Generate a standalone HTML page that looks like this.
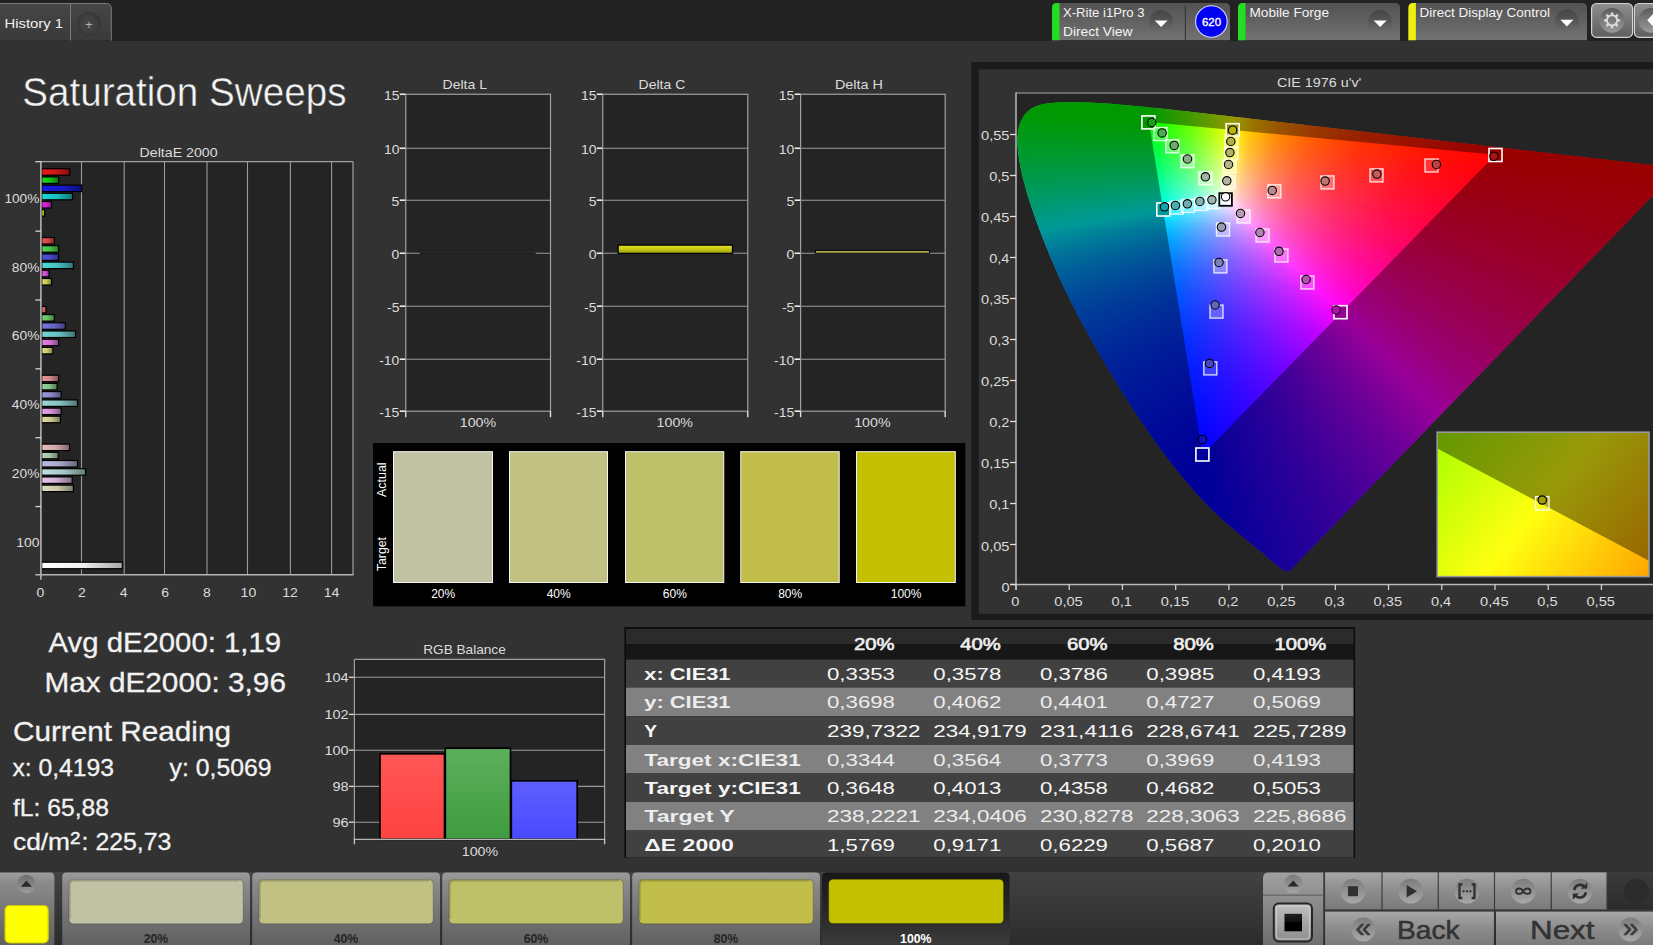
<!DOCTYPE html>
<html lang="en"><head><meta charset="utf-8"><title>Saturation Sweeps</title>
<style>html,body{margin:0;padding:0;background:#323232;overflow:hidden}svg{display:block;font-family:'Liberation Sans', sans-serif}</style>
</head><body>
<svg width="1653" height="945" viewBox="0 0 1653 945">
<defs>
<linearGradient id="g1" x1="0" y1="0" x2="0" y2="1"><stop offset="0" stop-color="#464646"/><stop offset="1" stop-color="#3a3a3a"/></linearGradient>
<radialGradient id="g2" cx="0.5" cy="0.5" r="0.5"><stop offset="0" stop-color="#484848"/><stop offset="0.8" stop-color="#3c3c3c"/><stop offset="1" stop-color="#353535"/></radialGradient>
<linearGradient id="g3" x1="0" y1="0" x2="0" y2="1"><stop offset="0" stop-color="#525252"/><stop offset="1" stop-color="#727272"/></linearGradient>
<linearGradient id="g4" x1="0" y1="0" x2="0" y2="1"><stop offset="0" stop-color="#454545"/><stop offset="0.5" stop-color="#575757"/><stop offset="1" stop-color="#707070"/></linearGradient>
<linearGradient id="g5" x1="0" y1="0" x2="0" y2="1"><stop offset="0" stop-color="#454545"/><stop offset="0.5" stop-color="#575757"/><stop offset="1" stop-color="#707070"/></linearGradient>
<linearGradient id="g6" x1="0" y1="0" x2="0" y2="1"><stop offset="0" stop-color="#454545"/><stop offset="0.5" stop-color="#575757"/><stop offset="1" stop-color="#707070"/></linearGradient>
<linearGradient id="g7" x1="0" y1="0" x2="0" y2="1"><stop offset="0" stop-color="#8e8e8e"/><stop offset="1" stop-color="#5e5e5e"/></linearGradient>
<linearGradient id="g8" x1="0" y1="0" x2="0" y2="1"><stop offset="0" stop-color="#5c5c5c"/><stop offset="1" stop-color="#9a9a9a"/></linearGradient>
<linearGradient id="g9" x1="0" y1="0" x2="1" y2="0"><stop offset="0" stop-color="#e81a1a"/><stop offset="0.5" stop-color="#d01818"/><stop offset="1" stop-color="#800e0e"/></linearGradient>
<linearGradient id="g10" x1="0" y1="0" x2="1" y2="0"><stop offset="0" stop-color="#1ad71a"/><stop offset="0.5" stop-color="#18c018"/><stop offset="1" stop-color="#0e770e"/></linearGradient>
<linearGradient id="g11" x1="0" y1="0" x2="1" y2="0"><stop offset="0" stop-color="#1a1ae0"/><stop offset="0.5" stop-color="#1818c8"/><stop offset="1" stop-color="#0e0e7c"/></linearGradient>
<linearGradient id="g12" x1="0" y1="0" x2="1" y2="0"><stop offset="0" stop-color="#1ad7d7"/><stop offset="0.5" stop-color="#18c0c0"/><stop offset="1" stop-color="#0e7777"/></linearGradient>
<linearGradient id="g13" x1="0" y1="0" x2="1" y2="0"><stop offset="0" stop-color="#e823e8"/><stop offset="0.5" stop-color="#d020d0"/><stop offset="1" stop-color="#801380"/></linearGradient>
<linearGradient id="g14" x1="0" y1="0" x2="1" y2="0"><stop offset="0" stop-color="#e0e01a"/><stop offset="0.5" stop-color="#c8c818"/><stop offset="1" stop-color="#7c7c0e"/></linearGradient>
<linearGradient id="g15" x1="0" y1="0" x2="1" y2="0"><stop offset="0" stop-color="#e85050"/><stop offset="0.5" stop-color="#d04848"/><stop offset="1" stop-color="#802c2c"/></linearGradient>
<linearGradient id="g16" x1="0" y1="0" x2="1" y2="0"><stop offset="0" stop-color="#50d750"/><stop offset="0.5" stop-color="#48c048"/><stop offset="1" stop-color="#2c772c"/></linearGradient>
<linearGradient id="g17" x1="0" y1="0" x2="1" y2="0"><stop offset="0" stop-color="#5050e0"/><stop offset="0.5" stop-color="#4848c8"/><stop offset="1" stop-color="#2c2c7c"/></linearGradient>
<linearGradient id="g18" x1="0" y1="0" x2="1" y2="0"><stop offset="0" stop-color="#50d7d7"/><stop offset="0.5" stop-color="#48c0c0"/><stop offset="1" stop-color="#2c7777"/></linearGradient>
<linearGradient id="g19" x1="0" y1="0" x2="1" y2="0"><stop offset="0" stop-color="#e859e8"/><stop offset="0.5" stop-color="#d050d0"/><stop offset="1" stop-color="#803180"/></linearGradient>
<linearGradient id="g20" x1="0" y1="0" x2="1" y2="0"><stop offset="0" stop-color="#e0e059"/><stop offset="0.5" stop-color="#c8c850"/><stop offset="1" stop-color="#7c7c31"/></linearGradient>
<linearGradient id="g21" x1="0" y1="0" x2="1" y2="0"><stop offset="0" stop-color="#e87474"/><stop offset="0.5" stop-color="#d06868"/><stop offset="1" stop-color="#804040"/></linearGradient>
<linearGradient id="g22" x1="0" y1="0" x2="1" y2="0"><stop offset="0" stop-color="#74d774"/><stop offset="0.5" stop-color="#68c068"/><stop offset="1" stop-color="#407740"/></linearGradient>
<linearGradient id="g23" x1="0" y1="0" x2="1" y2="0"><stop offset="0" stop-color="#7474e0"/><stop offset="0.5" stop-color="#6868c8"/><stop offset="1" stop-color="#40407c"/></linearGradient>
<linearGradient id="g24" x1="0" y1="0" x2="1" y2="0"><stop offset="0" stop-color="#74d7d7"/><stop offset="0.5" stop-color="#68c0c0"/><stop offset="1" stop-color="#407777"/></linearGradient>
<linearGradient id="g25" x1="0" y1="0" x2="1" y2="0"><stop offset="0" stop-color="#e87de8"/><stop offset="0.5" stop-color="#d070d0"/><stop offset="1" stop-color="#804580"/></linearGradient>
<linearGradient id="g26" x1="0" y1="0" x2="1" y2="0"><stop offset="0" stop-color="#e0e07d"/><stop offset="0.5" stop-color="#c8c870"/><stop offset="1" stop-color="#7c7c45"/></linearGradient>
<linearGradient id="g27" x1="0" y1="0" x2="1" y2="0"><stop offset="0" stop-color="#e89898"/><stop offset="0.5" stop-color="#d08888"/><stop offset="1" stop-color="#805454"/></linearGradient>
<linearGradient id="g28" x1="0" y1="0" x2="1" y2="0"><stop offset="0" stop-color="#98d798"/><stop offset="0.5" stop-color="#88c088"/><stop offset="1" stop-color="#547754"/></linearGradient>
<linearGradient id="g29" x1="0" y1="0" x2="1" y2="0"><stop offset="0" stop-color="#9898e0"/><stop offset="0.5" stop-color="#8888c8"/><stop offset="1" stop-color="#54547c"/></linearGradient>
<linearGradient id="g30" x1="0" y1="0" x2="1" y2="0"><stop offset="0" stop-color="#98d7d7"/><stop offset="0.5" stop-color="#88c0c0"/><stop offset="1" stop-color="#547777"/></linearGradient>
<linearGradient id="g31" x1="0" y1="0" x2="1" y2="0"><stop offset="0" stop-color="#e8a1e8"/><stop offset="0.5" stop-color="#d090d0"/><stop offset="1" stop-color="#805980"/></linearGradient>
<linearGradient id="g32" x1="0" y1="0" x2="1" y2="0"><stop offset="0" stop-color="#e0e0a1"/><stop offset="0.5" stop-color="#c8c890"/><stop offset="1" stop-color="#7c7c59"/></linearGradient>
<linearGradient id="g33" x1="0" y1="0" x2="1" y2="0"><stop offset="0" stop-color="#e8bcbc"/><stop offset="0.5" stop-color="#d0a8a8"/><stop offset="1" stop-color="#806868"/></linearGradient>
<linearGradient id="g34" x1="0" y1="0" x2="1" y2="0"><stop offset="0" stop-color="#bcd7bc"/><stop offset="0.5" stop-color="#a8c0a8"/><stop offset="1" stop-color="#687768"/></linearGradient>
<linearGradient id="g35" x1="0" y1="0" x2="1" y2="0"><stop offset="0" stop-color="#bcbce0"/><stop offset="0.5" stop-color="#a8a8c8"/><stop offset="1" stop-color="#68687c"/></linearGradient>
<linearGradient id="g36" x1="0" y1="0" x2="1" y2="0"><stop offset="0" stop-color="#bce0e0"/><stop offset="0.5" stop-color="#a8c8c8"/><stop offset="1" stop-color="#687c7c"/></linearGradient>
<linearGradient id="g37" x1="0" y1="0" x2="1" y2="0"><stop offset="0" stop-color="#e8c5e8"/><stop offset="0.5" stop-color="#d0b0d0"/><stop offset="1" stop-color="#806d80"/></linearGradient>
<linearGradient id="g38" x1="0" y1="0" x2="1" y2="0"><stop offset="0" stop-color="#e0e0bc"/><stop offset="0.5" stop-color="#c8c8a8"/><stop offset="1" stop-color="#7c7c68"/></linearGradient>
<linearGradient id="g39" x1="0" y1="0" x2="1" y2="0"><stop offset="0" stop-color="#ffffff"/><stop offset="0.5" stop-color="#f0f0f0"/><stop offset="1" stop-color="#a8a8a8"/></linearGradient>
<linearGradient id="g40" x1="0" y1="0" x2="0" y2="1"><stop offset="0" stop-color="#e4e428"/><stop offset="0.5" stop-color="#c8c818"/><stop offset="1" stop-color="#98980c"/></linearGradient>
<linearGradient id="c0" gradientUnits="userSpaceOnUse" x1="1050" x2="1099"><stop offset="0" stop-color="#0f0"/><stop offset="1" stop-color="#0f0"/></linearGradient>
<linearGradient id="c1" gradientUnits="userSpaceOnUse" x1="1039" x2="1125"><stop offset="0" stop-color="#0f0"/><stop offset="1" stop-color="#0f0"/></linearGradient>
<linearGradient id="c2" gradientUnits="userSpaceOnUse" x1="1034" x2="1146"><stop offset="0" stop-color="#0f0"/><stop offset="1" stop-color="#0f0"/></linearGradient>
<linearGradient id="c3" gradientUnits="userSpaceOnUse" x1="1030" x2="1165"><stop offset="0" stop-color="#0f0"/><stop offset="0.874" stop-color="#03ff00"/><stop offset="1" stop-color="#2bff00"/></linearGradient>
<linearGradient id="c4" gradientUnits="userSpaceOnUse" x1="1028" x2="1183"><stop offset="0" stop-color="#0f0"/><stop offset="0.774" stop-color="#02ff00"/><stop offset="1" stop-color="#59ff00"/></linearGradient>
<linearGradient id="c5" gradientUnits="userSpaceOnUse" x1="1026" x2="1201"><stop offset="0" stop-color="#00ff02"/><stop offset="0.697" stop-color="#01ff00"/><stop offset="0.931" stop-color="#6aff00"/><stop offset="1" stop-color="#8dff00"/></linearGradient>
<linearGradient id="c6" gradientUnits="userSpaceOnUse" x1="1024" x2="1219"><stop offset="0" stop-color="#00ff06"/><stop offset="0.41" stop-color="#0f0"/><stop offset="0.641" stop-color="#03ff00"/><stop offset="0.851" stop-color="#6cff00"/><stop offset="1" stop-color="#c7ff00"/></linearGradient>
<linearGradient id="c7" gradientUnits="userSpaceOnUse" x1="1023" x2="1237"><stop offset="0" stop-color="#00ff09"/><stop offset="0.421" stop-color="#0f0"/><stop offset="0.589" stop-color="#02ff00"/><stop offset="0.78" stop-color="#6cff00"/><stop offset="0.939" stop-color="#d9ff00"/><stop offset="0.991" stop-color="#fffc00"/><stop offset="1" stop-color="#fff500"/></linearGradient>
<linearGradient id="c8" gradientUnits="userSpaceOnUse" x1="1022" x2="1254"><stop offset="0" stop-color="#00ff0d"/><stop offset="0.47" stop-color="#0f0"/><stop offset="0.547" stop-color="#02ff00"/><stop offset="0.72" stop-color="#69ff00"/><stop offset="0.866" stop-color="#d6ff00"/><stop offset="0.914" stop-color="#ff0"/><stop offset="0.996" stop-color="#ffc400"/><stop offset="1" stop-color="#ffc100"/></linearGradient>
<linearGradient id="c9" gradientUnits="userSpaceOnUse" x1="1020" x2="1271"><stop offset="0" stop-color="#00ff10"/><stop offset="0.514" stop-color="#01ff00"/><stop offset="0.673" stop-color="#69ff00"/><stop offset="0.809" stop-color="#d6ff00"/><stop offset="0.853" stop-color="#ff0"/><stop offset="0.924" stop-color="#ffc600"/><stop offset="1" stop-color="#ff9b00"/></linearGradient>
<linearGradient id="c10" gradientUnits="userSpaceOnUse" x1="1020" x2="1289"><stop offset="0" stop-color="#00ff13"/><stop offset="0.483" stop-color="#02ff00"/><stop offset="0.632" stop-color="#6bff00"/><stop offset="0.758" stop-color="#daff00"/><stop offset="0.796" stop-color="#fffe00"/><stop offset="0.862" stop-color="#ffc500"/><stop offset="0.955" stop-color="#ff9000"/><stop offset="1" stop-color="#ff7d00"/></linearGradient>
<linearGradient id="c11" gradientUnits="userSpaceOnUse" x1="1019" x2="1306"><stop offset="0" stop-color="#00ff17"/><stop offset="0.456" stop-color="#02ff04"/><stop offset="0.596" stop-color="#6bff00"/><stop offset="0.714" stop-color="#dbff00"/><stop offset="0.749" stop-color="#fffd00"/><stop offset="0.812" stop-color="#ffc400"/><stop offset="0.899" stop-color="#ff8f00"/><stop offset="1" stop-color="#ff6700"/></linearGradient>
<linearGradient id="c12" gradientUnits="userSpaceOnUse" x1="1018" x2="1323"><stop offset="0" stop-color="#00ff1a"/><stop offset="0.433" stop-color="#01ff08"/><stop offset="0.561" stop-color="#68ff00"/><stop offset="0.672" stop-color="#d8ff00"/><stop offset="0.708" stop-color="#fffd00"/><stop offset="0.767" stop-color="#ffc300"/><stop offset="0.849" stop-color="#ff8e00"/><stop offset="0.967" stop-color="#ff5f00"/><stop offset="1" stop-color="#f50"/></linearGradient>
<linearGradient id="c13" gradientUnits="userSpaceOnUse" x1="1018" x2="1341"><stop offset="0" stop-color="#00ff1e"/><stop offset="0.412" stop-color="#03ff0d"/><stop offset="0.533" stop-color="#6bff05"/><stop offset="0.635" stop-color="#d8ff00"/><stop offset="0.669" stop-color="#fffc00"/><stop offset="0.724" stop-color="#ffc200"/><stop offset="0.802" stop-color="#ff8e00"/><stop offset="0.913" stop-color="#ff5e00"/><stop offset="1" stop-color="#ff4600"/></linearGradient>
<linearGradient id="c14" gradientUnits="userSpaceOnUse" x1="1018" x2="1358"><stop offset="0" stop-color="#00ff21"/><stop offset="0.391" stop-color="#02ff11"/><stop offset="0.506" stop-color="#6aff0a"/><stop offset="0.603" stop-color="#d9ff03"/><stop offset="0.632" stop-color="#ff0"/><stop offset="0.685" stop-color="#ffc400"/><stop offset="0.759" stop-color="#ff8f00"/><stop offset="0.862" stop-color="#ff6000"/><stop offset="1" stop-color="#ff3900"/></linearGradient>
<linearGradient id="c15" gradientUnits="userSpaceOnUse" x1="1017" x2="1375"><stop offset="0" stop-color="#00ff24"/><stop offset="0.374" stop-color="#01ff16"/><stop offset="0.483" stop-color="#6aff0f"/><stop offset="0.575" stop-color="#d9ff08"/><stop offset="0.603" stop-color="#fffe06"/><stop offset="0.654" stop-color="#ffc301"/><stop offset="0.723" stop-color="#ff8e00"/><stop offset="0.821" stop-color="#ff5f00"/><stop offset="0.969" stop-color="#ff3500"/><stop offset="1" stop-color="#ff2f00"/></linearGradient>
<linearGradient id="c16" gradientUnits="userSpaceOnUse" x1="1017" x2="1392"><stop offset="0" stop-color="#00ff28"/><stop offset="0.36" stop-color="#03ff1a"/><stop offset="0.461" stop-color="#6aff14"/><stop offset="0.549" stop-color="#daff0e"/><stop offset="0.576" stop-color="#fffd0b"/><stop offset="0.624" stop-color="#ffc305"/><stop offset="0.691" stop-color="#ff8d00"/><stop offset="0.784" stop-color="#ff5e00"/><stop offset="0.925" stop-color="#ff3400"/><stop offset="1" stop-color="#ff2600"/></linearGradient>
<linearGradient id="c17" gradientUnits="userSpaceOnUse" x1="1017" x2="1410"><stop offset="0" stop-color="#00ff2b"/><stop offset="0.344" stop-color="#02ff1f"/><stop offset="0.44" stop-color="#6aff19"/><stop offset="0.522" stop-color="#d6ff14"/><stop offset="0.55" stop-color="#fffd11"/><stop offset="0.595" stop-color="#ffc20a"/><stop offset="0.659" stop-color="#ff8c04"/><stop offset="0.748" stop-color="#ff5d00"/><stop offset="0.883" stop-color="#ff3400"/><stop offset="1" stop-color="#ff1e00"/></linearGradient>
<linearGradient id="c18" gradientUnits="userSpaceOnUse" x1="1017" x2="1427"><stop offset="0" stop-color="#00ff2f"/><stop offset="0.329" stop-color="#01ff24"/><stop offset="0.422" stop-color="#6aff1f"/><stop offset="0.5" stop-color="#d7ff19"/><stop offset="0.527" stop-color="#fffc17"/><stop offset="0.571" stop-color="#ffc10f"/><stop offset="0.632" stop-color="#ff8b07"/><stop offset="0.717" stop-color="#ff5d01"/><stop offset="0.846" stop-color="#f30"/><stop offset="1" stop-color="#ff1700"/></linearGradient>
<linearGradient id="c19" gradientUnits="userSpaceOnUse" x1="1017" x2="1444"><stop offset="0" stop-color="#00ff32"/><stop offset="0.319" stop-color="#03ff28"/><stop offset="0.407" stop-color="#6cff24"/><stop offset="0.482" stop-color="#dbff1f"/><stop offset="0.504" stop-color="#ffff1e"/><stop offset="0.546" stop-color="#ffc314"/><stop offset="0.602" stop-color="#ff8e0c"/><stop offset="0.681" stop-color="#ff5f04"/><stop offset="0.801" stop-color="#ff3600"/><stop offset="0.991" stop-color="#ff1200"/><stop offset="1" stop-color="#f10"/></linearGradient>
<linearGradient id="c20" gradientUnits="userSpaceOnUse" x1="1017" x2="1462"><stop offset="0" stop-color="#00ff36"/><stop offset="0.306" stop-color="#02ff2d"/><stop offset="0.389" stop-color="#69ff29"/><stop offset="0.461" stop-color="#d8ff25"/><stop offset="0.483" stop-color="#fffe24"/><stop offset="0.521" stop-color="#ffc51a"/><stop offset="0.575" stop-color="#ff8f10"/><stop offset="0.652" stop-color="#ff6008"/><stop offset="0.766" stop-color="#ff3600"/><stop offset="0.948" stop-color="#ff1200"/><stop offset="1" stop-color="#ff0b00"/></linearGradient>
<linearGradient id="c21" gradientUnits="userSpaceOnUse" x1="1017" x2="1479"><stop offset="0" stop-color="#00ff39"/><stop offset="0.294" stop-color="#01ff32"/><stop offset="0.374" stop-color="#69ff2f"/><stop offset="0.444" stop-color="#d8ff2b"/><stop offset="0.465" stop-color="#fffe2a"/><stop offset="0.502" stop-color="#ffc41f"/><stop offset="0.554" stop-color="#ff8e14"/><stop offset="0.628" stop-color="#ff5f0b"/><stop offset="0.738" stop-color="#ff3503"/><stop offset="0.913" stop-color="#f10"/><stop offset="1" stop-color="#ff0600"/></linearGradient>
<linearGradient id="c22" gradientUnits="userSpaceOnUse" x1="1017" x2="1496"><stop offset="0" stop-color="#00ff3d"/><stop offset="0.286" stop-color="#03ff37"/><stop offset="0.363" stop-color="#6cff34"/><stop offset="0.428" stop-color="#d9ff31"/><stop offset="0.449" stop-color="#fffd30"/><stop offset="0.484" stop-color="#ffc324"/><stop offset="0.534" stop-color="#ff8e18"/><stop offset="0.605" stop-color="#ff5e0e"/><stop offset="0.712" stop-color="#ff3405"/><stop offset="0.881" stop-color="#f10"/><stop offset="1" stop-color="#ff0200"/></linearGradient>
<linearGradient id="c23" gradientUnits="userSpaceOnUse" x1="1017" x2="1514"><stop offset="0" stop-color="#00ff41"/><stop offset="0.276" stop-color="#02ff3c"/><stop offset="0.35" stop-color="#6bff3a"/><stop offset="0.412" stop-color="#d9ff38"/><stop offset="0.433" stop-color="#fffc36"/><stop offset="0.467" stop-color="#ffc229"/><stop offset="0.515" stop-color="#ff8d1c"/><stop offset="0.584" stop-color="#ff5d11"/><stop offset="0.686" stop-color="#ff3407"/><stop offset="0.849" stop-color="#ff1000"/><stop offset="1" stop-color="#f00"/></linearGradient>
<linearGradient id="c24" gradientUnits="userSpaceOnUse" x1="1017" x2="1531"><stop offset="0" stop-color="#0f4"/><stop offset="0.267" stop-color="#01ff41"/><stop offset="0.339" stop-color="#6bff3f"/><stop offset="0.399" stop-color="#daff3e"/><stop offset="0.416" stop-color="#feff3d"/><stop offset="0.451" stop-color="#ffc22e"/><stop offset="0.496" stop-color="#ff8e21"/><stop offset="0.56" stop-color="#ff5f15"/><stop offset="0.658" stop-color="#ff350a"/><stop offset="0.813" stop-color="#ff1101"/><stop offset="0.967" stop-color="#f00"/><stop offset="1" stop-color="#f00"/></linearGradient>
<linearGradient id="c25" gradientUnits="userSpaceOnUse" x1="1018" x2="1549"><stop offset="0" stop-color="#00ff48"/><stop offset="0.258" stop-color="#03ff46"/><stop offset="0.326" stop-color="#6bff45"/><stop offset="0.384" stop-color="#daff44"/><stop offset="0.401" stop-color="#ff4"/><stop offset="0.433" stop-color="#ffc334"/><stop offset="0.476" stop-color="#ff8f25"/><stop offset="0.539" stop-color="#ff5f18"/><stop offset="0.631" stop-color="#ff360d"/><stop offset="0.778" stop-color="#ff1203"/><stop offset="0.928" stop-color="#f00"/><stop offset="1" stop-color="#f00"/></linearGradient>
<linearGradient id="c26" gradientUnits="userSpaceOnUse" x1="1018" x2="1566"><stop offset="0" stop-color="#00ff4c"/><stop offset="0.25" stop-color="#02ff4b"/><stop offset="0.316" stop-color="#6bff4b"/><stop offset="0.372" stop-color="#dbff4b"/><stop offset="0.389" stop-color="#fffe4a"/><stop offset="0.42" stop-color="#ffc339"/><stop offset="0.462" stop-color="#ff8e29"/><stop offset="0.522" stop-color="#ff5e1b"/><stop offset="0.611" stop-color="#ff350f"/><stop offset="0.754" stop-color="#ff1105"/><stop offset="0.896" stop-color="#f00"/><stop offset="1" stop-color="#f00"/></linearGradient>
<linearGradient id="c27" gradientUnits="userSpaceOnUse" x1="1018" x2="1583"><stop offset="0" stop-color="#00ff4f"/><stop offset="0.242" stop-color="#01ff50"/><stop offset="0.306" stop-color="#6aff51"/><stop offset="0.359" stop-color="#d7ff51"/><stop offset="0.377" stop-color="#fffd51"/><stop offset="0.407" stop-color="#ffc23e"/><stop offset="0.448" stop-color="#ff8d2d"/><stop offset="0.506" stop-color="#ff5e1f"/><stop offset="0.593" stop-color="#ff3412"/><stop offset="0.733" stop-color="#ff1106"/><stop offset="0.867" stop-color="#f00"/><stop offset="1" stop-color="#f00"/></linearGradient>
<linearGradient id="c28" gradientUnits="userSpaceOnUse" x1="1018" x2="1601"><stop offset="0" stop-color="#00ff53"/><stop offset="0.235" stop-color="#01ff56"/><stop offset="0.297" stop-color="#6aff57"/><stop offset="0.348" stop-color="#d8ff58"/><stop offset="0.365" stop-color="#fffc57"/><stop offset="0.395" stop-color="#ffc143"/><stop offset="0.434" stop-color="#ff8c32"/><stop offset="0.491" stop-color="#ff5d22"/><stop offset="0.575" stop-color="#ff3414"/><stop offset="0.71" stop-color="#ff1008"/><stop offset="0.837" stop-color="#ff0002"/><stop offset="1" stop-color="#f00"/></linearGradient>
<linearGradient id="c29" gradientUnits="userSpaceOnUse" x1="1019" x2="1618"><stop offset="0" stop-color="#00ff57"/><stop offset="0.229" stop-color="#02ff5b"/><stop offset="0.287" stop-color="#6aff5d"/><stop offset="0.337" stop-color="#d8ff5f"/><stop offset="0.352" stop-color="#feff5f"/><stop offset="0.382" stop-color="#ffc049"/><stop offset="0.421" stop-color="#ff8b36"/><stop offset="0.476" stop-color="#ff5c25"/><stop offset="0.558" stop-color="#ff3316"/><stop offset="0.689" stop-color="#ff100a"/><stop offset="0.81" stop-color="#ff0003"/><stop offset="1" stop-color="#f00"/></linearGradient>
<linearGradient id="c30" gradientUnits="userSpaceOnUse" x1="1019" x2="1635"><stop offset="0" stop-color="#00ff5b"/><stop offset="0.222" stop-color="#02ff61"/><stop offset="0.279" stop-color="#6aff63"/><stop offset="0.328" stop-color="#d9ff65"/><stop offset="0.343" stop-color="#ff6"/><stop offset="0.369" stop-color="#ffc550"/><stop offset="0.404" stop-color="#ff903c"/><stop offset="0.455" stop-color="#ff612a"/><stop offset="0.531" stop-color="#ff371b"/><stop offset="0.651" stop-color="#ff130d"/><stop offset="0.781" stop-color="#ff0005"/><stop offset="1" stop-color="#f00"/></linearGradient>
<linearGradient id="c31" gradientUnits="userSpaceOnUse" x1="1019" x2="1652"><stop offset="0" stop-color="#00ff5f"/><stop offset="0.216" stop-color="#01ff66"/><stop offset="0.272" stop-color="#69ff69"/><stop offset="0.319" stop-color="#d9ff6c"/><stop offset="0.333" stop-color="#fffe6d"/><stop offset="0.359" stop-color="#ffc456"/><stop offset="0.393" stop-color="#ff8f41"/><stop offset="0.442" stop-color="#ff602e"/><stop offset="0.517" stop-color="#ff361d"/><stop offset="0.635" stop-color="#ff120f"/><stop offset="0.758" stop-color="#ff0006"/><stop offset="1" stop-color="#f00"/></linearGradient>
<linearGradient id="c32" gradientUnits="userSpaceOnUse" x1="1020" x2="1653"><stop offset="0" stop-color="#00ff63"/><stop offset="0.216" stop-color="#02ff6c"/><stop offset="0.272" stop-color="#6dff70"/><stop offset="0.318" stop-color="#daff73"/><stop offset="0.332" stop-color="#fffd74"/><stop offset="0.357" stop-color="#ffc35b"/><stop offset="0.392" stop-color="#ff8e45"/><stop offset="0.441" stop-color="#ff6031"/><stop offset="0.515" stop-color="#ff3620"/><stop offset="0.633" stop-color="#ff1210"/><stop offset="0.754" stop-color="#ff0008"/><stop offset="1" stop-color="#f00"/></linearGradient>
<linearGradient id="c33" gradientUnits="userSpaceOnUse" x1="1020" x2="1653"><stop offset="0" stop-color="#00ff67"/><stop offset="0.216" stop-color="#02ff72"/><stop offset="0.27" stop-color="#69ff76"/><stop offset="0.316" stop-color="#d6ff7a"/><stop offset="0.332" stop-color="#fffd7b"/><stop offset="0.357" stop-color="#ffc261"/><stop offset="0.392" stop-color="#ff8d49"/><stop offset="0.441" stop-color="#ff5f35"/><stop offset="0.515" stop-color="#ff3522"/><stop offset="0.633" stop-color="#ff1112"/><stop offset="0.75" stop-color="#ff0009"/><stop offset="1" stop-color="#f00"/></linearGradient>
<linearGradient id="c34" gradientUnits="userSpaceOnUse" x1="1020" x2="1653"><stop offset="0" stop-color="#00ff6b"/><stop offset="0.216" stop-color="#01ff77"/><stop offset="0.27" stop-color="#69ff7c"/><stop offset="0.316" stop-color="#d7ff82"/><stop offset="0.332" stop-color="#fffc82"/><stop offset="0.357" stop-color="#ffc167"/><stop offset="0.392" stop-color="#ff8d4e"/><stop offset="0.441" stop-color="#ff5e38"/><stop offset="0.515" stop-color="#ff3425"/><stop offset="0.633" stop-color="#ff1114"/><stop offset="0.747" stop-color="#ff000b"/><stop offset="1" stop-color="#f00"/></linearGradient>
<linearGradient id="c35" gradientUnits="userSpaceOnUse" x1="1021" x2="1653"><stop offset="0" stop-color="#00ff6f"/><stop offset="0.217" stop-color="#03ff7d"/><stop offset="0.271" stop-color="#6cff83"/><stop offset="0.316" stop-color="#dbff89"/><stop offset="0.329" stop-color="#ffff8b"/><stop offset="0.354" stop-color="#ffc36e"/><stop offset="0.389" stop-color="#ff8e53"/><stop offset="0.438" stop-color="#ff5e3c"/><stop offset="0.511" stop-color="#ff3528"/><stop offset="0.628" stop-color="#ff1116"/><stop offset="0.744" stop-color="#ff000d"/><stop offset="1" stop-color="#ff0001"/></linearGradient>
<linearGradient id="c36" gradientUnits="userSpaceOnUse" x1="1021" x2="1653"><stop offset="0" stop-color="#00ff73"/><stop offset="0.217" stop-color="#02ff83"/><stop offset="0.271" stop-color="#6bff8a"/><stop offset="0.315" stop-color="#d8ff90"/><stop offset="0.329" stop-color="#fffe92"/><stop offset="0.353" stop-color="#ffc675"/><stop offset="0.386" stop-color="#ff915a"/><stop offset="0.434" stop-color="#ff6142"/><stop offset="0.505" stop-color="#ff372c"/><stop offset="0.617" stop-color="#ff1319"/><stop offset="0.739" stop-color="#ff000e"/><stop offset="1" stop-color="#ff0002"/></linearGradient>
<linearGradient id="c37" gradientUnits="userSpaceOnUse" x1="1022" x2="1653"><stop offset="0" stop-color="#0f7"/><stop offset="0.216" stop-color="#01ff89"/><stop offset="0.268" stop-color="#68ff90"/><stop offset="0.312" stop-color="#d4ff98"/><stop offset="0.328" stop-color="#fffe9a"/><stop offset="0.352" stop-color="#ffc57b"/><stop offset="0.385" stop-color="#ff905f"/><stop offset="0.433" stop-color="#ff6045"/><stop offset="0.504" stop-color="#ff362f"/><stop offset="0.616" stop-color="#ff131b"/><stop offset="0.735" stop-color="#ff0010"/><stop offset="1" stop-color="#ff0003"/></linearGradient>
<linearGradient id="c38" gradientUnits="userSpaceOnUse" x1="1022" x2="1653"><stop offset="0" stop-color="#00ff7b"/><stop offset="0.217" stop-color="#03ff8f"/><stop offset="0.269" stop-color="#6bff97"/><stop offset="0.314" stop-color="#d9ff9f"/><stop offset="0.328" stop-color="#fffda1"/><stop offset="0.352" stop-color="#ffc481"/><stop offset="0.385" stop-color="#ff8f63"/><stop offset="0.433" stop-color="#ff6049"/><stop offset="0.504" stop-color="#ff3631"/><stop offset="0.616" stop-color="#ff121d"/><stop offset="0.734" stop-color="#ff0012"/><stop offset="1" stop-color="#ff0004"/></linearGradient>
<linearGradient id="c39" gradientUnits="userSpaceOnUse" x1="1023" x2="1653"><stop offset="0" stop-color="#00ff80"/><stop offset="0.216" stop-color="#02ff96"/><stop offset="0.268" stop-color="#6bff9e"/><stop offset="0.313" stop-color="#d9ffa7"/><stop offset="0.327" stop-color="#fffca8"/><stop offset="0.351" stop-color="#ffc387"/><stop offset="0.384" stop-color="#ff8e68"/><stop offset="0.432" stop-color="#ff5f4c"/><stop offset="0.503" stop-color="#ff3534"/><stop offset="0.617" stop-color="#ff111f"/><stop offset="0.73" stop-color="#ff0013"/><stop offset="1" stop-color="#ff0005"/></linearGradient>
<linearGradient id="c40" gradientUnits="userSpaceOnUse" x1="1023" x2="1653"><stop offset="0" stop-color="#00ff84"/><stop offset="0.216" stop-color="#01ff9c"/><stop offset="0.268" stop-color="#6affa5"/><stop offset="0.313" stop-color="#daffaf"/><stop offset="0.325" stop-color="#feffb2"/><stop offset="0.351" stop-color="#ffc28d"/><stop offset="0.384" stop-color="#ff8d6d"/><stop offset="0.432" stop-color="#ff5e50"/><stop offset="0.503" stop-color="#ff3437"/><stop offset="0.617" stop-color="#ff1121"/><stop offset="0.727" stop-color="#ff0015"/><stop offset="1" stop-color="#ff0006"/></linearGradient>
<linearGradient id="c41" gradientUnits="userSpaceOnUse" x1="1024" x2="1653"><stop offset="0" stop-color="#0f8"/><stop offset="0.216" stop-color="#03ffa2"/><stop offset="0.267" stop-color="#6affac"/><stop offset="0.31" stop-color="#d6ffb7"/><stop offset="0.324" stop-color="#ffb"/><stop offset="0.348" stop-color="#ffc495"/><stop offset="0.38" stop-color="#ff9074"/><stop offset="0.426" stop-color="#ff6156"/><stop offset="0.494" stop-color="#ff373c"/><stop offset="0.604" stop-color="#ff1325"/><stop offset="0.722" stop-color="#ff0017"/><stop offset="1" stop-color="#ff0007"/></linearGradient>
<linearGradient id="c42" gradientUnits="userSpaceOnUse" x1="1024" x2="1653"><stop offset="0" stop-color="#00ff8c"/><stop offset="0.216" stop-color="#02ffa9"/><stop offset="0.267" stop-color="#6affb4"/><stop offset="0.31" stop-color="#d6ffbf"/><stop offset="0.324" stop-color="#fffec2"/><stop offset="0.348" stop-color="#ffc39b"/><stop offset="0.38" stop-color="#ff8f79"/><stop offset="0.426" stop-color="#ff605a"/><stop offset="0.494" stop-color="#ff363e"/><stop offset="0.604" stop-color="#ff1227"/><stop offset="0.719" stop-color="#ff0019"/><stop offset="1" stop-color="#ff0008"/></linearGradient>
<linearGradient id="c43" gradientUnits="userSpaceOnUse" x1="1025" x2="1653"><stop offset="0" stop-color="#00ff91"/><stop offset="0.215" stop-color="#01ffaf"/><stop offset="0.266" stop-color="#6affbb"/><stop offset="0.309" stop-color="#d7ffc7"/><stop offset="0.323" stop-color="#fffdca"/><stop offset="0.347" stop-color="#ffc2a2"/><stop offset="0.379" stop-color="#ff8e7e"/><stop offset="0.425" stop-color="#ff5f5e"/><stop offset="0.494" stop-color="#ff3641"/><stop offset="0.604" stop-color="#ff1229"/><stop offset="0.715" stop-color="#ff001b"/><stop offset="1" stop-color="#ff0009"/></linearGradient>
<linearGradient id="c44" gradientUnits="userSpaceOnUse" x1="1025" x2="1653"><stop offset="0" stop-color="#00ff95"/><stop offset="0.215" stop-color="#00ffb6"/><stop offset="0.266" stop-color="#69ffc2"/><stop offset="0.309" stop-color="#d8ffcf"/><stop offset="0.323" stop-color="#fffcd2"/><stop offset="0.347" stop-color="#ffc1a8"/><stop offset="0.379" stop-color="#ff8d83"/><stop offset="0.425" stop-color="#ff5e61"/><stop offset="0.494" stop-color="#ff3544"/><stop offset="0.604" stop-color="#ff112b"/><stop offset="0.713" stop-color="#ff001c"/><stop offset="1" stop-color="#ff000a"/></linearGradient>
<linearGradient id="c45" gradientUnits="userSpaceOnUse" x1="1026" x2="1653"><stop offset="0" stop-color="#00ff9a"/><stop offset="0.207" stop-color="#0fb"/><stop offset="0.215" stop-color="#02ffbd"/><stop offset="0.265" stop-color="#69ffca"/><stop offset="0.308" stop-color="#d8ffd8"/><stop offset="0.321" stop-color="#feffdd"/><stop offset="0.346" stop-color="#ffc0ae"/><stop offset="0.378" stop-color="#ff8c88"/><stop offset="0.424" stop-color="#ff5d65"/><stop offset="0.493" stop-color="#ff3447"/><stop offset="0.603" stop-color="#ff112d"/><stop offset="0.71" stop-color="#ff001e"/><stop offset="1" stop-color="#ff000b"/></linearGradient>
<linearGradient id="c46" gradientUnits="userSpaceOnUse" x1="1027" x2="1653"><stop offset="0" stop-color="#00ff9f"/><stop offset="0.203" stop-color="#00ffc1"/><stop offset="0.214" stop-color="#01ffc4"/><stop offset="0.264" stop-color="#69ffd2"/><stop offset="0.305" stop-color="#d4ffe0"/><stop offset="0.319" stop-color="#ffffe6"/><stop offset="0.342" stop-color="#ffc6ba"/><stop offset="0.374" stop-color="#ff9090"/><stop offset="0.419" stop-color="#ff606c"/><stop offset="0.486" stop-color="#ff364c"/><stop offset="0.593" stop-color="#ff1230"/><stop offset="0.704" stop-color="#ff0020"/><stop offset="1" stop-color="#ff000c"/></linearGradient>
<linearGradient id="c47" gradientUnits="userSpaceOnUse" x1="1027" x2="1653"><stop offset="0" stop-color="#00ffa3"/><stop offset="0.198" stop-color="#00ffc6"/><stop offset="0.216" stop-color="#03ffcb"/><stop offset="0.265" stop-color="#6cffda"/><stop offset="0.307" stop-color="#d9ffe9"/><stop offset="0.319" stop-color="#fffeee"/><stop offset="0.342" stop-color="#ffc5c1"/><stop offset="0.372" stop-color="#ff9197"/><stop offset="0.417" stop-color="#ff6171"/><stop offset="0.482" stop-color="#ff3750"/><stop offset="0.586" stop-color="#ff1334"/><stop offset="0.701" stop-color="#f02"/><stop offset="1" stop-color="#ff000d"/></linearGradient>
<linearGradient id="c48" gradientUnits="userSpaceOnUse" x1="1028" x2="1652"><stop offset="0" stop-color="#00ffa8"/><stop offset="0.192" stop-color="#0fc"/><stop offset="0.215" stop-color="#02ffd2"/><stop offset="0.264" stop-color="#6cffe2"/><stop offset="0.306" stop-color="#dafff2"/><stop offset="0.319" stop-color="#fffdf6"/><stop offset="0.341" stop-color="#ffc4c7"/><stop offset="0.372" stop-color="#ff909d"/><stop offset="0.417" stop-color="#ff6075"/><stop offset="0.482" stop-color="#ff3753"/><stop offset="0.588" stop-color="#ff1235"/><stop offset="0.699" stop-color="#ff0024"/><stop offset="1" stop-color="#ff000e"/></linearGradient>
<linearGradient id="c49" gradientUnits="userSpaceOnUse" x1="1028" x2="1650"><stop offset="0" stop-color="#00ffad"/><stop offset="0.188" stop-color="#00ffd1"/><stop offset="0.215" stop-color="#01ffd9"/><stop offset="0.264" stop-color="#68ffe9"/><stop offset="0.305" stop-color="#d6fffb"/><stop offset="0.32" stop-color="#fffcff"/><stop offset="0.342" stop-color="#ffc3ce"/><stop offset="0.373" stop-color="#ff8fa2"/><stop offset="0.418" stop-color="#ff5f79"/><stop offset="0.484" stop-color="#ff3656"/><stop offset="0.59" stop-color="#ff1237"/><stop offset="0.698" stop-color="#ff0026"/><stop offset="1" stop-color="#ff000f"/></linearGradient>
<linearGradient id="c50" gradientUnits="userSpaceOnUse" x1="1029" x2="1648"><stop offset="0" stop-color="#00ffb2"/><stop offset="0.184" stop-color="#00ffd7"/><stop offset="0.215" stop-color="#00ffe0"/><stop offset="0.263" stop-color="#67fff1"/><stop offset="0.302" stop-color="#cafcff"/><stop offset="0.323" stop-color="#fff2ff"/><stop offset="0.347" stop-color="#ffb8cc"/><stop offset="0.381" stop-color="#ff849e"/><stop offset="0.43" stop-color="#ff5576"/><stop offset="0.502" stop-color="#ff2d52"/><stop offset="0.62" stop-color="#ff0b34"/><stop offset="0.701" stop-color="#ff0028"/><stop offset="1" stop-color="#ff0010"/></linearGradient>
<linearGradient id="c51" gradientUnits="userSpaceOnUse" x1="1030" x2="1646"><stop offset="0" stop-color="#00ffb7"/><stop offset="0.18" stop-color="#0fd"/><stop offset="0.216" stop-color="#02ffe8"/><stop offset="0.265" stop-color="#6bfffa"/><stop offset="0.294" stop-color="#b0f7ff"/><stop offset="0.326" stop-color="#ffe8ff"/><stop offset="0.352" stop-color="#ffaecb"/><stop offset="0.388" stop-color="#ff7b9c"/><stop offset="0.44" stop-color="#ff4e73"/><stop offset="0.519" stop-color="#ff264f"/><stop offset="0.649" stop-color="#ff0531"/><stop offset="0.727" stop-color="#ff0026"/><stop offset="1" stop-color="#f01"/></linearGradient>
<linearGradient id="c52" gradientUnits="userSpaceOnUse" x1="1030" x2="1644"><stop offset="0" stop-color="#0fb"/><stop offset="0.178" stop-color="#00ffe3"/><stop offset="0.217" stop-color="#01ffef"/><stop offset="0.265" stop-color="#69fbff"/><stop offset="0.331" stop-color="#ffdeff"/><stop offset="0.357" stop-color="#ffa7cc"/><stop offset="0.394" stop-color="#ff759c"/><stop offset="0.448" stop-color="#ff4973"/><stop offset="0.531" stop-color="#ff224f"/><stop offset="0.669" stop-color="#ff0130"/><stop offset="0.936" stop-color="#ff0016"/><stop offset="1" stop-color="#ff0012"/></linearGradient>
<linearGradient id="c53" gradientUnits="userSpaceOnUse" x1="1031" x2="1642"><stop offset="0" stop-color="#00ffc1"/><stop offset="0.173" stop-color="#00ffe9"/><stop offset="0.216" stop-color="#00fff7"/><stop offset="0.249" stop-color="#43faff"/><stop offset="0.334" stop-color="#ffd5ff"/><stop offset="0.362" stop-color="#ff9eca"/><stop offset="0.401" stop-color="#ff6d9b"/><stop offset="0.458" stop-color="#ff4271"/><stop offset="0.548" stop-color="#ff1c4c"/><stop offset="0.681" stop-color="#ff0030"/><stop offset="0.954" stop-color="#ff0016"/><stop offset="1" stop-color="#ff0014"/></linearGradient>
<linearGradient id="c54" gradientUnits="userSpaceOnUse" x1="1032" x2="1640"><stop offset="0" stop-color="#00ffc6"/><stop offset="0.169" stop-color="#0fe"/><stop offset="0.217" stop-color="#03ffff"/><stop offset="0.309" stop-color="#c0d9ff"/><stop offset="0.337" stop-color="#fcf"/><stop offset="0.367" stop-color="#ff96c9"/><stop offset="0.408" stop-color="#f69"/><stop offset="0.469" stop-color="#ff3c6f"/><stop offset="0.566" stop-color="#ff174a"/><stop offset="0.686" stop-color="#ff0031"/><stop offset="0.959" stop-color="#ff0017"/><stop offset="1" stop-color="#ff0015"/></linearGradient>
<linearGradient id="c55" gradientUnits="userSpaceOnUse" x1="1032" x2="1638"><stop offset="0" stop-color="#00ffcb"/><stop offset="0.167" stop-color="#00fff4"/><stop offset="0.208" stop-color="#00fbff"/><stop offset="0.218" stop-color="#02f7ff"/><stop offset="0.312" stop-color="#bed1ff"/><stop offset="0.342" stop-color="#ffc4ff"/><stop offset="0.371" stop-color="#ff90ca"/><stop offset="0.414" stop-color="#ff6099"/><stop offset="0.477" stop-color="#ff376f"/><stop offset="0.576" stop-color="#ff144a"/><stop offset="0.688" stop-color="#f03"/><stop offset="0.957" stop-color="#ff0018"/><stop offset="1" stop-color="#ff0016"/></linearGradient>
<linearGradient id="c56" gradientUnits="userSpaceOnUse" x1="1033" x2="1636"><stop offset="0" stop-color="#00ffd0"/><stop offset="0.164" stop-color="#00fffb"/><stop offset="0.201" stop-color="#00f6ff"/><stop offset="0.219" stop-color="#04efff"/><stop offset="0.315" stop-color="#c0c9ff"/><stop offset="0.345" stop-color="#ffbcff"/><stop offset="0.375" stop-color="#ff8acb"/><stop offset="0.418" stop-color="#ff5d9a"/><stop offset="0.483" stop-color="#ff346f"/><stop offset="0.584" stop-color="#ff124b"/><stop offset="0.688" stop-color="#ff0035"/><stop offset="0.952" stop-color="#ff001a"/><stop offset="1" stop-color="#ff0017"/></linearGradient>
<linearGradient id="c57" gradientUnits="userSpaceOnUse" x1="1034" x2="1634"><stop offset="0" stop-color="#00ffd5"/><stop offset="0.165" stop-color="#00fcff"/><stop offset="0.218" stop-color="#03e9ff"/><stop offset="0.318" stop-color="#c1c1ff"/><stop offset="0.348" stop-color="#ffb4ff"/><stop offset="0.38" stop-color="#ff83c9"/><stop offset="0.425" stop-color="#ff5699"/><stop offset="0.492" stop-color="#ff306e"/><stop offset="0.597" stop-color="#ff0e4a"/><stop offset="0.688" stop-color="#ff0037"/><stop offset="0.947" stop-color="#ff001c"/><stop offset="1" stop-color="#ff0018"/></linearGradient>
<linearGradient id="c58" gradientUnits="userSpaceOnUse" x1="1034" x2="1632"><stop offset="0" stop-color="#00ffdb"/><stop offset="0.145" stop-color="#00fcff"/><stop offset="0.219" stop-color="#02e2ff"/><stop offset="0.321" stop-color="#bfbaff"/><stop offset="0.353" stop-color="#ffacff"/><stop offset="0.385" stop-color="#ff7eca"/><stop offset="0.43" stop-color="#ff539a"/><stop offset="0.497" stop-color="#ff2d70"/><stop offset="0.602" stop-color="#ff0d4b"/><stop offset="0.689" stop-color="#ff0039"/><stop offset="0.943" stop-color="#ff001d"/><stop offset="1" stop-color="#ff001a"/></linearGradient>
<linearGradient id="c59" gradientUnits="userSpaceOnUse" x1="1035" x2="1631"><stop offset="0" stop-color="#00ffe0"/><stop offset="0.124" stop-color="#00fcff"/><stop offset="0.218" stop-color="#01dcff"/><stop offset="0.322" stop-color="#bdb4ff"/><stop offset="0.356" stop-color="#ffa5ff"/><stop offset="0.389" stop-color="#ff77c9"/><stop offset="0.436" stop-color="#ff4d99"/><stop offset="0.507" stop-color="#ff296e"/><stop offset="0.617" stop-color="#ff0949"/><stop offset="0.69" stop-color="#ff003b"/><stop offset="0.94" stop-color="#ff001f"/><stop offset="1" stop-color="#ff001b"/></linearGradient>
<linearGradient id="c60" gradientUnits="userSpaceOnUse" x1="1036" x2="1629"><stop offset="0" stop-color="#00ffe6"/><stop offset="0.105" stop-color="#00fcff"/><stop offset="0.219" stop-color="#02d5ff"/><stop offset="0.325" stop-color="#beadff"/><stop offset="0.359" stop-color="#ff9fff"/><stop offset="0.393" stop-color="#ff72ca"/><stop offset="0.44" stop-color="#ff4a9a"/><stop offset="0.511" stop-color="#ff2670"/><stop offset="0.622" stop-color="#ff084b"/><stop offset="0.691" stop-color="#ff003d"/><stop offset="0.939" stop-color="#ff0020"/><stop offset="1" stop-color="#ff001c"/></linearGradient>
<linearGradient id="c61" gradientUnits="userSpaceOnUse" x1="1037" x2="1627"><stop offset="0" stop-color="#00ffec"/><stop offset="0.083" stop-color="#00fcff"/><stop offset="0.219" stop-color="#02cfff"/><stop offset="0.329" stop-color="#bfa6ff"/><stop offset="0.363" stop-color="#ff98ff"/><stop offset="0.398" stop-color="#ff6cc8"/><stop offset="0.447" stop-color="#ff4599"/><stop offset="0.52" stop-color="#ff236f"/><stop offset="0.636" stop-color="#ff054a"/><stop offset="0.708" stop-color="#ff003c"/><stop offset="0.968" stop-color="#ff001f"/><stop offset="1" stop-color="#ff001d"/></linearGradient>
<linearGradient id="c62" gradientUnits="userSpaceOnUse" x1="1037" x2="1625"><stop offset="0" stop-color="#00fff1"/><stop offset="0.065" stop-color="#00fbff"/><stop offset="0.219" stop-color="#01caff"/><stop offset="0.332" stop-color="#bea0ff"/><stop offset="0.369" stop-color="#ff8ffc"/><stop offset="0.405" stop-color="#ff66c7"/><stop offset="0.456" stop-color="#ff4097"/><stop offset="0.532" stop-color="#ff1e6d"/><stop offset="0.653" stop-color="#ff0149"/><stop offset="0.861" stop-color="#ff002a"/><stop offset="1" stop-color="#ff001e"/></linearGradient>
<linearGradient id="c63" gradientUnits="userSpaceOnUse" x1="1038" x2="1623"><stop offset="0" stop-color="#00fff7"/><stop offset="0.046" stop-color="#00faff"/><stop offset="0.221" stop-color="#02c4ff"/><stop offset="0.335" stop-color="#bf9aff"/><stop offset="0.373" stop-color="#ff89fc"/><stop offset="0.41" stop-color="#ff60c6"/><stop offset="0.463" stop-color="#ff3b96"/><stop offset="0.542" stop-color="#ff1b6c"/><stop offset="0.667" stop-color="#ff0048"/><stop offset="0.882" stop-color="#ff0029"/><stop offset="1" stop-color="#ff0020"/></linearGradient>
<linearGradient id="c64" gradientUnits="userSpaceOnUse" x1="1039" x2="1621"><stop offset="0" stop-color="#00fffd"/><stop offset="0.218" stop-color="#00bfff"/><stop offset="0.325" stop-color="#a999ff"/><stop offset="0.376" stop-color="#ff84fc"/><stop offset="0.414" stop-color="#ff5cc7"/><stop offset="0.467" stop-color="#ff3997"/><stop offset="0.548" stop-color="#ff196d"/><stop offset="0.668" stop-color="#ff004a"/><stop offset="0.881" stop-color="#ff002b"/><stop offset="1" stop-color="#ff0021"/></linearGradient>
<linearGradient id="c65" gradientUnits="userSpaceOnUse" x1="1040" x2="1619"><stop offset="0" stop-color="#00fbff"/><stop offset="0.219" stop-color="#01baff"/><stop offset="0.34" stop-color="#be8fff"/><stop offset="0.38" stop-color="#ff7efc"/><stop offset="0.42" stop-color="#ff57c6"/><stop offset="0.475" stop-color="#ff3496"/><stop offset="0.558" stop-color="#ff156c"/><stop offset="0.67" stop-color="#ff004c"/><stop offset="0.881" stop-color="#ff002d"/><stop offset="1" stop-color="#f02"/></linearGradient>
<linearGradient id="c66" gradientUnits="userSpaceOnUse" x1="1040" x2="1617"><stop offset="0" stop-color="#00f6ff"/><stop offset="0.222" stop-color="#02b4ff"/><stop offset="0.345" stop-color="#bf89ff"/><stop offset="0.385" stop-color="#ff79fc"/><stop offset="0.425" stop-color="#ff53c7"/><stop offset="0.482" stop-color="#ff3196"/><stop offset="0.567" stop-color="#ff136c"/><stop offset="0.671" stop-color="#ff004e"/><stop offset="0.879" stop-color="#ff002e"/><stop offset="1" stop-color="#ff0024"/></linearGradient>
<linearGradient id="c67" gradientUnits="userSpaceOnUse" x1="1041" x2="1615"><stop offset="0" stop-color="#00f0ff"/><stop offset="0.221" stop-color="#02b0ff"/><stop offset="0.347" stop-color="#be85ff"/><stop offset="0.389" stop-color="#ff74fc"/><stop offset="0.429" stop-color="#ff4fc7"/><stop offset="0.486" stop-color="#ff2e98"/><stop offset="0.571" stop-color="#ff116d"/><stop offset="0.671" stop-color="#ff0050"/><stop offset="0.875" stop-color="#ff0030"/><stop offset="1" stop-color="#ff0025"/></linearGradient>
<linearGradient id="c68" gradientUnits="userSpaceOnUse" x1="1042" x2="1613"><stop offset="0" stop-color="#00ebff"/><stop offset="0.221" stop-color="#01abff"/><stop offset="0.35" stop-color="#bf80ff"/><stop offset="0.392" stop-color="#ff6ffc"/><stop offset="0.434" stop-color="#ff4bc6"/><stop offset="0.494" stop-color="#ff2a96"/><stop offset="0.583" stop-color="#ff0e6c"/><stop offset="0.671" stop-color="#ff0053"/><stop offset="0.872" stop-color="#ff0032"/><stop offset="1" stop-color="#ff0026"/></linearGradient>
<linearGradient id="c69" gradientUnits="userSpaceOnUse" x1="1043" x2="1611"><stop offset="0" stop-color="#00e5ff"/><stop offset="0.222" stop-color="#02a6ff"/><stop offset="0.354" stop-color="#c07bff"/><stop offset="0.396" stop-color="#ff6afc"/><stop offset="0.438" stop-color="#ff47c7"/><stop offset="0.498" stop-color="#ff2898"/><stop offset="0.588" stop-color="#ff0c6d"/><stop offset="0.669" stop-color="#f05"/><stop offset="0.866" stop-color="#ff0035"/><stop offset="1" stop-color="#ff0028"/></linearGradient>
<linearGradient id="c70" gradientUnits="userSpaceOnUse" x1="1043" x2="1609"><stop offset="0" stop-color="#00e1ff"/><stop offset="0.223" stop-color="#02a2ff"/><stop offset="0.357" stop-color="#be76ff"/><stop offset="0.401" stop-color="#ff66fc"/><stop offset="0.445" stop-color="#ff43c6"/><stop offset="0.507" stop-color="#ff2596"/><stop offset="0.599" stop-color="#ff0a6c"/><stop offset="0.671" stop-color="#ff0057"/><stop offset="0.866" stop-color="#ff0036"/><stop offset="1" stop-color="#ff0029"/></linearGradient>
<linearGradient id="c71" gradientUnits="userSpaceOnUse" x1="1044" x2="1607"><stop offset="0" stop-color="#00dcff"/><stop offset="0.222" stop-color="#019eff"/><stop offset="0.359" stop-color="#bd72ff"/><stop offset="0.405" stop-color="#ff61fc"/><stop offset="0.449" stop-color="#ff40c7"/><stop offset="0.513" stop-color="#ff2296"/><stop offset="0.607" stop-color="#ff086c"/><stop offset="0.673" stop-color="#ff0059"/><stop offset="0.867" stop-color="#ff0038"/><stop offset="1" stop-color="#ff002b"/></linearGradient>
<linearGradient id="c72" gradientUnits="userSpaceOnUse" x1="1045" x2="1605"><stop offset="0" stop-color="#00d7ff"/><stop offset="0.223" stop-color="#029aff"/><stop offset="0.364" stop-color="#c06dff"/><stop offset="0.409" stop-color="#ff5dfc"/><stop offset="0.454" stop-color="#ff3dc8"/><stop offset="0.518" stop-color="#ff2098"/><stop offset="0.614" stop-color="#ff066d"/><stop offset="0.679" stop-color="#ff005a"/><stop offset="0.873" stop-color="#ff0039"/><stop offset="1" stop-color="#ff002c"/></linearGradient>
<linearGradient id="c73" gradientUnits="userSpaceOnUse" x1="1046" x2="1603"><stop offset="0" stop-color="#00d2ff"/><stop offset="0.223" stop-color="#0296ff"/><stop offset="0.366" stop-color="#bf69ff"/><stop offset="0.413" stop-color="#ff59fc"/><stop offset="0.46" stop-color="#ff39c7"/><stop offset="0.526" stop-color="#ff1c97"/><stop offset="0.625" stop-color="#ff036c"/><stop offset="0.781" stop-color="#ff0048"/><stop offset="1" stop-color="#ff002d"/></linearGradient>
<linearGradient id="c74" gradientUnits="userSpaceOnUse" x1="1047" x2="1601"><stop offset="0" stop-color="#00cdff"/><stop offset="0.224" stop-color="#0392ff"/><stop offset="0.37" stop-color="#c065ff"/><stop offset="0.417" stop-color="#ff55fd"/><stop offset="0.464" stop-color="#ff36c7"/><stop offset="0.531" stop-color="#ff1a98"/><stop offset="0.63" stop-color="#ff026d"/><stop offset="0.787" stop-color="#ff0049"/><stop offset="1" stop-color="#ff002f"/></linearGradient>
<linearGradient id="c75" gradientUnits="userSpaceOnUse" x1="1047" x2="1600"><stop offset="0" stop-color="#00c9ff"/><stop offset="0.224" stop-color="#028fff"/><stop offset="0.374" stop-color="#c161ff"/><stop offset="0.421" stop-color="#ff51fd"/><stop offset="0.47" stop-color="#ff32c6"/><stop offset="0.539" stop-color="#ff1797"/><stop offset="0.642" stop-color="#ff006c"/><stop offset="0.805" stop-color="#ff0048"/><stop offset="1" stop-color="#ff0030"/></linearGradient>
<linearGradient id="c76" gradientUnits="userSpaceOnUse" x1="1048" x2="1598"><stop offset="0" stop-color="#00c5ff"/><stop offset="0.224" stop-color="#028bff"/><stop offset="0.376" stop-color="#bf5dff"/><stop offset="0.425" stop-color="#ff4dfd"/><stop offset="0.475" stop-color="#ff30c7"/><stop offset="0.544" stop-color="#ff1598"/><stop offset="0.647" stop-color="#ff006d"/><stop offset="0.811" stop-color="#ff0049"/><stop offset="1" stop-color="#ff0032"/></linearGradient>
<linearGradient id="c77" gradientUnits="userSpaceOnUse" x1="1049" x2="1596"><stop offset="0" stop-color="#00c1ff"/><stop offset="0.225" stop-color="#0387ff"/><stop offset="0.38" stop-color="#c05aff"/><stop offset="0.43" stop-color="#ff49fd"/><stop offset="0.481" stop-color="#ff2cc6"/><stop offset="0.552" stop-color="#ff1397"/><stop offset="0.651" stop-color="#ff006f"/><stop offset="0.815" stop-color="#ff004a"/><stop offset="1" stop-color="#f03"/></linearGradient>
<linearGradient id="c78" gradientUnits="userSpaceOnUse" x1="1050" x2="1594"><stop offset="0" stop-color="#00bcff"/><stop offset="0.224" stop-color="#0284ff"/><stop offset="0.382" stop-color="#bf56ff"/><stop offset="0.434" stop-color="#ff46fd"/><stop offset="0.485" stop-color="#ff2ac7"/><stop offset="0.559" stop-color="#ff1097"/><stop offset="0.649" stop-color="#ff0072"/><stop offset="0.809" stop-color="#ff004d"/><stop offset="1" stop-color="#ff0035"/></linearGradient>
<linearGradient id="c79" gradientUnits="userSpaceOnUse" x1="1051" x2="1592"><stop offset="0" stop-color="#00b8ff"/><stop offset="0.224" stop-color="#0281ff"/><stop offset="0.386" stop-color="#c053ff"/><stop offset="0.438" stop-color="#ff42fd"/><stop offset="0.49" stop-color="#ff27c8"/><stop offset="0.564" stop-color="#ff0f98"/><stop offset="0.649" stop-color="#ff0075"/><stop offset="0.808" stop-color="#ff004f"/><stop offset="1" stop-color="#ff0036"/></linearGradient>
<linearGradient id="c80" gradientUnits="userSpaceOnUse" x1="1052" x2="1590"><stop offset="0" stop-color="#00b4ff"/><stop offset="0.225" stop-color="#037eff"/><stop offset="0.39" stop-color="#c04fff"/><stop offset="0.442" stop-color="#ff3ffd"/><stop offset="0.496" stop-color="#ff24c7"/><stop offset="0.572" stop-color="#ff0c97"/><stop offset="0.649" stop-color="#ff0078"/><stop offset="0.805" stop-color="#ff0052"/><stop offset="1" stop-color="#ff0038"/></linearGradient>
<linearGradient id="c81" gradientUnits="userSpaceOnUse" x1="1053" x2="1588"><stop offset="0" stop-color="#00b1ff"/><stop offset="0.224" stop-color="#027bff"/><stop offset="0.393" stop-color="#bf4cff"/><stop offset="0.447" stop-color="#ff3bfd"/><stop offset="0.501" stop-color="#ff21c7"/><stop offset="0.578" stop-color="#ff0a98"/><stop offset="0.647" stop-color="#ff007b"/><stop offset="0.8" stop-color="#f05"/><stop offset="1" stop-color="#ff0039"/></linearGradient>
<linearGradient id="c82" gradientUnits="userSpaceOnUse" x1="1053" x2="1586"><stop offset="0" stop-color="#00adff"/><stop offset="0.225" stop-color="#0278ff"/><stop offset="0.398" stop-color="#c049ff"/><stop offset="0.452" stop-color="#ff38fd"/><stop offset="0.508" stop-color="#ff1ec6"/><stop offset="0.587" stop-color="#ff0897"/><stop offset="0.649" stop-color="#ff007e"/><stop offset="0.801" stop-color="#ff0057"/><stop offset="1" stop-color="#ff003b"/></linearGradient>
<linearGradient id="c83" gradientUnits="userSpaceOnUse" x1="1054" x2="1584"><stop offset="0" stop-color="#0af"/><stop offset="0.226" stop-color="#0375ff"/><stop offset="0.402" stop-color="#c145ff"/><stop offset="0.457" stop-color="#ff35fd"/><stop offset="0.513" stop-color="#ff1cc7"/><stop offset="0.594" stop-color="#ff0697"/><stop offset="0.655" stop-color="#ff007e"/><stop offset="0.808" stop-color="#ff0058"/><stop offset="1" stop-color="#ff003c"/></linearGradient>
<linearGradient id="c84" gradientUnits="userSpaceOnUse" x1="1055" x2="1582"><stop offset="0" stop-color="#00a6ff"/><stop offset="0.226" stop-color="#0272ff"/><stop offset="0.404" stop-color="#bf43ff"/><stop offset="0.461" stop-color="#ff32fd"/><stop offset="0.518" stop-color="#ff1ac8"/><stop offset="0.6" stop-color="#ff0498"/><stop offset="0.668" stop-color="#ff007d"/><stop offset="0.827" stop-color="#ff0056"/><stop offset="1" stop-color="#ff003e"/></linearGradient>
<linearGradient id="c85" gradientUnits="userSpaceOnUse" x1="1056" x2="1580"><stop offset="0" stop-color="#00a3ff"/><stop offset="0.225" stop-color="#026fff"/><stop offset="0.406" stop-color="#be40ff"/><stop offset="0.466" stop-color="#ff2ffd"/><stop offset="0.525" stop-color="#ff17c7"/><stop offset="0.609" stop-color="#ff0297"/><stop offset="0.733" stop-color="#ff006d"/><stop offset="0.929" stop-color="#ff0048"/><stop offset="1" stop-color="#ff0040"/></linearGradient>
<linearGradient id="c86" gradientUnits="userSpaceOnUse" x1="1057" x2="1578"><stop offset="0" stop-color="#009fff"/><stop offset="0.226" stop-color="#036cff"/><stop offset="0.413" stop-color="#c13dff"/><stop offset="0.47" stop-color="#ff2cfd"/><stop offset="0.53" stop-color="#ff15c8"/><stop offset="0.614" stop-color="#ff0198"/><stop offset="0.741" stop-color="#ff006d"/><stop offset="0.94" stop-color="#ff0048"/><stop offset="1" stop-color="#ff0041"/></linearGradient>
<linearGradient id="c87" gradientUnits="userSpaceOnUse" x1="1058" x2="1576"><stop offset="0" stop-color="#009cff"/><stop offset="0.226" stop-color="#026aff"/><stop offset="0.415" stop-color="#c03aff"/><stop offset="0.475" stop-color="#ff29fd"/><stop offset="0.537" stop-color="#ff13c7"/><stop offset="0.624" stop-color="#ff0097"/><stop offset="0.753" stop-color="#ff006c"/><stop offset="0.958" stop-color="#ff0048"/><stop offset="1" stop-color="#ff0043"/></linearGradient>
<linearGradient id="c88" gradientUnits="userSpaceOnUse" x1="1059" x2="1574"><stop offset="0" stop-color="#09f"/><stop offset="0.225" stop-color="#0268ff"/><stop offset="0.417" stop-color="#bf38ff"/><stop offset="0.48" stop-color="#ff27fd"/><stop offset="0.542" stop-color="#ff11c7"/><stop offset="0.629" stop-color="#ff0098"/><stop offset="0.759" stop-color="#ff006d"/><stop offset="0.965" stop-color="#ff0049"/><stop offset="1" stop-color="#ff0045"/></linearGradient>
<linearGradient id="c89" gradientUnits="userSpaceOnUse" x1="1060" x2="1572"><stop offset="0" stop-color="#0096ff"/><stop offset="0.227" stop-color="#0365ff"/><stop offset="0.422" stop-color="#bf35ff"/><stop offset="0.484" stop-color="#ff24fd"/><stop offset="0.547" stop-color="#ff0fc8"/><stop offset="0.627" stop-color="#ff009c"/><stop offset="0.756" stop-color="#ff0071"/><stop offset="0.957" stop-color="#ff004c"/><stop offset="1" stop-color="#ff0046"/></linearGradient>
<linearGradient id="c90" gradientUnits="userSpaceOnUse" x1="1061" x2="1571"><stop offset="0" stop-color="#0092ff"/><stop offset="0.225" stop-color="#0263ff"/><stop offset="0.425" stop-color="#c032ff"/><stop offset="0.488" stop-color="#ff21fd"/><stop offset="0.553" stop-color="#ff0cc7"/><stop offset="0.625" stop-color="#ff009f"/><stop offset="0.753" stop-color="#ff0074"/><stop offset="0.951" stop-color="#ff004e"/><stop offset="1" stop-color="#ff0048"/></linearGradient>
<linearGradient id="c91" gradientUnits="userSpaceOnUse" x1="1061" x2="1569"><stop offset="0" stop-color="#0090ff"/><stop offset="0.226" stop-color="#0260ff"/><stop offset="0.429" stop-color="#bf30ff"/><stop offset="0.494" stop-color="#ff1ffd"/><stop offset="0.559" stop-color="#ff0bc8"/><stop offset="0.626" stop-color="#ff00a3"/><stop offset="0.75" stop-color="#f07"/><stop offset="0.943" stop-color="#ff0051"/><stop offset="1" stop-color="#ff0049"/></linearGradient>
<linearGradient id="c92" gradientUnits="userSpaceOnUse" x1="1062" x2="1567"><stop offset="0" stop-color="#008dff"/><stop offset="0.228" stop-color="#035eff"/><stop offset="0.434" stop-color="#c02dff"/><stop offset="0.499" stop-color="#ff1cfd"/><stop offset="0.566" stop-color="#ff08c7"/><stop offset="0.626" stop-color="#ff00a6"/><stop offset="0.749" stop-color="#ff007a"/><stop offset="0.939" stop-color="#ff0054"/><stop offset="1" stop-color="#ff004b"/></linearGradient>
<linearGradient id="c93" gradientUnits="userSpaceOnUse" x1="1063" x2="1565"><stop offset="0" stop-color="#008aff"/><stop offset="0.227" stop-color="#025cff"/><stop offset="0.438" stop-color="#c02bff"/><stop offset="0.504" stop-color="#ff1afd"/><stop offset="0.572" stop-color="#ff07c7"/><stop offset="0.629" stop-color="#ff00a8"/><stop offset="0.753" stop-color="#ff007b"/><stop offset="0.944" stop-color="#f05"/><stop offset="1" stop-color="#ff004d"/></linearGradient>
<linearGradient id="c94" gradientUnits="userSpaceOnUse" x1="1064" x2="1563"><stop offset="0" stop-color="#0087ff"/><stop offset="0.226" stop-color="#025aff"/><stop offset="0.441" stop-color="#bf29ff"/><stop offset="0.509" stop-color="#ff18fd"/><stop offset="0.579" stop-color="#ff04c7"/><stop offset="0.649" stop-color="#ff00a2"/><stop offset="0.782" stop-color="#ff0076"/><stop offset="0.988" stop-color="#ff0050"/><stop offset="1" stop-color="#ff004f"/></linearGradient>
<linearGradient id="c95" gradientUnits="userSpaceOnUse" x1="1065" x2="1561"><stop offset="0" stop-color="#0084ff"/><stop offset="0.228" stop-color="#0357ff"/><stop offset="0.446" stop-color="#c026ff"/><stop offset="0.514" stop-color="#ff15fd"/><stop offset="0.585" stop-color="#ff03c7"/><stop offset="0.685" stop-color="#ff0097"/><stop offset="0.835" stop-color="#ff006d"/><stop offset="1" stop-color="#ff0051"/></linearGradient>
<linearGradient id="c96" gradientUnits="userSpaceOnUse" x1="1066" x2="1559"><stop offset="0" stop-color="#0082ff"/><stop offset="0.227" stop-color="#0255ff"/><stop offset="0.448" stop-color="#bf24ff"/><stop offset="0.519" stop-color="#ff13fd"/><stop offset="0.59" stop-color="#ff01c8"/><stop offset="0.692" stop-color="#ff0098"/><stop offset="0.842" stop-color="#ff006d"/><stop offset="1" stop-color="#ff0052"/></linearGradient>
<linearGradient id="c97" gradientUnits="userSpaceOnUse" x1="1067" x2="1557"><stop offset="0" stop-color="#007fff"/><stop offset="0.227" stop-color="#0253ff"/><stop offset="0.453" stop-color="#c022ff"/><stop offset="0.524" stop-color="#ff11fd"/><stop offset="0.598" stop-color="#ff00c7"/><stop offset="0.702" stop-color="#ff0097"/><stop offset="0.857" stop-color="#ff006c"/><stop offset="1" stop-color="#ff0054"/></linearGradient>
<linearGradient id="c98" gradientUnits="userSpaceOnUse" x1="1068" x2="1555"><stop offset="0" stop-color="#007cff"/><stop offset="0.228" stop-color="#0351ff"/><stop offset="0.458" stop-color="#c020ff"/><stop offset="0.53" stop-color="#ff0ffd"/><stop offset="0.604" stop-color="#ff00c8"/><stop offset="0.708" stop-color="#ff0098"/><stop offset="0.864" stop-color="#ff006d"/><stop offset="1" stop-color="#ff0056"/></linearGradient>
<linearGradient id="c99" gradientUnits="userSpaceOnUse" x1="1069" x2="1553"><stop offset="0" stop-color="#007aff"/><stop offset="0.227" stop-color="#024fff"/><stop offset="0.461" stop-color="#bf1eff"/><stop offset="0.535" stop-color="#ff0dfd"/><stop offset="0.603" stop-color="#f0c"/><stop offset="0.707" stop-color="#ff009b"/><stop offset="0.86" stop-color="#ff0071"/><stop offset="1" stop-color="#ff0058"/></linearGradient>
<linearGradient id="c100" gradientUnits="userSpaceOnUse" x1="1070" x2="1551"><stop offset="0" stop-color="#07f"/><stop offset="0.227" stop-color="#024dff"/><stop offset="0.466" stop-color="#c01cff"/><stop offset="0.541" stop-color="#ff0bfd"/><stop offset="0.603" stop-color="#ff00d0"/><stop offset="0.705" stop-color="#ff009f"/><stop offset="0.857" stop-color="#ff0074"/><stop offset="1" stop-color="#ff005a"/></linearGradient>
<linearGradient id="c101" gradientUnits="userSpaceOnUse" x1="1071" x2="1549"><stop offset="0" stop-color="#0075ff"/><stop offset="0.228" stop-color="#034bff"/><stop offset="0.471" stop-color="#c119ff"/><stop offset="0.546" stop-color="#ff09fd"/><stop offset="0.603" stop-color="#ff00d4"/><stop offset="0.705" stop-color="#ff00a2"/><stop offset="0.856" stop-color="#ff0076"/><stop offset="1" stop-color="#ff005c"/></linearGradient>
<linearGradient id="c102" gradientUnits="userSpaceOnUse" x1="1072" x2="1547"><stop offset="0" stop-color="#0073ff"/><stop offset="0.227" stop-color="#024aff"/><stop offset="0.474" stop-color="#bf18ff"/><stop offset="0.552" stop-color="#ff07fd"/><stop offset="0.604" stop-color="#ff00d7"/><stop offset="0.705" stop-color="#ff00a5"/><stop offset="0.853" stop-color="#ff0079"/><stop offset="1" stop-color="#ff005e"/></linearGradient>
<linearGradient id="c103" gradientUnits="userSpaceOnUse" x1="1073" x2="1545"><stop offset="0" stop-color="#0070ff"/><stop offset="0.229" stop-color="#0348ff"/><stop offset="0.479" stop-color="#c016ff"/><stop offset="0.557" stop-color="#ff05fd"/><stop offset="0.617" stop-color="#ff00d4"/><stop offset="0.722" stop-color="#ff00a2"/><stop offset="0.877" stop-color="#ff0076"/><stop offset="1" stop-color="#ff0060"/></linearGradient>
<linearGradient id="c104" gradientUnits="userSpaceOnUse" x1="1074" x2="1543"><stop offset="0" stop-color="#006eff"/><stop offset="0.228" stop-color="#0346ff"/><stop offset="0.484" stop-color="#c114ff"/><stop offset="0.563" stop-color="#ff03fd"/><stop offset="0.646" stop-color="#ff00c7"/><stop offset="0.763" stop-color="#ff0097"/><stop offset="0.938" stop-color="#ff006c"/><stop offset="1" stop-color="#ff0062"/></linearGradient>
<linearGradient id="c105" gradientUnits="userSpaceOnUse" x1="1075" x2="1541"><stop offset="0" stop-color="#006cff"/><stop offset="0.227" stop-color="#0244ff"/><stop offset="0.487" stop-color="#c012ff"/><stop offset="0.569" stop-color="#ff01fd"/><stop offset="0.652" stop-color="#ff00c8"/><stop offset="0.77" stop-color="#ff0098"/><stop offset="0.946" stop-color="#ff006d"/><stop offset="1" stop-color="#ff0064"/></linearGradient>
<linearGradient id="c106" gradientUnits="userSpaceOnUse" x1="1076" x2="1540"><stop offset="0" stop-color="#0069ff"/><stop offset="0.228" stop-color="#0342ff"/><stop offset="0.491" stop-color="#c010ff"/><stop offset="0.573" stop-color="#ff00fd"/><stop offset="0.657" stop-color="#ff00c8"/><stop offset="0.778" stop-color="#ff0098"/><stop offset="0.957" stop-color="#ff006d"/><stop offset="1" stop-color="#f06"/></linearGradient>
<linearGradient id="c107" gradientUnits="userSpaceOnUse" x1="1077" x2="1538"><stop offset="0" stop-color="#0067ff"/><stop offset="0.228" stop-color="#0241ff"/><stop offset="0.495" stop-color="#bf0fff"/><stop offset="0.579" stop-color="#ff00fe"/><stop offset="0.666" stop-color="#ff00c7"/><stop offset="0.79" stop-color="#ff0097"/><stop offset="0.974" stop-color="#ff006c"/><stop offset="1" stop-color="#ff0068"/></linearGradient>
<linearGradient id="c108" gradientUnits="userSpaceOnUse" x1="1078" x2="1536"><stop offset="0" stop-color="#0065ff"/><stop offset="0.227" stop-color="#023fff"/><stop offset="0.5" stop-color="#c00dff"/><stop offset="0.583" stop-color="#f0f"/><stop offset="0.672" stop-color="#ff00c8"/><stop offset="0.797" stop-color="#ff0098"/><stop offset="0.983" stop-color="#ff006d"/><stop offset="1" stop-color="#ff006a"/></linearGradient>
<linearGradient id="c109" gradientUnits="userSpaceOnUse" x1="1079" x2="1534"><stop offset="0" stop-color="#0063ff"/><stop offset="0.229" stop-color="#033eff"/><stop offset="0.505" stop-color="#c10bff"/><stop offset="0.58" stop-color="#f800ff"/><stop offset="0.596" stop-color="#ff00fa"/><stop offset="0.686" stop-color="#ff00c5"/><stop offset="0.815" stop-color="#ff0095"/><stop offset="1" stop-color="#ff006c"/></linearGradient>
<linearGradient id="c110" gradientUnits="userSpaceOnUse" x1="1080" x2="1532"><stop offset="0" stop-color="#0061ff"/><stop offset="0.228" stop-color="#023cff"/><stop offset="0.509" stop-color="#c00aff"/><stop offset="0.58" stop-color="#f300ff"/><stop offset="0.6" stop-color="#ff00fc"/><stop offset="0.69" stop-color="#ff00c7"/><stop offset="0.821" stop-color="#ff0096"/><stop offset="1" stop-color="#ff006e"/></linearGradient>
<linearGradient id="c111" gradientUnits="userSpaceOnUse" x1="1082" x2="1530"><stop offset="0" stop-color="#005fff"/><stop offset="0.225" stop-color="#023bff"/><stop offset="0.513" stop-color="#c008ff"/><stop offset="0.58" stop-color="#f000ff"/><stop offset="0.605" stop-color="#ff00fc"/><stop offset="0.699" stop-color="#ff00c6"/><stop offset="0.833" stop-color="#ff0096"/><stop offset="1" stop-color="#ff0071"/></linearGradient>
<linearGradient id="c112" gradientUnits="userSpaceOnUse" x1="1083" x2="1528"><stop offset="0" stop-color="#005dff"/><stop offset="0.227" stop-color="#0339ff"/><stop offset="0.519" stop-color="#c106ff"/><stop offset="0.584" stop-color="#ef00ff"/><stop offset="0.611" stop-color="#ff00fc"/><stop offset="0.706" stop-color="#ff00c6"/><stop offset="0.84" stop-color="#ff0096"/><stop offset="1" stop-color="#ff0073"/></linearGradient>
<linearGradient id="c113" gradientUnits="userSpaceOnUse" x1="1084" x2="1526"><stop offset="0" stop-color="#005bff"/><stop offset="0.226" stop-color="#0238ff"/><stop offset="0.523" stop-color="#c005ff"/><stop offset="0.595" stop-color="#f200ff"/><stop offset="0.618" stop-color="#ff00fc"/><stop offset="0.715" stop-color="#ff00c6"/><stop offset="0.853" stop-color="#ff0096"/><stop offset="1" stop-color="#ff0075"/></linearGradient>
<linearGradient id="c114" gradientUnits="userSpaceOnUse" x1="1085" x2="1524"><stop offset="0" stop-color="#0059ff"/><stop offset="0.226" stop-color="#0236ff"/><stop offset="0.526" stop-color="#bf03ff"/><stop offset="0.624" stop-color="#ff00fc"/><stop offset="0.722" stop-color="#ff00c6"/><stop offset="0.861" stop-color="#ff0096"/><stop offset="1" stop-color="#ff0078"/></linearGradient>
<linearGradient id="c115" gradientUnits="userSpaceOnUse" x1="1086" x2="1522"><stop offset="0" stop-color="#0057ff"/><stop offset="0.227" stop-color="#0335ff"/><stop offset="0.534" stop-color="#c101ff"/><stop offset="0.631" stop-color="#ff00fc"/><stop offset="0.732" stop-color="#ff00c6"/><stop offset="0.874" stop-color="#ff0096"/><stop offset="1" stop-color="#ff007a"/></linearGradient>
<linearGradient id="c116" gradientUnits="userSpaceOnUse" x1="1087" x2="1520"><stop offset="0" stop-color="#05f"/><stop offset="0.226" stop-color="#0234ff"/><stop offset="0.538" stop-color="#c000ff"/><stop offset="0.637" stop-color="#ff00fc"/><stop offset="0.739" stop-color="#ff00c6"/><stop offset="0.885" stop-color="#ff0096"/><stop offset="1" stop-color="#ff007c"/></linearGradient>
<linearGradient id="c117" gradientUnits="userSpaceOnUse" x1="1088" x2="1518"><stop offset="0" stop-color="#0053ff"/><stop offset="0.226" stop-color="#0232ff"/><stop offset="0.542" stop-color="#bf00ff"/><stop offset="0.644" stop-color="#ff00fc"/><stop offset="0.747" stop-color="#ff00c7"/><stop offset="0.893" stop-color="#ff0096"/><stop offset="1" stop-color="#ff007f"/></linearGradient>
<linearGradient id="c118" gradientUnits="userSpaceOnUse" x1="1089" x2="1516"><stop offset="0" stop-color="#0052ff"/><stop offset="0.227" stop-color="#0331ff"/><stop offset="0.55" stop-color="#c100ff"/><stop offset="0.651" stop-color="#ff00fc"/><stop offset="0.756" stop-color="#ff00c6"/><stop offset="0.906" stop-color="#ff0096"/><stop offset="1" stop-color="#ff0081"/></linearGradient>
<linearGradient id="c119" gradientUnits="userSpaceOnUse" x1="1090" x2="1514"><stop offset="0" stop-color="#0050ff"/><stop offset="0.226" stop-color="#0230ff"/><stop offset="0.55" stop-color="#bd00ff"/><stop offset="0.658" stop-color="#ff00fc"/><stop offset="0.764" stop-color="#ff00c6"/><stop offset="0.915" stop-color="#ff0096"/><stop offset="1" stop-color="#ff0084"/></linearGradient>
<linearGradient id="c120" gradientUnits="userSpaceOnUse" x1="1092" x2="1512"><stop offset="0" stop-color="#004eff"/><stop offset="0.224" stop-color="#022eff"/><stop offset="0.545" stop-color="#b800ff"/><stop offset="0.664" stop-color="#ff00fc"/><stop offset="0.774" stop-color="#ff00c6"/><stop offset="0.929" stop-color="#ff0096"/><stop offset="1" stop-color="#ff0086"/></linearGradient>
<linearGradient id="c121" gradientUnits="userSpaceOnUse" x1="1093" x2="1510"><stop offset="0" stop-color="#004cff"/><stop offset="0.225" stop-color="#032dff"/><stop offset="0.542" stop-color="#b300ff"/><stop offset="0.671" stop-color="#ff00fc"/><stop offset="0.782" stop-color="#ff00c6"/><stop offset="0.938" stop-color="#ff0096"/><stop offset="1" stop-color="#ff0089"/></linearGradient>
<linearGradient id="c122" gradientUnits="userSpaceOnUse" x1="1094" x2="1509"><stop offset="0" stop-color="#004aff"/><stop offset="0.224" stop-color="#022cff"/><stop offset="0.537" stop-color="#ae00ff"/><stop offset="0.677" stop-color="#ff00fc"/><stop offset="0.788" stop-color="#ff00c7"/><stop offset="0.947" stop-color="#ff0096"/><stop offset="1" stop-color="#ff008b"/></linearGradient>
<linearGradient id="c123" gradientUnits="userSpaceOnUse" x1="1095" x2="1507"><stop offset="0" stop-color="#0049ff"/><stop offset="0.223" stop-color="#022bff"/><stop offset="0.534" stop-color="#a900ff"/><stop offset="0.684" stop-color="#ff00fc"/><stop offset="0.799" stop-color="#ff00c6"/><stop offset="0.961" stop-color="#ff0096"/><stop offset="1" stop-color="#ff008d"/></linearGradient>
<linearGradient id="c124" gradientUnits="userSpaceOnUse" x1="1096" x2="1505"><stop offset="0" stop-color="#0047ff"/><stop offset="0.225" stop-color="#0329ff"/><stop offset="0.533" stop-color="#a600ff"/><stop offset="0.692" stop-color="#ff00fc"/><stop offset="0.807" stop-color="#ff00c7"/><stop offset="0.971" stop-color="#ff0096"/><stop offset="1" stop-color="#ff0090"/></linearGradient>
<linearGradient id="c125" gradientUnits="userSpaceOnUse" x1="1097" x2="1503"><stop offset="0" stop-color="#0046ff"/><stop offset="0.224" stop-color="#0228ff"/><stop offset="0.53" stop-color="#a100ff"/><stop offset="0.7" stop-color="#ff00fc"/><stop offset="0.818" stop-color="#ff00c6"/><stop offset="0.985" stop-color="#ff0096"/><stop offset="1" stop-color="#ff0093"/></linearGradient>
<linearGradient id="c126" gradientUnits="userSpaceOnUse" x1="1098" x2="1501"><stop offset="0" stop-color="#04f"/><stop offset="0.223" stop-color="#0227ff"/><stop offset="0.526" stop-color="#9d00ff"/><stop offset="0.707" stop-color="#ff00fc"/><stop offset="0.826" stop-color="#ff00c7"/><stop offset="0.995" stop-color="#ff0097"/><stop offset="1" stop-color="#ff0095"/></linearGradient>
<linearGradient id="c127" gradientUnits="userSpaceOnUse" x1="1100" x2="1499"><stop offset="0" stop-color="#0042ff"/><stop offset="0.223" stop-color="#0326ff"/><stop offset="0.521" stop-color="#9800ff"/><stop offset="0.714" stop-color="#ff00fc"/><stop offset="0.835" stop-color="#ff00c7"/><stop offset="1" stop-color="#ff0098"/></linearGradient>
<linearGradient id="c128" gradientUnits="userSpaceOnUse" x1="1101" x2="1497"><stop offset="0" stop-color="#0041ff"/><stop offset="0.222" stop-color="#0225ff"/><stop offset="0.518" stop-color="#9400ff"/><stop offset="0.722" stop-color="#ff00fc"/><stop offset="0.846" stop-color="#ff00c6"/><stop offset="1" stop-color="#ff009b"/></linearGradient>
<linearGradient id="c129" gradientUnits="userSpaceOnUse" x1="1102" x2="1495"><stop offset="0" stop-color="#003fff"/><stop offset="0.224" stop-color="#0324ff"/><stop offset="0.514" stop-color="#9000ff"/><stop offset="0.73" stop-color="#ff00fc"/><stop offset="0.855" stop-color="#ff00c7"/><stop offset="1" stop-color="#ff009e"/></linearGradient>
<linearGradient id="c130" gradientUnits="userSpaceOnUse" x1="1103" x2="1493"><stop offset="0" stop-color="#003eff"/><stop offset="0.223" stop-color="#0323ff"/><stop offset="0.51" stop-color="#8b00ff"/><stop offset="0.738" stop-color="#ff00fd"/><stop offset="0.867" stop-color="#ff00c6"/><stop offset="1" stop-color="#ff00a1"/></linearGradient>
<linearGradient id="c131" gradientUnits="userSpaceOnUse" x1="1104" x2="1491"><stop offset="0" stop-color="#003cff"/><stop offset="0.222" stop-color="#0222ff"/><stop offset="0.509" stop-color="#8900ff"/><stop offset="0.747" stop-color="#ff00fd"/><stop offset="0.876" stop-color="#ff00c7"/><stop offset="1" stop-color="#ff00a4"/></linearGradient>
<linearGradient id="c132" gradientUnits="userSpaceOnUse" x1="1105" x2="1489"><stop offset="0" stop-color="#003bff"/><stop offset="0.224" stop-color="#0321ff"/><stop offset="0.505" stop-color="#8400ff"/><stop offset="0.755" stop-color="#ff00fd"/><stop offset="0.888" stop-color="#ff00c6"/><stop offset="1" stop-color="#ff00a7"/></linearGradient>
<linearGradient id="c133" gradientUnits="userSpaceOnUse" x1="1107" x2="1487"><stop offset="0" stop-color="#0039ff"/><stop offset="0.221" stop-color="#0320ff"/><stop offset="0.5" stop-color="#8000ff"/><stop offset="0.763" stop-color="#ff00fd"/><stop offset="0.897" stop-color="#ff00c7"/><stop offset="1" stop-color="#f0a"/></linearGradient>
<linearGradient id="c134" gradientUnits="userSpaceOnUse" x1="1108" x2="1485"><stop offset="0" stop-color="#0038ff"/><stop offset="0.22" stop-color="#021fff"/><stop offset="0.496" stop-color="#7d00ff"/><stop offset="0.772" stop-color="#ff00fd"/><stop offset="0.907" stop-color="#ff00c7"/><stop offset="1" stop-color="#ff00ad"/></linearGradient>
<linearGradient id="c135" gradientUnits="userSpaceOnUse" x1="1109" x2="1483"><stop offset="0" stop-color="#0037ff"/><stop offset="0.222" stop-color="#031eff"/><stop offset="0.492" stop-color="#7900ff"/><stop offset="0.781" stop-color="#ff00fd"/><stop offset="0.92" stop-color="#ff00c6"/><stop offset="1" stop-color="#ff00b0"/></linearGradient>
<linearGradient id="c136" gradientUnits="userSpaceOnUse" x1="1110" x2="1481"><stop offset="0" stop-color="#0035ff"/><stop offset="0.221" stop-color="#031dff"/><stop offset="0.488" stop-color="#7500ff"/><stop offset="0.79" stop-color="#ff00fd"/><stop offset="0.93" stop-color="#ff00c7"/><stop offset="1" stop-color="#ff00b3"/></linearGradient>
<linearGradient id="c137" gradientUnits="userSpaceOnUse" x1="1111" x2="1480"><stop offset="0" stop-color="#0034ff"/><stop offset="0.22" stop-color="#021cff"/><stop offset="0.485" stop-color="#7200ff"/><stop offset="0.797" stop-color="#ff00fd"/><stop offset="0.94" stop-color="#ff00c6"/><stop offset="1" stop-color="#ff00b6"/></linearGradient>
<linearGradient id="c138" gradientUnits="userSpaceOnUse" x1="1113" x2="1478"><stop offset="0" stop-color="#0032ff"/><stop offset="0.219" stop-color="#031bff"/><stop offset="0.479" stop-color="#6f00ff"/><stop offset="0.805" stop-color="#ff00fd"/><stop offset="0.951" stop-color="#ff00c7"/><stop offset="1" stop-color="#ff00b9"/></linearGradient>
<linearGradient id="c139" gradientUnits="userSpaceOnUse" x1="1114" x2="1476"><stop offset="0" stop-color="#0031ff"/><stop offset="0.218" stop-color="#031aff"/><stop offset="0.475" stop-color="#6b00ff"/><stop offset="0.815" stop-color="#ff00fd"/><stop offset="0.961" stop-color="#ff00c7"/><stop offset="1" stop-color="#ff00bc"/></linearGradient>
<linearGradient id="c140" gradientUnits="userSpaceOnUse" x1="1115" x2="1474"><stop offset="0" stop-color="#0030ff"/><stop offset="0.217" stop-color="#0219ff"/><stop offset="0.471" stop-color="#6800ff"/><stop offset="0.825" stop-color="#ff00fd"/><stop offset="0.975" stop-color="#ff00c7"/><stop offset="1" stop-color="#ff00c0"/></linearGradient>
<linearGradient id="c141" gradientUnits="userSpaceOnUse" x1="1116" x2="1472"><stop offset="0" stop-color="#002fff"/><stop offset="0.219" stop-color="#0318ff"/><stop offset="0.466" stop-color="#6400ff"/><stop offset="0.834" stop-color="#ff00fd"/><stop offset="0.986" stop-color="#ff00c7"/><stop offset="1" stop-color="#ff00c3"/></linearGradient>
<linearGradient id="c142" gradientUnits="userSpaceOnUse" x1="1117" x2="1470"><stop offset="0" stop-color="#002dff"/><stop offset="0.218" stop-color="#0317ff"/><stop offset="0.465" stop-color="#6200ff"/><stop offset="0.844" stop-color="#ff00fd"/><stop offset="1" stop-color="#ff00c6"/></linearGradient>
<linearGradient id="c143" gradientUnits="userSpaceOnUse" x1="1119" x2="1468"><stop offset="0" stop-color="#002cff"/><stop offset="0.215" stop-color="#0216ff"/><stop offset="0.458" stop-color="#5e00ff"/><stop offset="0.854" stop-color="#ff00fd"/><stop offset="1" stop-color="#ff00ca"/></linearGradient>
<linearGradient id="c144" gradientUnits="userSpaceOnUse" x1="1120" x2="1466"><stop offset="0" stop-color="#002bff"/><stop offset="0.217" stop-color="#0315ff"/><stop offset="0.454" stop-color="#5b00ff"/><stop offset="0.864" stop-color="#ff00fd"/><stop offset="1" stop-color="#ff00ce"/></linearGradient>
<linearGradient id="c145" gradientUnits="userSpaceOnUse" x1="1121" x2="1464"><stop offset="0" stop-color="#002aff"/><stop offset="0.216" stop-color="#0315ff"/><stop offset="0.449" stop-color="#5800ff"/><stop offset="0.875" stop-color="#ff00fd"/><stop offset="1" stop-color="#ff00d1"/></linearGradient>
<linearGradient id="c146" gradientUnits="userSpaceOnUse" x1="1122" x2="1462"><stop offset="0" stop-color="#0028ff"/><stop offset="0.215" stop-color="#0214ff"/><stop offset="0.444" stop-color="#50f"/><stop offset="0.885" stop-color="#ff00fd"/><stop offset="1" stop-color="#ff00d5"/></linearGradient>
<linearGradient id="c147" gradientUnits="userSpaceOnUse" x1="1124" x2="1460"><stop offset="0" stop-color="#0027ff"/><stop offset="0.214" stop-color="#0313ff"/><stop offset="0.44" stop-color="#5300ff"/><stop offset="0.896" stop-color="#ff00fd"/><stop offset="1" stop-color="#ff00d9"/></linearGradient>
<linearGradient id="c148" gradientUnits="userSpaceOnUse" x1="1125" x2="1458"><stop offset="0" stop-color="#0026ff"/><stop offset="0.213" stop-color="#0312ff"/><stop offset="0.435" stop-color="#5000ff"/><stop offset="0.907" stop-color="#ff00fd"/><stop offset="1" stop-color="#f0d"/></linearGradient>
<linearGradient id="c149" gradientUnits="userSpaceOnUse" x1="1126" x2="1456"><stop offset="0" stop-color="#0025ff"/><stop offset="0.212" stop-color="#0211ff"/><stop offset="0.43" stop-color="#4c00ff"/><stop offset="0.918" stop-color="#ff00fd"/><stop offset="1" stop-color="#ff00e1"/></linearGradient>
<linearGradient id="c150" gradientUnits="userSpaceOnUse" x1="1127" x2="1454"><stop offset="0" stop-color="#0024ff"/><stop offset="0.214" stop-color="#0310ff"/><stop offset="0.425" stop-color="#4900ff"/><stop offset="0.93" stop-color="#ff00fd"/><stop offset="1" stop-color="#ff00e5"/></linearGradient>
<linearGradient id="c151" gradientUnits="userSpaceOnUse" x1="1129" x2="1452"><stop offset="0" stop-color="#02f"/><stop offset="0.211" stop-color="#0210ff"/><stop offset="0.421" stop-color="#4800ff"/><stop offset="0.941" stop-color="#ff00fd"/><stop offset="1" stop-color="#ff00e9"/></linearGradient>
<linearGradient id="c152" gradientUnits="userSpaceOnUse" x1="1130" x2="1450"><stop offset="0" stop-color="#0021ff"/><stop offset="0.212" stop-color="#030fff"/><stop offset="0.416" stop-color="#4500ff"/><stop offset="0.953" stop-color="#ff00fd"/><stop offset="1" stop-color="#ff00ed"/></linearGradient>
<linearGradient id="c153" gradientUnits="userSpaceOnUse" x1="1131" x2="1449"><stop offset="0" stop-color="#0020ff"/><stop offset="0.211" stop-color="#030eff"/><stop offset="0.409" stop-color="#4200ff"/><stop offset="0.962" stop-color="#ff00fd"/><stop offset="1" stop-color="#ff00f0"/></linearGradient>
<linearGradient id="c154" gradientUnits="userSpaceOnUse" x1="1133" x2="1447"><stop offset="0" stop-color="#001fff"/><stop offset="0.207" stop-color="#020eff"/><stop offset="0.404" stop-color="#4000ff"/><stop offset="0.975" stop-color="#ff00fd"/><stop offset="1" stop-color="#ff00f4"/></linearGradient>
<linearGradient id="c155" gradientUnits="userSpaceOnUse" x1="1134" x2="1445"><stop offset="0" stop-color="#001eff"/><stop offset="0.209" stop-color="#030dff"/><stop offset="0.399" stop-color="#3d00ff"/><stop offset="0.987" stop-color="#ff00fd"/><stop offset="1" stop-color="#ff00f9"/></linearGradient>
<linearGradient id="c156" gradientUnits="userSpaceOnUse" x1="1135" x2="1443"><stop offset="0" stop-color="#001dff"/><stop offset="0.208" stop-color="#030cff"/><stop offset="0.396" stop-color="#3b00ff"/><stop offset="1" stop-color="#ff00fd"/></linearGradient>
<linearGradient id="c157" gradientUnits="userSpaceOnUse" x1="1137" x2="1441"><stop offset="0" stop-color="#001cff"/><stop offset="0.204" stop-color="#020bff"/><stop offset="0.388" stop-color="#3900ff"/><stop offset="0.987" stop-color="#f800ff"/><stop offset="1" stop-color="#fc00ff"/></linearGradient>
<linearGradient id="c158" gradientUnits="userSpaceOnUse" x1="1138" x2="1439"><stop offset="0" stop-color="#001bff"/><stop offset="0.206" stop-color="#030aff"/><stop offset="0.385" stop-color="#3700ff"/><stop offset="0.997" stop-color="#f700ff"/><stop offset="1" stop-color="#f800ff"/></linearGradient>
<linearGradient id="c159" gradientUnits="userSpaceOnUse" x1="1139" x2="1437"><stop offset="0" stop-color="#001aff"/><stop offset="0.205" stop-color="#030aff"/><stop offset="0.379" stop-color="#3400ff"/><stop offset="1" stop-color="#f400ff"/></linearGradient>
<linearGradient id="c160" gradientUnits="userSpaceOnUse" x1="1141" x2="1435"><stop offset="0" stop-color="#0019ff"/><stop offset="0.201" stop-color="#0209ff"/><stop offset="0.374" stop-color="#30f"/><stop offset="1" stop-color="#ef00ff"/></linearGradient>
<linearGradient id="c161" gradientUnits="userSpaceOnUse" x1="1142" x2="1433"><stop offset="0" stop-color="#0018ff"/><stop offset="0.203" stop-color="#0308ff"/><stop offset="0.371" stop-color="#3100ff"/><stop offset="1" stop-color="#eb00ff"/></linearGradient>
<linearGradient id="c162" gradientUnits="userSpaceOnUse" x1="1143" x2="1431"><stop offset="0" stop-color="#0017ff"/><stop offset="0.201" stop-color="#0308ff"/><stop offset="0.368" stop-color="#3000ff"/><stop offset="1" stop-color="#e700ff"/></linearGradient>
<linearGradient id="c163" gradientUnits="userSpaceOnUse" x1="1145" x2="1429"><stop offset="0" stop-color="#0016ff"/><stop offset="0.197" stop-color="#0207ff"/><stop offset="0.363" stop-color="#2e00ff"/><stop offset="1" stop-color="#e300ff"/></linearGradient>
<linearGradient id="c164" gradientUnits="userSpaceOnUse" x1="1146" x2="1427"><stop offset="0" stop-color="#0015ff"/><stop offset="0.199" stop-color="#0306ff"/><stop offset="0.363" stop-color="#2d00ff"/><stop offset="1" stop-color="#df00ff"/></linearGradient>
<linearGradient id="c165" gradientUnits="userSpaceOnUse" x1="1147" x2="1425"><stop offset="0" stop-color="#0014ff"/><stop offset="0.198" stop-color="#0306ff"/><stop offset="0.363" stop-color="#2d00ff"/><stop offset="1" stop-color="#db00ff"/></linearGradient>
<linearGradient id="c166" gradientUnits="userSpaceOnUse" x1="1149" x2="1423"><stop offset="0" stop-color="#0013ff"/><stop offset="0.193" stop-color="#0205ff"/><stop offset="0.365" stop-color="#2d00ff"/><stop offset="1" stop-color="#d700ff"/></linearGradient>
<linearGradient id="c167" gradientUnits="userSpaceOnUse" x1="1150" x2="1421"><stop offset="0" stop-color="#0012ff"/><stop offset="0.196" stop-color="#0305ff"/><stop offset="0.384" stop-color="#3100ff"/><stop offset="1" stop-color="#d300ff"/></linearGradient>
<linearGradient id="c168" gradientUnits="userSpaceOnUse" x1="1152" x2="1419"><stop offset="0" stop-color="#01f"/><stop offset="0.191" stop-color="#0304ff"/><stop offset="0.416" stop-color="#3900ff"/><stop offset="1" stop-color="#cf00ff"/></linearGradient>
<linearGradient id="c169" gradientUnits="userSpaceOnUse" x1="1153" x2="1418"><stop offset="0" stop-color="#0010ff"/><stop offset="0.189" stop-color="#0204ff"/><stop offset="0.528" stop-color="#5400ff"/><stop offset="1" stop-color="#cd00ff"/></linearGradient>
<linearGradient id="c170" gradientUnits="userSpaceOnUse" x1="1154" x2="1416"><stop offset="0" stop-color="#000fff"/><stop offset="0.191" stop-color="#0303ff"/><stop offset="0.969" stop-color="#c100ff"/><stop offset="1" stop-color="#c900ff"/></linearGradient>
<linearGradient id="c171" gradientUnits="userSpaceOnUse" x1="1156" x2="1414"><stop offset="0" stop-color="#000eff"/><stop offset="0.186" stop-color="#0302ff"/><stop offset="0.981" stop-color="#c000ff"/><stop offset="1" stop-color="#c500ff"/></linearGradient>
<linearGradient id="c172" gradientUnits="userSpaceOnUse" x1="1157" x2="1412"><stop offset="0" stop-color="#000dff"/><stop offset="0.188" stop-color="#0302ff"/><stop offset="1" stop-color="#c200ff"/></linearGradient>
<linearGradient id="c173" gradientUnits="userSpaceOnUse" x1="1159" x2="1410"><stop offset="0" stop-color="#000cff"/><stop offset="0.183" stop-color="#0301ff"/><stop offset="1" stop-color="#be00ff"/></linearGradient>
<linearGradient id="c174" gradientUnits="userSpaceOnUse" x1="1160" x2="1408"><stop offset="0" stop-color="#000bff"/><stop offset="0.181" stop-color="#0301ff"/><stop offset="1" stop-color="#b0f"/></linearGradient>
<linearGradient id="c175" gradientUnits="userSpaceOnUse" x1="1162" x2="1406"><stop offset="0" stop-color="#000aff"/><stop offset="0.18" stop-color="#0300ff"/><stop offset="1" stop-color="#b700ff"/></linearGradient>
<linearGradient id="c176" gradientUnits="userSpaceOnUse" x1="1163" x2="1404"><stop offset="0" stop-color="#000aff"/><stop offset="0.178" stop-color="#0300ff"/><stop offset="1" stop-color="#b400ff"/></linearGradient>
<linearGradient id="c177" gradientUnits="userSpaceOnUse" x1="1165" x2="1402"><stop offset="0" stop-color="#0009ff"/><stop offset="0.173" stop-color="#0300ff"/><stop offset="1" stop-color="#b100ff"/></linearGradient>
<linearGradient id="c178" gradientUnits="userSpaceOnUse" x1="1166" x2="1400"><stop offset="0" stop-color="#0008ff"/><stop offset="0.175" stop-color="#0300ff"/><stop offset="1" stop-color="#ad00ff"/></linearGradient>
<linearGradient id="c179" gradientUnits="userSpaceOnUse" x1="1168" x2="1398"><stop offset="0" stop-color="#0007ff"/><stop offset="0.17" stop-color="#0300ff"/><stop offset="1" stop-color="#a0f"/></linearGradient>
<linearGradient id="c180" gradientUnits="userSpaceOnUse" x1="1169" x2="1396"><stop offset="0" stop-color="#0006ff"/><stop offset="0.172" stop-color="#0300ff"/><stop offset="1" stop-color="#a700ff"/></linearGradient>
<linearGradient id="c181" gradientUnits="userSpaceOnUse" x1="1171" x2="1394"><stop offset="0" stop-color="#0005ff"/><stop offset="0.166" stop-color="#0300ff"/><stop offset="1" stop-color="#a400ff"/></linearGradient>
<linearGradient id="c182" gradientUnits="userSpaceOnUse" x1="1172" x2="1392"><stop offset="0" stop-color="#0005ff"/><stop offset="0.164" stop-color="#0300ff"/><stop offset="1" stop-color="#a100ff"/></linearGradient>
<linearGradient id="c183" gradientUnits="userSpaceOnUse" x1="1174" x2="1390"><stop offset="0" stop-color="#0004ff"/><stop offset="0.162" stop-color="#0300ff"/><stop offset="1" stop-color="#9e00ff"/></linearGradient>
<linearGradient id="c184" gradientUnits="userSpaceOnUse" x1="1176" x2="1389"><stop offset="0" stop-color="#0003ff"/><stop offset="0.155" stop-color="#0300ff"/><stop offset="1" stop-color="#9b00ff"/></linearGradient>
<linearGradient id="c185" gradientUnits="userSpaceOnUse" x1="1177" x2="1387"><stop offset="0" stop-color="#0002ff"/><stop offset="0.152" stop-color="#0300ff"/><stop offset="1" stop-color="#9800ff"/></linearGradient>
<linearGradient id="c186" gradientUnits="userSpaceOnUse" x1="1179" x2="1385"><stop offset="0" stop-color="#0001ff"/><stop offset="0.15" stop-color="#0300ff"/><stop offset="1" stop-color="#9600ff"/></linearGradient>
<linearGradient id="c187" gradientUnits="userSpaceOnUse" x1="1180" x2="1383"><stop offset="0" stop-color="#00f"/><stop offset="0.148" stop-color="#0300ff"/><stop offset="1" stop-color="#9300ff"/></linearGradient>
<linearGradient id="c188" gradientUnits="userSpaceOnUse" x1="1182" x2="1381"><stop offset="0" stop-color="#00f"/><stop offset="0.146" stop-color="#0400ff"/><stop offset="1" stop-color="#9000ff"/></linearGradient>
<linearGradient id="c189" gradientUnits="userSpaceOnUse" x1="1184" x2="1379"><stop offset="0" stop-color="#00f"/><stop offset="0.138" stop-color="#0300ff"/><stop offset="1" stop-color="#8d00ff"/></linearGradient>
<linearGradient id="c190" gradientUnits="userSpaceOnUse" x1="1185" x2="1377"><stop offset="0" stop-color="#00f"/><stop offset="0.135" stop-color="#0300ff"/><stop offset="1" stop-color="#8a00ff"/></linearGradient>
<linearGradient id="c191" gradientUnits="userSpaceOnUse" x1="1187" x2="1375"><stop offset="0" stop-color="#00f"/><stop offset="0.133" stop-color="#0400ff"/><stop offset="1" stop-color="#8700ff"/></linearGradient>
<linearGradient id="c192" gradientUnits="userSpaceOnUse" x1="1189" x2="1373"><stop offset="0" stop-color="#00f"/><stop offset="0.125" stop-color="#0300ff"/><stop offset="1" stop-color="#8500ff"/></linearGradient>
<linearGradient id="c193" gradientUnits="userSpaceOnUse" x1="1190" x2="1371"><stop offset="0" stop-color="#00f"/><stop offset="0.127" stop-color="#0400ff"/><stop offset="1" stop-color="#8200ff"/></linearGradient>
<linearGradient id="c194" gradientUnits="userSpaceOnUse" x1="1192" x2="1369"><stop offset="0" stop-color="#00f"/><stop offset="0.119" stop-color="#0400ff"/><stop offset="1" stop-color="#7f00ff"/></linearGradient>
<linearGradient id="c195" gradientUnits="userSpaceOnUse" x1="1194" x2="1367"><stop offset="0" stop-color="#00f"/><stop offset="0.116" stop-color="#0400ff"/><stop offset="1" stop-color="#7d00ff"/></linearGradient>
<linearGradient id="c196" gradientUnits="userSpaceOnUse" x1="1196" x2="1365"><stop offset="0" stop-color="#00f"/><stop offset="0.107" stop-color="#0400ff"/><stop offset="1" stop-color="#7a00ff"/></linearGradient>
<linearGradient id="c197" gradientUnits="userSpaceOnUse" x1="1198" x2="1363"><stop offset="0" stop-color="#00f"/><stop offset="0.103" stop-color="#0400ff"/><stop offset="1" stop-color="#70f"/></linearGradient>
<linearGradient id="c198" gradientUnits="userSpaceOnUse" x1="1199" x2="1361"><stop offset="0" stop-color="#00f"/><stop offset="0.105" stop-color="#0500ff"/><stop offset="1" stop-color="#7500ff"/></linearGradient>
<linearGradient id="c199" gradientUnits="userSpaceOnUse" x1="1201" x2="1359"><stop offset="0" stop-color="#00f"/><stop offset="0.101" stop-color="#0500ff"/><stop offset="1" stop-color="#7200ff"/></linearGradient>
<linearGradient id="c200" gradientUnits="userSpaceOnUse" x1="1203" x2="1358"><stop offset="0" stop-color="#00f"/><stop offset="0.11" stop-color="#0700ff"/><stop offset="1" stop-color="#7100ff"/></linearGradient>
<linearGradient id="c201" gradientUnits="userSpaceOnUse" x1="1205" x2="1356"><stop offset="0" stop-color="#00f"/><stop offset="0.139" stop-color="#0b00ff"/><stop offset="1" stop-color="#6e00ff"/></linearGradient>
<linearGradient id="c202" gradientUnits="userSpaceOnUse" x1="1207" x2="1354"><stop offset="0" stop-color="#00f"/><stop offset="1" stop-color="#6c00ff"/></linearGradient>
<linearGradient id="c203" gradientUnits="userSpaceOnUse" x1="1209" x2="1352"><stop offset="0" stop-color="#00f"/><stop offset="1" stop-color="#6a00ff"/></linearGradient>
<linearGradient id="c204" gradientUnits="userSpaceOnUse" x1="1211" x2="1350"><stop offset="0" stop-color="#00f"/><stop offset="1" stop-color="#6700ff"/></linearGradient>
<linearGradient id="c205" gradientUnits="userSpaceOnUse" x1="1213" x2="1348"><stop offset="0" stop-color="#0100ff"/><stop offset="1" stop-color="#6500ff"/></linearGradient>
<linearGradient id="c206" gradientUnits="userSpaceOnUse" x1="1215" x2="1346"><stop offset="0" stop-color="#0200ff"/><stop offset="1" stop-color="#6300ff"/></linearGradient>
<linearGradient id="c207" gradientUnits="userSpaceOnUse" x1="1217" x2="1344"><stop offset="0" stop-color="#0300ff"/><stop offset="1" stop-color="#6000ff"/></linearGradient>
<linearGradient id="c208" gradientUnits="userSpaceOnUse" x1="1220" x2="1342"><stop offset="0" stop-color="#0500ff"/><stop offset="1" stop-color="#5e00ff"/></linearGradient>
<linearGradient id="c209" gradientUnits="userSpaceOnUse" x1="1222" x2="1340"><stop offset="0" stop-color="#0600ff"/><stop offset="1" stop-color="#5c00ff"/></linearGradient>
<linearGradient id="c210" gradientUnits="userSpaceOnUse" x1="1224" x2="1338"><stop offset="0" stop-color="#0700ff"/><stop offset="1" stop-color="#5a00ff"/></linearGradient>
<linearGradient id="c211" gradientUnits="userSpaceOnUse" x1="1226" x2="1336"><stop offset="0" stop-color="#0800ff"/><stop offset="1" stop-color="#5700ff"/></linearGradient>
<linearGradient id="c212" gradientUnits="userSpaceOnUse" x1="1228" x2="1334"><stop offset="0" stop-color="#0a00ff"/><stop offset="1" stop-color="#50f"/></linearGradient>
<linearGradient id="c213" gradientUnits="userSpaceOnUse" x1="1231" x2="1332"><stop offset="0" stop-color="#0b00ff"/><stop offset="1" stop-color="#5300ff"/></linearGradient>
<linearGradient id="c214" gradientUnits="userSpaceOnUse" x1="1233" x2="1330"><stop offset="0" stop-color="#0d00ff"/><stop offset="1" stop-color="#5100ff"/></linearGradient>
<linearGradient id="c215" gradientUnits="userSpaceOnUse" x1="1235" x2="1328"><stop offset="0" stop-color="#0e00ff"/><stop offset="1" stop-color="#4f00ff"/></linearGradient>
<linearGradient id="c216" gradientUnits="userSpaceOnUse" x1="1238" x2="1327"><stop offset="0" stop-color="#0f00ff"/><stop offset="1" stop-color="#4e00ff"/></linearGradient>
<linearGradient id="c217" gradientUnits="userSpaceOnUse" x1="1240" x2="1325"><stop offset="0" stop-color="#1000ff"/><stop offset="1" stop-color="#4c00ff"/></linearGradient>
<linearGradient id="c218" gradientUnits="userSpaceOnUse" x1="1243" x2="1323"><stop offset="0" stop-color="#1200ff"/><stop offset="1" stop-color="#4a00ff"/></linearGradient>
<linearGradient id="c219" gradientUnits="userSpaceOnUse" x1="1245" x2="1321"><stop offset="0" stop-color="#1300ff"/><stop offset="1" stop-color="#4800ff"/></linearGradient>
<linearGradient id="c220" gradientUnits="userSpaceOnUse" x1="1247" x2="1319"><stop offset="0" stop-color="#1400ff"/><stop offset="1" stop-color="#4600ff"/></linearGradient>
<linearGradient id="c221" gradientUnits="userSpaceOnUse" x1="1250" x2="1317"><stop offset="0" stop-color="#1600ff"/><stop offset="1" stop-color="#40f"/></linearGradient>
<linearGradient id="c222" gradientUnits="userSpaceOnUse" x1="1252" x2="1315"><stop offset="0" stop-color="#1700ff"/><stop offset="1" stop-color="#4200ff"/></linearGradient>
<linearGradient id="c223" gradientUnits="userSpaceOnUse" x1="1255" x2="1313"><stop offset="0" stop-color="#1900ff"/><stop offset="1" stop-color="#4000ff"/></linearGradient>
<linearGradient id="c224" gradientUnits="userSpaceOnUse" x1="1257" x2="1311"><stop offset="0" stop-color="#1a00ff"/><stop offset="1" stop-color="#3e00ff"/></linearGradient>
<linearGradient id="c225" gradientUnits="userSpaceOnUse" x1="1260" x2="1309"><stop offset="0" stop-color="#1b00ff"/><stop offset="1" stop-color="#3c00ff"/></linearGradient>
<linearGradient id="c226" gradientUnits="userSpaceOnUse" x1="1262" x2="1307"><stop offset="0" stop-color="#1c00ff"/><stop offset="1" stop-color="#3a00ff"/></linearGradient>
<linearGradient id="c227" gradientUnits="userSpaceOnUse" x1="1264" x2="1305"><stop offset="0" stop-color="#1d00ff"/><stop offset="1" stop-color="#3800ff"/></linearGradient>
<linearGradient id="c228" gradientUnits="userSpaceOnUse" x1="1267" x2="1303"><stop offset="0" stop-color="#1f00ff"/><stop offset="1" stop-color="#3700ff"/></linearGradient>
<linearGradient id="c229" gradientUnits="userSpaceOnUse" x1="1269" x2="1301"><stop offset="0" stop-color="#2000ff"/><stop offset="1" stop-color="#3500ff"/></linearGradient>
<linearGradient id="c230" gradientUnits="userSpaceOnUse" x1="1271" x2="1299"><stop offset="0" stop-color="#2100ff"/><stop offset="1" stop-color="#30f"/></linearGradient>
<linearGradient id="c231" gradientUnits="userSpaceOnUse" x1="1274" x2="1298"><stop offset="0" stop-color="#20f"/><stop offset="1" stop-color="#3200ff"/></linearGradient>
<linearGradient id="c232" gradientUnits="userSpaceOnUse" x1="1276" x2="1296"><stop offset="0" stop-color="#2300ff"/><stop offset="1" stop-color="#3000ff"/></linearGradient>
<linearGradient id="c233" gradientUnits="userSpaceOnUse" x1="1279" x2="1294"><stop offset="0" stop-color="#2500ff"/><stop offset="1" stop-color="#2e00ff"/></linearGradient>
<linearGradient id="c234" gradientUnits="userSpaceOnUse" x1="1281" x2="1292"><stop offset="0" stop-color="#2600ff"/><stop offset="1" stop-color="#2d00ff"/></linearGradient>
<linearGradient id="c235" gradientUnits="userSpaceOnUse" x1="1285" x2="1289"><stop offset="0" stop-color="#2800ff"/><stop offset="1" stop-color="#2a00ff"/></linearGradient>
<clipPath id="loc"><path d="M1284.8 570.7 L1286.0 571.1 L1287.2 571.2 L1288.5 571.0 L1289.6 570.4 L1290.6 569.7 L1672.2 175.4 L1673.0 174.3 L1673.5 173.0 L1673.6 171.6 L1673.3 170.3 L1672.7 169.1 L1671.7 168.0 L1670.5 167.3 L1669.2 167.0 L1667.3 166.8 L1664.2 166.4 L1661.2 166.1 L1657.6 165.7 L1653.5 165.2 L1650.4 164.8 L1646.9 164.4 L1643.0 164.0 L1638.6 163.5 L1633.9 162.9 L1628.9 162.3 L1623.4 161.7 L1617.6 161.0 L1614.5 160.7 L1611.3 160.3 L1608.1 159.9 L1604.8 159.5 L1601.4 159.2 L1597.9 158.8 L1594.2 158.3 L1590.5 157.9 L1586.6 157.5 L1582.5 157.0 L1578.3 156.5 L1574.0 156.0 L1569.5 155.5 L1564.8 154.9 L1560.0 154.4 L1555.0 153.8 L1549.8 153.2 L1544.5 152.6 L1539.0 151.9 L1533.2 151.3 L1527.4 150.6 L1521.3 149.9 L1515.2 149.2 L1508.8 148.5 L1502.3 147.7 L1495.7 147.0 L1489.0 146.2 L1482.0 145.4 L1474.9 144.6 L1467.6 143.7 L1460.2 142.9 L1452.8 142.0 L1445.3 141.2 L1437.9 140.3 L1430.4 139.4 L1422.9 138.6 L1415.3 137.7 L1407.6 136.8 L1399.9 135.9 L1392.1 135.0 L1384.3 134.1 L1376.5 133.2 L1368.7 132.3 L1361.0 131.4 L1353.4 130.5 L1345.8 129.7 L1338.3 128.8 L1330.9 127.9 L1323.5 127.1 L1316.3 126.3 L1309.1 125.4 L1302.1 124.6 L1295.1 123.8 L1288.3 123.0 L1281.5 122.2 L1274.9 121.5 L1268.4 120.7 L1262.0 120.0 L1255.6 119.3 L1249.4 118.5 L1243.4 117.8 L1237.4 117.2 L1231.5 116.5 L1225.8 115.8 L1220.2 115.2 L1214.6 114.6 L1209.2 113.9 L1203.9 113.3 L1198.7 112.8 L1193.6 112.2 L1188.6 111.6 L1183.7 111.1 L1178.9 110.6 L1174.2 110.0 L1169.6 109.5 L1165.1 109.0 L1160.7 108.6 L1156.3 108.1 L1152.1 107.7 L1147.9 107.2 L1143.8 106.8 L1139.8 106.4 L1135.9 106.0 L1132.1 105.7 L1128.3 105.3 L1124.6 105.0 L1120.9 104.7 L1117.4 104.4 L1113.8 104.1 L1110.4 103.8 L1107.0 103.6 L1103.6 103.3 L1100.3 103.1 L1097.1 102.9 L1093.9 102.8 L1090.7 102.6 L1087.6 102.5 L1084.5 102.4 L1081.4 102.3 L1078.3 102.2 L1075.3 102.2 L1072.3 102.2 L1069.3 102.2 L1066.3 102.2 L1063.3 102.3 L1057.3 102.5 L1051.5 102.9 L1046.1 103.6 L1040.9 104.7 L1036.0 106.3 L1031.6 108.5 L1027.5 111.6 L1026.8 112.3 L1024.0 115.6 L1021.1 120.7 L1019.9 123.7 L1019.0 126.8 L1018.3 130.3 L1017.8 133.9 L1017.5 137.9 L1017.5 142.1 L1017.6 146.7 L1018.1 151.6 L1018.7 156.9 L1019.7 162.7 L1020.9 168.9 L1022.3 175.5 L1024.1 182.6 L1026.2 190.2 L1028.6 198.2 L1031.4 206.8 L1034.5 216.0 L1038.0 225.6 L1041.8 235.6 L1045.9 246.1 L1050.4 256.9 L1055.2 268.0 L1060.2 279.4 L1065.7 291.0 L1071.5 302.8 L1077.6 314.7 L1084.0 326.6 L1090.6 338.5 L1097.3 350.2 L1104.1 361.9 L1110.9 373.3 L1117.7 384.6 L1124.6 395.6 L1131.3 406.2 L1138.0 416.4 L1144.6 426.1 L1151.0 435.4 L1157.2 444.2 L1163.3 452.5 L1169.3 460.4 L1175.1 467.8 L1180.7 474.8 L1186.0 481.2 L1191.1 487.1 L1195.8 492.5 L1200.2 497.3 L1204.3 501.6 L1208.2 505.6 L1212.0 509.4 L1215.7 512.9 L1219.2 516.2 L1222.6 519.4 L1226.0 522.4 L1229.2 525.2 L1232.3 527.9 L1235.2 530.4 L1238.1 532.8 L1240.8 535.0 L1243.4 537.2 L1246.0 539.3 L1248.4 541.3 L1250.7 543.3 L1255.1 546.9 L1259.1 550.2 L1262.6 553.1 L1265.8 555.8 L1268.7 558.3 L1271.3 560.6 L1274.8 563.5 L1277.8 565.9 L1280.2 567.7 L1283.0 569.8Z"/></clipPath>
<linearGradient id="ins" gradientUnits="userSpaceOnUse" x1="1437.3" y1="418.5" x2="1647.3" y2="588.1"><stop offset="0" stop-color="#a0ff00"/><stop offset="0.5" stop-color="#ffff10"/><stop offset="1" stop-color="#ffa000"/></linearGradient>
<linearGradient id="g41" x1="0" y1="0" x2="0" y2="1"><stop offset="0" stop-color="#ff5656"/><stop offset="1" stop-color="#ff4242"/></linearGradient>
<linearGradient id="g42" x1="0" y1="0" x2="0" y2="1"><stop offset="0" stop-color="#5cb05c"/><stop offset="1" stop-color="#3f9c3f"/></linearGradient>
<linearGradient id="g43" x1="0" y1="0" x2="0" y2="1"><stop offset="0" stop-color="#5e5eff"/><stop offset="1" stop-color="#4a4aff"/></linearGradient>
<linearGradient id="g44" x1="0" y1="0" x2="0" y2="1"><stop offset="0" stop-color="#424242"/><stop offset="1" stop-color="#2c2c2c"/></linearGradient>
<linearGradient id="g45" x1="0" y1="0" x2="0" y2="1"><stop offset="0" stop-color="#9c9c9c"/><stop offset="0.15" stop-color="#8a8a8a"/><stop offset="1" stop-color="#606060"/></linearGradient>
<linearGradient id="g46" x1="0" y1="0" x2="0" y2="1"><stop offset="0" stop-color="#6e6e6e"/><stop offset="1" stop-color="#9a9a9a"/></linearGradient>
<linearGradient id="g47" x1="0" y1="0" x2="0" y2="1"><stop offset="0" stop-color="#181818"/><stop offset="0.6" stop-color="#2a2a2a"/><stop offset="1" stop-color="#3c3c3c"/></linearGradient>
<linearGradient id="g48" x1="0" y1="0" x2="0" y2="1"><stop offset="0" stop-color="#a8a8a8"/><stop offset="0.5" stop-color="#8c8c8c"/><stop offset="1" stop-color="#7a7a7a"/></linearGradient>
<linearGradient id="g49" x1="0" y1="0" x2="0" y2="1"><stop offset="0" stop-color="#a0a0a0"/><stop offset="1" stop-color="#6e6e6e"/></linearGradient>
<linearGradient id="g50" x1="0" y1="0" x2="0" y2="1"><stop offset="0" stop-color="#7a7a7a"/><stop offset="1" stop-color="#a4a4a4"/></linearGradient>
<linearGradient id="g51" x1="0" y1="0" x2="0" y2="1"><stop offset="0" stop-color="#c0c0c0"/><stop offset="1" stop-color="#8c8c8c"/></linearGradient>
<linearGradient id="g52" x1="0" y1="0" x2="0" y2="1"><stop offset="0" stop-color="#202020"/><stop offset="0.45" stop-color="#101010"/><stop offset="0.5" stop-color="#000"/><stop offset="1" stop-color="#000"/></linearGradient>
<linearGradient id="g53" x1="0" y1="0" x2="0" y2="1"><stop offset="0" stop-color="#3a3a3a"/><stop offset="1" stop-color="#2c2c2c"/></linearGradient>
<linearGradient id="g54" x1="0" y1="0" x2="0" y2="1"><stop offset="0" stop-color="#7c7c7c"/><stop offset="1" stop-color="#a8a8a8"/></linearGradient>
</defs>
<rect x="0.00" y="0.00" width="1653.00" height="945.00" fill="#323232"/>
<rect x="0.00" y="0.00" width="1653.00" height="41.00" fill="#222222"/>
<path d="M0 3.5 H106.3 Q111.3 3.5 111.3 8.5 V40.6 H0Z" fill="url(#g1)"/>
<path d="M0 3.5 H106.3 Q111.3 3.5 111.3 8.5 V40.6" fill="none" stroke="#7c7c7c" stroke-width="1"/>
<line x1="70.50" y1="4.00" x2="70.50" y2="40.60" stroke="#7a7a7a" stroke-width="1"/>
<text x="4.5" y="28.0" font-size="13.5" fill="#f0f0f0" textLength="58.5" lengthAdjust="spacingAndGlyphs">History 1</text>
<circle cx="89" cy="24" r="12" fill="url(#g2)"/>
<text x="89.0" y="29.2" font-size="12.6" fill="#b4b4b4" text-anchor="middle">+</text>
<path d="M1052.0 40.3 V8 Q1052.0 3 1057.0 3 H1225.0 Q1230.0 3 1230.0 8 V40.3Z" fill="url(#g3)"/>
<path d="M1052.0 40.3 V8 Q1052.0 3 1057.0 3 H1059.5 V40.3Z" fill="#22dd22"/>
<text x="1063.0" y="17.0" font-size="13" fill="#f4f4f4" textLength="81.5" lengthAdjust="spacingAndGlyphs">X-Rite i1Pro 3</text>
<text x="1063.0" y="36.0" font-size="13" fill="#f4f4f4" textLength="69.5" lengthAdjust="spacingAndGlyphs">Direct View</text>
<circle cx="1161.0" cy="22.0" r="12" fill="url(#g4)"/>
<path d="M1154.6 20.4 h13 l-6.5 6.6z" fill="#fff"/>
<line x1="1185.40" y1="6.00" x2="1185.40" y2="40.30" stroke="#343434" stroke-width="1.1"/>
<circle cx="1211.4" cy="21.5" r="15.8" fill="#0000f2" stroke="#dcdcff" stroke-width="1.1"/>
<text x="1202.0" y="25.7" font-size="10.8" fill="#fff" textLength="19.0" lengthAdjust="spacingAndGlyphs" stroke="#fff" stroke-width="0.35">620</text>
<path d="M1238.0 40.3 V8 Q1238.0 3 1243.0 3 H1395.0 Q1400.0 3 1400.0 8 V40.3Z" fill="url(#g3)"/>
<path d="M1238.0 40.3 V8 Q1238.0 3 1243.0 3 H1245.5 V40.3Z" fill="#22dd22"/>
<text x="1249.5" y="17.0" font-size="13" fill="#f4f4f4" textLength="79.5" lengthAdjust="spacingAndGlyphs">Mobile Forge</text>
<circle cx="1380.0" cy="22.0" r="12" fill="url(#g5)"/>
<path d="M1373.6 20.4 h13 l-6.5 6.6z" fill="#fff"/>
<path d="M1408.4 40.3 V8 Q1408.4 3 1413.4 3 H1582.0 Q1587.0 3 1587.0 8 V40.3Z" fill="url(#g3)"/>
<path d="M1408.4 40.3 V8 Q1408.4 3 1413.4 3 H1415.9 V40.3Z" fill="#eeee10"/>
<text x="1419.6" y="16.8" font-size="13" fill="#f4f4f4" textLength="130.4" lengthAdjust="spacingAndGlyphs">Direct Display Control</text>
<circle cx="1566.8" cy="21.4" r="12" fill="url(#g6)"/>
<path d="M1560.4 19.8 h13 l-6.5 6.6z" fill="#fff"/>
<rect x="1591.6" y="3.5" width="41" height="33.8" rx="4.8" fill="url(#g7)" stroke="#d4d4d4" stroke-width="1.2"/>
<circle cx="1612.1" cy="20.4" r="12.3" fill="url(#g8)"/>
<path d="M1613.49 26.34 L1613.24 27.91 L1612.67 28.58 L1611.53 28.58 L1610.96 27.91 L1610.71 26.34 L1608.88 25.58 L1607.59 26.52 L1606.72 26.59 L1605.91 25.78 L1605.98 24.91 L1606.92 23.62 L1606.16 21.79 L1604.59 21.54 L1603.92 20.97 L1603.92 19.83 L1604.59 19.26 L1606.16 19.01 L1606.92 17.18 L1605.98 15.89 L1605.91 15.02 L1606.72 14.21 L1607.59 14.28 L1608.88 15.22 L1610.71 14.46 L1610.96 12.89 L1611.53 12.22 L1612.67 12.22 L1613.24 12.89 L1613.49 14.46 L1615.32 15.22 L1616.61 14.28 L1617.48 14.21 L1618.29 15.02 L1618.22 15.89 L1617.28 17.18 L1618.04 19.01 L1619.61 19.26 L1620.28 19.83 L1620.28 20.97 L1619.61 21.54 L1618.04 21.79 L1617.28 23.62 L1618.22 24.91 L1618.29 25.78 L1617.48 26.59 L1616.61 26.52 L1615.32 25.58Z M1616.3 20.4 a4.2 4.2 0 1 0 -8.4 0 a4.2 4.2 0 1 0 8.4 0Z" fill="#dadada" fill-rule="evenodd"/>
<rect x="1634.4" y="3.5" width="40" height="33.8" rx="4.8" fill="url(#g7)" stroke="#d4d4d4" stroke-width="1.2"/>
<circle cx="1650.8" cy="20.4" r="12.3" fill="url(#g8)"/>
<path d="M1647.2 20.2 L1657 9.8 V30.6Z" fill="#fff"/>
<text x="22.2" y="105.7" font-size="40" fill="#f4f4f4" textLength="324.4" lengthAdjust="spacingAndGlyphs" stroke="#323232" stroke-width="0.45">Saturation Sweeps</text>
<rect x="40.90" y="161.70" width="312.10" height="413.00" fill="#242424"/>
<line x1="81.50" y1="161.70" x2="81.50" y2="574.70" stroke="#9a9a9a" stroke-width="1.1"/>
<line x1="124.20" y1="161.70" x2="124.20" y2="574.70" stroke="#9a9a9a" stroke-width="1.1"/>
<line x1="164.50" y1="161.70" x2="164.50" y2="574.70" stroke="#9a9a9a" stroke-width="1.1"/>
<line x1="207.00" y1="161.70" x2="207.00" y2="574.70" stroke="#9a9a9a" stroke-width="1.1"/>
<line x1="247.50" y1="161.70" x2="247.50" y2="574.70" stroke="#9a9a9a" stroke-width="1.1"/>
<line x1="290.40" y1="161.70" x2="290.40" y2="574.70" stroke="#9a9a9a" stroke-width="1.1"/>
<line x1="331.60" y1="161.70" x2="331.60" y2="574.70" stroke="#9a9a9a" stroke-width="1.1"/>
<text x="178.6" y="156.9" font-size="13.3" fill="#dcdcdc" text-anchor="middle" textLength="78.0" lengthAdjust="spacingAndGlyphs">DeltaE 2000</text>
<rect x="41.7" y="168.7" width="28.1" height="6.5" fill="url(#g9)" stroke="#000" stroke-width="1.2"/>
<rect x="41.7" y="176.9" width="16.9" height="6.5" fill="url(#g10)" stroke="#000" stroke-width="1.2"/>
<rect x="41.7" y="185.1" width="40.0" height="6.5" fill="url(#g11)" stroke="#000" stroke-width="1.2"/>
<rect x="41.7" y="193.3" width="30.8" height="6.5" fill="url(#g12)" stroke="#000" stroke-width="1.2"/>
<rect x="41.7" y="201.5" width="9.8" height="6.5" fill="url(#g13)" stroke="#000" stroke-width="1.2"/>
<rect x="41.7" y="209.7" width="3.0" height="6.5" fill="url(#g14)" stroke="#000" stroke-width="1.2"/>
<rect x="41.7" y="237.5" width="12.7" height="6.5" fill="url(#g15)" stroke="#000" stroke-width="1.2"/>
<rect x="41.7" y="245.7" width="16.9" height="6.5" fill="url(#g16)" stroke="#000" stroke-width="1.2"/>
<rect x="41.7" y="253.9" width="16.9" height="6.5" fill="url(#g17)" stroke="#000" stroke-width="1.2"/>
<rect x="41.7" y="262.1" width="31.7" height="6.5" fill="url(#g18)" stroke="#000" stroke-width="1.2"/>
<rect x="41.7" y="270.3" width="7.4" height="6.5" fill="url(#g19)" stroke="#000" stroke-width="1.2"/>
<rect x="41.7" y="278.5" width="9.8" height="6.5" fill="url(#g20)" stroke="#000" stroke-width="1.2"/>
<rect x="41.7" y="306.4" width="4.4" height="6.5" fill="url(#g21)" stroke="#000" stroke-width="1.2"/>
<rect x="41.7" y="314.6" width="12.7" height="6.5" fill="url(#g22)" stroke="#000" stroke-width="1.2"/>
<rect x="41.7" y="322.8" width="23.7" height="6.5" fill="url(#g23)" stroke="#000" stroke-width="1.2"/>
<rect x="41.7" y="331.0" width="33.8" height="6.5" fill="url(#g24)" stroke="#000" stroke-width="1.2"/>
<rect x="41.7" y="339.2" width="16.9" height="6.5" fill="url(#g25)" stroke="#000" stroke-width="1.2"/>
<rect x="41.7" y="347.4" width="11.2" height="6.5" fill="url(#g26)" stroke="#000" stroke-width="1.2"/>
<rect x="41.7" y="375.2" width="16.9" height="6.5" fill="url(#g27)" stroke="#000" stroke-width="1.2"/>
<rect x="41.7" y="383.4" width="15.4" height="6.5" fill="url(#g28)" stroke="#000" stroke-width="1.2"/>
<rect x="41.7" y="391.6" width="19.5" height="6.5" fill="url(#g29)" stroke="#000" stroke-width="1.2"/>
<rect x="41.7" y="399.9" width="35.8" height="6.5" fill="url(#g30)" stroke="#000" stroke-width="1.2"/>
<rect x="41.7" y="408.1" width="19.5" height="6.5" fill="url(#g31)" stroke="#000" stroke-width="1.2"/>
<rect x="41.7" y="416.2" width="18.7" height="6.5" fill="url(#g32)" stroke="#000" stroke-width="1.2"/>
<rect x="41.7" y="444.1" width="27.8" height="6.5" fill="url(#g33)" stroke="#000" stroke-width="1.2"/>
<rect x="41.7" y="452.3" width="16.6" height="6.5" fill="url(#g34)" stroke="#000" stroke-width="1.2"/>
<rect x="41.7" y="460.5" width="35.8" height="6.5" fill="url(#g35)" stroke="#000" stroke-width="1.2"/>
<rect x="41.7" y="468.7" width="43.8" height="6.5" fill="url(#g36)" stroke="#000" stroke-width="1.2"/>
<rect x="41.7" y="476.9" width="30.5" height="6.5" fill="url(#g37)" stroke="#000" stroke-width="1.2"/>
<rect x="41.7" y="485.1" width="31.7" height="6.5" fill="url(#g38)" stroke="#000" stroke-width="1.2"/>
<rect x="41.7" y="562.2" width="80.6" height="6.5" fill="url(#g39)" stroke="#000" stroke-width="1.2"/>
<line x1="40.90" y1="161.70" x2="353.00" y2="161.70" stroke="#a0a0a0" stroke-width="1.2"/>
<line x1="353.00" y1="161.70" x2="353.00" y2="574.70" stroke="#a0a0a0" stroke-width="1.2"/>
<line x1="40.90" y1="161.10" x2="40.90" y2="579.70" stroke="#b4b4b4" stroke-width="1.6"/>
<line x1="35.40" y1="574.70" x2="353.60" y2="574.70" stroke="#b4b4b4" stroke-width="1.6"/>
<line x1="35.40" y1="161.70" x2="40.90" y2="161.70" stroke="#e0e0e0" stroke-width="1.2"/>
<line x1="35.40" y1="231.15" x2="40.90" y2="231.15" stroke="#e0e0e0" stroke-width="1.2"/>
<line x1="35.40" y1="300.00" x2="40.90" y2="300.00" stroke="#e0e0e0" stroke-width="1.2"/>
<line x1="35.40" y1="368.85" x2="40.90" y2="368.85" stroke="#e0e0e0" stroke-width="1.2"/>
<line x1="35.40" y1="437.70" x2="40.90" y2="437.70" stroke="#e0e0e0" stroke-width="1.2"/>
<line x1="35.40" y1="506.55" x2="40.90" y2="506.55" stroke="#e0e0e0" stroke-width="1.2"/>
<text x="4.4" y="202.6" font-size="13.6" fill="#dcdcdc" textLength="35.0" lengthAdjust="spacingAndGlyphs">100%</text>
<text x="11.8" y="271.5" font-size="13.6" fill="#dcdcdc" textLength="27.6" lengthAdjust="spacingAndGlyphs">80%</text>
<text x="11.8" y="340.4" font-size="13.6" fill="#dcdcdc" textLength="27.6" lengthAdjust="spacingAndGlyphs">60%</text>
<text x="11.8" y="409.3" font-size="13.6" fill="#dcdcdc" textLength="27.6" lengthAdjust="spacingAndGlyphs">40%</text>
<text x="11.8" y="478.2" font-size="13.6" fill="#dcdcdc" textLength="27.6" lengthAdjust="spacingAndGlyphs">20%</text>
<text x="16.2" y="547.1" font-size="13.6" fill="#dcdcdc" textLength="23.2" lengthAdjust="spacingAndGlyphs">100</text>
<text x="40.4" y="596.6" font-size="13.3" fill="#dcdcdc" text-anchor="middle" textLength="7.8" lengthAdjust="spacingAndGlyphs">0</text>
<text x="82.0" y="596.6" font-size="13.3" fill="#dcdcdc" text-anchor="middle" textLength="7.8" lengthAdjust="spacingAndGlyphs">2</text>
<text x="123.6" y="596.6" font-size="13.3" fill="#dcdcdc" text-anchor="middle" textLength="7.8" lengthAdjust="spacingAndGlyphs">4</text>
<text x="165.2" y="596.6" font-size="13.3" fill="#dcdcdc" text-anchor="middle" textLength="7.8" lengthAdjust="spacingAndGlyphs">6</text>
<text x="206.8" y="596.6" font-size="13.3" fill="#dcdcdc" text-anchor="middle" textLength="7.8" lengthAdjust="spacingAndGlyphs">8</text>
<text x="248.4" y="596.6" font-size="13.3" fill="#dcdcdc" text-anchor="middle" textLength="15.7" lengthAdjust="spacingAndGlyphs">10</text>
<text x="290.0" y="596.6" font-size="13.3" fill="#dcdcdc" text-anchor="middle" textLength="15.7" lengthAdjust="spacingAndGlyphs">12</text>
<text x="331.6" y="596.6" font-size="13.3" fill="#dcdcdc" text-anchor="middle" textLength="15.7" lengthAdjust="spacingAndGlyphs">14</text>
<rect x="405.75" y="94.25" width="144.75" height="316.95" fill="#242424"/>
<line x1="399.75" y1="94.25" x2="405.75" y2="94.25" stroke="#ececec" stroke-width="1.6"/>
<text x="399.4" y="99.8" font-size="13.3" fill="#dcdcdc" text-anchor="end" textLength="15.5" lengthAdjust="spacingAndGlyphs">15</text>
<line x1="405.75" y1="148.25" x2="550.50" y2="148.25" stroke="#9a9a9a" stroke-width="1.1"/>
<line x1="399.75" y1="148.25" x2="405.75" y2="148.25" stroke="#ececec" stroke-width="1.6"/>
<text x="399.4" y="153.8" font-size="13.3" fill="#dcdcdc" text-anchor="end" textLength="15.5" lengthAdjust="spacingAndGlyphs">10</text>
<line x1="405.75" y1="200.20" x2="550.50" y2="200.20" stroke="#9a9a9a" stroke-width="1.1"/>
<line x1="399.75" y1="200.20" x2="405.75" y2="200.20" stroke="#ececec" stroke-width="1.6"/>
<text x="399.4" y="205.8" font-size="13.3" fill="#dcdcdc" text-anchor="end" textLength="7.8" lengthAdjust="spacingAndGlyphs">5</text>
<line x1="405.75" y1="253.25" x2="550.50" y2="253.25" stroke="#9a9a9a" stroke-width="1.1"/>
<line x1="399.75" y1="253.25" x2="405.75" y2="253.25" stroke="#ececec" stroke-width="1.6"/>
<text x="399.4" y="258.9" font-size="13.3" fill="#dcdcdc" text-anchor="end" textLength="7.8" lengthAdjust="spacingAndGlyphs">0</text>
<line x1="405.75" y1="306.20" x2="550.50" y2="306.20" stroke="#9a9a9a" stroke-width="1.1"/>
<line x1="399.75" y1="306.20" x2="405.75" y2="306.20" stroke="#ececec" stroke-width="1.6"/>
<text x="399.4" y="311.8" font-size="13.3" fill="#dcdcdc" text-anchor="end" textLength="12.4" lengthAdjust="spacingAndGlyphs">-5</text>
<line x1="405.75" y1="359.20" x2="550.50" y2="359.20" stroke="#9a9a9a" stroke-width="1.1"/>
<line x1="399.75" y1="359.20" x2="405.75" y2="359.20" stroke="#ececec" stroke-width="1.6"/>
<text x="399.4" y="364.8" font-size="13.3" fill="#dcdcdc" text-anchor="end" textLength="20.2" lengthAdjust="spacingAndGlyphs">-10</text>
<line x1="399.75" y1="411.20" x2="405.75" y2="411.20" stroke="#ececec" stroke-width="1.6"/>
<text x="399.4" y="416.8" font-size="13.3" fill="#dcdcdc" text-anchor="end" textLength="20.2" lengthAdjust="spacingAndGlyphs">-15</text>
<rect x="405.75" y="94.25" width="144.75" height="316.95" fill="none" stroke="#a0a0a0" stroke-width="1.2"/>
<line x1="405.75" y1="411.20" x2="405.75" y2="417.20" stroke="#e0e0e0" stroke-width="1.4"/>
<line x1="550.50" y1="411.20" x2="550.50" y2="417.20" stroke="#e0e0e0" stroke-width="1.4"/>
<text x="464.8" y="88.6" font-size="13.5" fill="#dcdcdc" text-anchor="middle" textLength="44.5" lengthAdjust="spacingAndGlyphs">Delta L</text>
<text x="478.0" y="426.7" font-size="13.3" fill="#dcdcdc" text-anchor="middle" textLength="36.4" lengthAdjust="spacingAndGlyphs">100%</text>
<rect x="602.75" y="94.25" width="145.00" height="316.95" fill="#242424"/>
<line x1="596.75" y1="94.25" x2="602.75" y2="94.25" stroke="#ececec" stroke-width="1.6"/>
<text x="596.5" y="99.8" font-size="13.3" fill="#dcdcdc" text-anchor="end" textLength="15.5" lengthAdjust="spacingAndGlyphs">15</text>
<line x1="602.75" y1="148.25" x2="747.75" y2="148.25" stroke="#9a9a9a" stroke-width="1.1"/>
<line x1="596.75" y1="148.25" x2="602.75" y2="148.25" stroke="#ececec" stroke-width="1.6"/>
<text x="596.5" y="153.8" font-size="13.3" fill="#dcdcdc" text-anchor="end" textLength="15.5" lengthAdjust="spacingAndGlyphs">10</text>
<line x1="602.75" y1="200.20" x2="747.75" y2="200.20" stroke="#9a9a9a" stroke-width="1.1"/>
<line x1="596.75" y1="200.20" x2="602.75" y2="200.20" stroke="#ececec" stroke-width="1.6"/>
<text x="596.5" y="205.8" font-size="13.3" fill="#dcdcdc" text-anchor="end" textLength="7.8" lengthAdjust="spacingAndGlyphs">5</text>
<line x1="602.75" y1="253.25" x2="747.75" y2="253.25" stroke="#9a9a9a" stroke-width="1.1"/>
<line x1="596.75" y1="253.25" x2="602.75" y2="253.25" stroke="#ececec" stroke-width="1.6"/>
<text x="596.5" y="258.9" font-size="13.3" fill="#dcdcdc" text-anchor="end" textLength="7.8" lengthAdjust="spacingAndGlyphs">0</text>
<line x1="602.75" y1="306.20" x2="747.75" y2="306.20" stroke="#9a9a9a" stroke-width="1.1"/>
<line x1="596.75" y1="306.20" x2="602.75" y2="306.20" stroke="#ececec" stroke-width="1.6"/>
<text x="596.5" y="311.8" font-size="13.3" fill="#dcdcdc" text-anchor="end" textLength="12.4" lengthAdjust="spacingAndGlyphs">-5</text>
<line x1="602.75" y1="359.20" x2="747.75" y2="359.20" stroke="#9a9a9a" stroke-width="1.1"/>
<line x1="596.75" y1="359.20" x2="602.75" y2="359.20" stroke="#ececec" stroke-width="1.6"/>
<text x="596.5" y="364.8" font-size="13.3" fill="#dcdcdc" text-anchor="end" textLength="20.2" lengthAdjust="spacingAndGlyphs">-10</text>
<line x1="596.75" y1="411.20" x2="602.75" y2="411.20" stroke="#ececec" stroke-width="1.6"/>
<text x="596.5" y="416.8" font-size="13.3" fill="#dcdcdc" text-anchor="end" textLength="20.2" lengthAdjust="spacingAndGlyphs">-15</text>
<rect x="602.75" y="94.25" width="145.00" height="316.95" fill="none" stroke="#a0a0a0" stroke-width="1.2"/>
<line x1="602.75" y1="411.20" x2="602.75" y2="417.20" stroke="#e0e0e0" stroke-width="1.4"/>
<line x1="747.75" y1="411.20" x2="747.75" y2="417.20" stroke="#e0e0e0" stroke-width="1.4"/>
<text x="661.9" y="88.6" font-size="13.5" fill="#dcdcdc" text-anchor="middle" textLength="46.8" lengthAdjust="spacingAndGlyphs">Delta C</text>
<text x="674.8" y="426.7" font-size="13.3" fill="#dcdcdc" text-anchor="middle" textLength="36.4" lengthAdjust="spacingAndGlyphs">100%</text>
<rect x="800.60" y="94.25" width="144.60" height="316.95" fill="#242424"/>
<line x1="794.60" y1="94.25" x2="800.60" y2="94.25" stroke="#ececec" stroke-width="1.6"/>
<text x="794.3" y="99.8" font-size="13.3" fill="#dcdcdc" text-anchor="end" textLength="15.5" lengthAdjust="spacingAndGlyphs">15</text>
<line x1="800.60" y1="148.25" x2="945.20" y2="148.25" stroke="#9a9a9a" stroke-width="1.1"/>
<line x1="794.60" y1="148.25" x2="800.60" y2="148.25" stroke="#ececec" stroke-width="1.6"/>
<text x="794.3" y="153.8" font-size="13.3" fill="#dcdcdc" text-anchor="end" textLength="15.5" lengthAdjust="spacingAndGlyphs">10</text>
<line x1="800.60" y1="200.20" x2="945.20" y2="200.20" stroke="#9a9a9a" stroke-width="1.1"/>
<line x1="794.60" y1="200.20" x2="800.60" y2="200.20" stroke="#ececec" stroke-width="1.6"/>
<text x="794.3" y="205.8" font-size="13.3" fill="#dcdcdc" text-anchor="end" textLength="7.8" lengthAdjust="spacingAndGlyphs">5</text>
<line x1="800.60" y1="253.25" x2="945.20" y2="253.25" stroke="#9a9a9a" stroke-width="1.1"/>
<line x1="794.60" y1="253.25" x2="800.60" y2="253.25" stroke="#ececec" stroke-width="1.6"/>
<text x="794.3" y="258.9" font-size="13.3" fill="#dcdcdc" text-anchor="end" textLength="7.8" lengthAdjust="spacingAndGlyphs">0</text>
<line x1="800.60" y1="306.20" x2="945.20" y2="306.20" stroke="#9a9a9a" stroke-width="1.1"/>
<line x1="794.60" y1="306.20" x2="800.60" y2="306.20" stroke="#ececec" stroke-width="1.6"/>
<text x="794.3" y="311.8" font-size="13.3" fill="#dcdcdc" text-anchor="end" textLength="12.4" lengthAdjust="spacingAndGlyphs">-5</text>
<line x1="800.60" y1="359.20" x2="945.20" y2="359.20" stroke="#9a9a9a" stroke-width="1.1"/>
<line x1="794.60" y1="359.20" x2="800.60" y2="359.20" stroke="#ececec" stroke-width="1.6"/>
<text x="794.3" y="364.8" font-size="13.3" fill="#dcdcdc" text-anchor="end" textLength="20.2" lengthAdjust="spacingAndGlyphs">-10</text>
<line x1="794.60" y1="411.20" x2="800.60" y2="411.20" stroke="#ececec" stroke-width="1.6"/>
<text x="794.3" y="416.8" font-size="13.3" fill="#dcdcdc" text-anchor="end" textLength="20.2" lengthAdjust="spacingAndGlyphs">-15</text>
<rect x="800.60" y="94.25" width="144.60" height="316.95" fill="none" stroke="#a0a0a0" stroke-width="1.2"/>
<line x1="800.60" y1="411.20" x2="800.60" y2="417.20" stroke="#e0e0e0" stroke-width="1.4"/>
<line x1="945.20" y1="411.20" x2="945.20" y2="417.20" stroke="#e0e0e0" stroke-width="1.4"/>
<text x="858.9" y="88.6" font-size="13.5" fill="#dcdcdc" text-anchor="middle" textLength="48.0" lengthAdjust="spacingAndGlyphs">Delta H</text>
<text x="872.4" y="426.7" font-size="13.3" fill="#dcdcdc" text-anchor="middle" textLength="36.4" lengthAdjust="spacingAndGlyphs">100%</text>
<rect x="419.60" y="252.40" width="116.00" height="1.60" fill="#1c1c1c"/>
<rect x="618.1" y="245.1" width="114.4" height="8.3" fill="url(#g40)" stroke="#000" stroke-width="1.3"/>
<rect x="815.3" y="250.4" width="114.3" height="2.8" fill="#b4ac50" stroke="#000" stroke-width="1"/>
<rect x="373.00" y="443.00" width="592.30" height="163.30" fill="#000"/>
<rect x="393.50" y="451.7" width="99.00" height="130.8" fill="#c1c2a3" stroke="#f4f4f4" stroke-width="1"/>
<text x="443.2" y="598.0" font-size="12" fill="#fff" text-anchor="middle">20%</text>
<rect x="509.50" y="451.7" width="98.00" height="130.8" fill="#c1c184" stroke="#f4f4f4" stroke-width="1"/>
<text x="558.7" y="598.0" font-size="12" fill="#fff" text-anchor="middle">40%</text>
<rect x="625.50" y="451.7" width="98.25" height="130.8" fill="#bfc06a" stroke="#f4f4f4" stroke-width="1"/>
<text x="674.8" y="598.0" font-size="12" fill="#fff" text-anchor="middle">60%</text>
<rect x="740.75" y="451.7" width="98.45" height="130.8" fill="#c1bd4a" stroke="#f4f4f4" stroke-width="1"/>
<text x="790.2" y="598.0" font-size="12" fill="#fff" text-anchor="middle">80%</text>
<rect x="856.50" y="451.7" width="98.80" height="130.8" fill="#c3c102" stroke="#f4f4f4" stroke-width="1"/>
<text x="906.1" y="598.0" font-size="12" fill="#fff" text-anchor="middle">100%</text>
<text transform="translate(386,479.7) rotate(-90)" font-size="12" fill="#fff" text-anchor="middle" textLength="34.5" lengthAdjust="spacingAndGlyphs">Actual</text>
<text transform="translate(386,554.1) rotate(-90)" font-size="12" fill="#fff" text-anchor="middle" textLength="34.3" lengthAdjust="spacingAndGlyphs">Target</text>
<rect x="971.25" y="62.00" width="700.00" height="558.00" fill="#1b1b1b"/>
<rect x="978.75" y="69.50" width="700.00" height="544.25" fill="#323232"/>
<rect x="1016.00" y="93.00" width="642.00" height="491.50" fill="#242424"/>
<g clip-path="url(#loc)"><rect x="1050" y="101" width="49" height="2.5" fill="url(#c0)"/><rect x="1039" y="103" width="86" height="2.5" fill="url(#c1)"/><rect x="1034" y="105" width="112" height="2.5" fill="url(#c2)"/><rect x="1030" y="107" width="135" height="2.5" fill="url(#c3)"/><rect x="1028" y="109" width="155" height="2.5" fill="url(#c4)"/><rect x="1026" y="111" width="175" height="2.5" fill="url(#c5)"/><rect x="1024" y="113" width="195" height="2.5" fill="url(#c6)"/><rect x="1023" y="115" width="214" height="2.5" fill="url(#c7)"/><rect x="1022" y="117" width="232" height="2.5" fill="url(#c8)"/><rect x="1020" y="119" width="251" height="2.5" fill="url(#c9)"/><rect x="1020" y="121" width="269" height="2.5" fill="url(#c10)"/><rect x="1019" y="123" width="287" height="2.5" fill="url(#c11)"/><rect x="1018" y="125" width="305" height="2.5" fill="url(#c12)"/><rect x="1018" y="127" width="323" height="2.5" fill="url(#c13)"/><rect x="1018" y="129" width="340" height="2.5" fill="url(#c14)"/><rect x="1017" y="131" width="358" height="2.5" fill="url(#c15)"/><rect x="1017" y="133" width="375" height="2.5" fill="url(#c16)"/><rect x="1017" y="135" width="393" height="2.5" fill="url(#c17)"/><rect x="1017" y="137" width="410" height="2.5" fill="url(#c18)"/><rect x="1017" y="139" width="427" height="2.5" fill="url(#c19)"/><rect x="1017" y="141" width="445" height="2.5" fill="url(#c20)"/><rect x="1017" y="143" width="462" height="2.5" fill="url(#c21)"/><rect x="1017" y="145" width="479" height="2.5" fill="url(#c22)"/><rect x="1017" y="147" width="497" height="2.5" fill="url(#c23)"/><rect x="1017" y="149" width="514" height="2.5" fill="url(#c24)"/><rect x="1018" y="151" width="531" height="2.5" fill="url(#c25)"/><rect x="1018" y="153" width="548" height="2.5" fill="url(#c26)"/><rect x="1018" y="155" width="565" height="2.5" fill="url(#c27)"/><rect x="1018" y="157" width="583" height="2.5" fill="url(#c28)"/><rect x="1019" y="159" width="599" height="2.5" fill="url(#c29)"/><rect x="1019" y="161" width="616" height="2.5" fill="url(#c30)"/><rect x="1019" y="163" width="633" height="2.5" fill="url(#c31)"/><rect x="1020" y="165" width="633" height="2.5" fill="url(#c32)"/><rect x="1020" y="167" width="633" height="2.5" fill="url(#c33)"/><rect x="1020" y="169" width="633" height="2.5" fill="url(#c34)"/><rect x="1021" y="171" width="632" height="2.5" fill="url(#c35)"/><rect x="1021" y="173" width="632" height="2.5" fill="url(#c36)"/><rect x="1022" y="175" width="631" height="2.5" fill="url(#c37)"/><rect x="1022" y="177" width="631" height="2.5" fill="url(#c38)"/><rect x="1023" y="179" width="630" height="2.5" fill="url(#c39)"/><rect x="1023" y="181" width="630" height="2.5" fill="url(#c40)"/><rect x="1024" y="183" width="629" height="2.5" fill="url(#c41)"/><rect x="1024" y="185" width="629" height="2.5" fill="url(#c42)"/><rect x="1025" y="187" width="628" height="2.5" fill="url(#c43)"/><rect x="1025" y="189" width="628" height="2.5" fill="url(#c44)"/><rect x="1026" y="191" width="627" height="2.5" fill="url(#c45)"/><rect x="1027" y="193" width="626" height="2.5" fill="url(#c46)"/><rect x="1027" y="195" width="626" height="2.5" fill="url(#c47)"/><rect x="1028" y="197" width="624" height="2.5" fill="url(#c48)"/><rect x="1028" y="199" width="622" height="2.5" fill="url(#c49)"/><rect x="1029" y="201" width="619" height="2.5" fill="url(#c50)"/><rect x="1030" y="203" width="616" height="2.5" fill="url(#c51)"/><rect x="1030" y="205" width="614" height="2.5" fill="url(#c52)"/><rect x="1031" y="207" width="611" height="2.5" fill="url(#c53)"/><rect x="1032" y="209" width="608" height="2.5" fill="url(#c54)"/><rect x="1032" y="211" width="606" height="2.5" fill="url(#c55)"/><rect x="1033" y="213" width="603" height="2.5" fill="url(#c56)"/><rect x="1034" y="215" width="600" height="2.5" fill="url(#c57)"/><rect x="1034" y="217" width="598" height="2.5" fill="url(#c58)"/><rect x="1035" y="219" width="596" height="2.5" fill="url(#c59)"/><rect x="1036" y="221" width="593" height="2.5" fill="url(#c60)"/><rect x="1037" y="223" width="590" height="2.5" fill="url(#c61)"/><rect x="1037" y="225" width="588" height="2.5" fill="url(#c62)"/><rect x="1038" y="227" width="585" height="2.5" fill="url(#c63)"/><rect x="1039" y="229" width="582" height="2.5" fill="url(#c64)"/><rect x="1040" y="231" width="579" height="2.5" fill="url(#c65)"/><rect x="1040" y="233" width="577" height="2.5" fill="url(#c66)"/><rect x="1041" y="235" width="574" height="2.5" fill="url(#c67)"/><rect x="1042" y="237" width="571" height="2.5" fill="url(#c68)"/><rect x="1043" y="239" width="568" height="2.5" fill="url(#c69)"/><rect x="1043" y="241" width="566" height="2.5" fill="url(#c70)"/><rect x="1044" y="243" width="563" height="2.5" fill="url(#c71)"/><rect x="1045" y="245" width="560" height="2.5" fill="url(#c72)"/><rect x="1046" y="247" width="557" height="2.5" fill="url(#c73)"/><rect x="1047" y="249" width="554" height="2.5" fill="url(#c74)"/><rect x="1047" y="251" width="553" height="2.5" fill="url(#c75)"/><rect x="1048" y="253" width="550" height="2.5" fill="url(#c76)"/><rect x="1049" y="255" width="547" height="2.5" fill="url(#c77)"/><rect x="1050" y="257" width="544" height="2.5" fill="url(#c78)"/><rect x="1051" y="259" width="541" height="2.5" fill="url(#c79)"/><rect x="1052" y="261" width="538" height="2.5" fill="url(#c80)"/><rect x="1053" y="263" width="535" height="2.5" fill="url(#c81)"/><rect x="1053" y="265" width="533" height="2.5" fill="url(#c82)"/><rect x="1054" y="267" width="530" height="2.5" fill="url(#c83)"/><rect x="1055" y="269" width="527" height="2.5" fill="url(#c84)"/><rect x="1056" y="271" width="524" height="2.5" fill="url(#c85)"/><rect x="1057" y="273" width="521" height="2.5" fill="url(#c86)"/><rect x="1058" y="275" width="518" height="2.5" fill="url(#c87)"/><rect x="1059" y="277" width="515" height="2.5" fill="url(#c88)"/><rect x="1060" y="279" width="512" height="2.5" fill="url(#c89)"/><rect x="1061" y="281" width="510" height="2.5" fill="url(#c90)"/><rect x="1061" y="283" width="508" height="2.5" fill="url(#c91)"/><rect x="1062" y="285" width="505" height="2.5" fill="url(#c92)"/><rect x="1063" y="287" width="502" height="2.5" fill="url(#c93)"/><rect x="1064" y="289" width="499" height="2.5" fill="url(#c94)"/><rect x="1065" y="291" width="496" height="2.5" fill="url(#c95)"/><rect x="1066" y="293" width="493" height="2.5" fill="url(#c96)"/><rect x="1067" y="295" width="490" height="2.5" fill="url(#c97)"/><rect x="1068" y="297" width="487" height="2.5" fill="url(#c98)"/><rect x="1069" y="299" width="484" height="2.5" fill="url(#c99)"/><rect x="1070" y="301" width="481" height="2.5" fill="url(#c100)"/><rect x="1071" y="303" width="478" height="2.5" fill="url(#c101)"/><rect x="1072" y="305" width="475" height="2.5" fill="url(#c102)"/><rect x="1073" y="307" width="472" height="2.5" fill="url(#c103)"/><rect x="1074" y="309" width="469" height="2.5" fill="url(#c104)"/><rect x="1075" y="311" width="466" height="2.5" fill="url(#c105)"/><rect x="1076" y="313" width="464" height="2.5" fill="url(#c106)"/><rect x="1077" y="315" width="461" height="2.5" fill="url(#c107)"/><rect x="1078" y="317" width="458" height="2.5" fill="url(#c108)"/><rect x="1079" y="319" width="455" height="2.5" fill="url(#c109)"/><rect x="1080" y="321" width="452" height="2.5" fill="url(#c110)"/><rect x="1082" y="323" width="448" height="2.5" fill="url(#c111)"/><rect x="1083" y="325" width="445" height="2.5" fill="url(#c112)"/><rect x="1084" y="327" width="442" height="2.5" fill="url(#c113)"/><rect x="1085" y="329" width="439" height="2.5" fill="url(#c114)"/><rect x="1086" y="331" width="436" height="2.5" fill="url(#c115)"/><rect x="1087" y="333" width="433" height="2.5" fill="url(#c116)"/><rect x="1088" y="335" width="430" height="2.5" fill="url(#c117)"/><rect x="1089" y="337" width="427" height="2.5" fill="url(#c118)"/><rect x="1090" y="339" width="424" height="2.5" fill="url(#c119)"/><rect x="1092" y="341" width="420" height="2.5" fill="url(#c120)"/><rect x="1093" y="343" width="417" height="2.5" fill="url(#c121)"/><rect x="1094" y="345" width="415" height="2.5" fill="url(#c122)"/><rect x="1095" y="347" width="412" height="2.5" fill="url(#c123)"/><rect x="1096" y="349" width="409" height="2.5" fill="url(#c124)"/><rect x="1097" y="351" width="406" height="2.5" fill="url(#c125)"/><rect x="1098" y="353" width="403" height="2.5" fill="url(#c126)"/><rect x="1100" y="355" width="399" height="2.5" fill="url(#c127)"/><rect x="1101" y="357" width="396" height="2.5" fill="url(#c128)"/><rect x="1102" y="359" width="393" height="2.5" fill="url(#c129)"/><rect x="1103" y="361" width="390" height="2.5" fill="url(#c130)"/><rect x="1104" y="363" width="387" height="2.5" fill="url(#c131)"/><rect x="1105" y="365" width="384" height="2.5" fill="url(#c132)"/><rect x="1107" y="367" width="380" height="2.5" fill="url(#c133)"/><rect x="1108" y="369" width="377" height="2.5" fill="url(#c134)"/><rect x="1109" y="371" width="374" height="2.5" fill="url(#c135)"/><rect x="1110" y="373" width="371" height="2.5" fill="url(#c136)"/><rect x="1111" y="375" width="369" height="2.5" fill="url(#c137)"/><rect x="1113" y="377" width="365" height="2.5" fill="url(#c138)"/><rect x="1114" y="379" width="362" height="2.5" fill="url(#c139)"/><rect x="1115" y="381" width="359" height="2.5" fill="url(#c140)"/><rect x="1116" y="383" width="356" height="2.5" fill="url(#c141)"/><rect x="1117" y="385" width="353" height="2.5" fill="url(#c142)"/><rect x="1119" y="387" width="349" height="2.5" fill="url(#c143)"/><rect x="1120" y="389" width="346" height="2.5" fill="url(#c144)"/><rect x="1121" y="391" width="343" height="2.5" fill="url(#c145)"/><rect x="1122" y="393" width="340" height="2.5" fill="url(#c146)"/><rect x="1124" y="395" width="336" height="2.5" fill="url(#c147)"/><rect x="1125" y="397" width="333" height="2.5" fill="url(#c148)"/><rect x="1126" y="399" width="330" height="2.5" fill="url(#c149)"/><rect x="1127" y="401" width="327" height="2.5" fill="url(#c150)"/><rect x="1129" y="403" width="323" height="2.5" fill="url(#c151)"/><rect x="1130" y="405" width="320" height="2.5" fill="url(#c152)"/><rect x="1131" y="407" width="318" height="2.5" fill="url(#c153)"/><rect x="1133" y="409" width="314" height="2.5" fill="url(#c154)"/><rect x="1134" y="411" width="311" height="2.5" fill="url(#c155)"/><rect x="1135" y="413" width="308" height="2.5" fill="url(#c156)"/><rect x="1137" y="415" width="304" height="2.5" fill="url(#c157)"/><rect x="1138" y="417" width="301" height="2.5" fill="url(#c158)"/><rect x="1139" y="419" width="298" height="2.5" fill="url(#c159)"/><rect x="1141" y="421" width="294" height="2.5" fill="url(#c160)"/><rect x="1142" y="423" width="291" height="2.5" fill="url(#c161)"/><rect x="1143" y="425" width="288" height="2.5" fill="url(#c162)"/><rect x="1145" y="427" width="284" height="2.5" fill="url(#c163)"/><rect x="1146" y="429" width="281" height="2.5" fill="url(#c164)"/><rect x="1147" y="431" width="278" height="2.5" fill="url(#c165)"/><rect x="1149" y="433" width="274" height="2.5" fill="url(#c166)"/><rect x="1150" y="435" width="271" height="2.5" fill="url(#c167)"/><rect x="1152" y="437" width="267" height="2.5" fill="url(#c168)"/><rect x="1153" y="439" width="265" height="2.5" fill="url(#c169)"/><rect x="1154" y="441" width="262" height="2.5" fill="url(#c170)"/><rect x="1156" y="443" width="258" height="2.5" fill="url(#c171)"/><rect x="1157" y="445" width="255" height="2.5" fill="url(#c172)"/><rect x="1159" y="447" width="251" height="2.5" fill="url(#c173)"/><rect x="1160" y="449" width="248" height="2.5" fill="url(#c174)"/><rect x="1162" y="451" width="244" height="2.5" fill="url(#c175)"/><rect x="1163" y="453" width="241" height="2.5" fill="url(#c176)"/><rect x="1165" y="455" width="237" height="2.5" fill="url(#c177)"/><rect x="1166" y="457" width="234" height="2.5" fill="url(#c178)"/><rect x="1168" y="459" width="230" height="2.5" fill="url(#c179)"/><rect x="1169" y="461" width="227" height="2.5" fill="url(#c180)"/><rect x="1171" y="463" width="223" height="2.5" fill="url(#c181)"/><rect x="1172" y="465" width="220" height="2.5" fill="url(#c182)"/><rect x="1174" y="467" width="216" height="2.5" fill="url(#c183)"/><rect x="1176" y="469" width="213" height="2.5" fill="url(#c184)"/><rect x="1177" y="471" width="210" height="2.5" fill="url(#c185)"/><rect x="1179" y="473" width="206" height="2.5" fill="url(#c186)"/><rect x="1180" y="475" width="203" height="2.5" fill="url(#c187)"/><rect x="1182" y="477" width="199" height="2.5" fill="url(#c188)"/><rect x="1184" y="479" width="195" height="2.5" fill="url(#c189)"/><rect x="1185" y="481" width="192" height="2.5" fill="url(#c190)"/><rect x="1187" y="483" width="188" height="2.5" fill="url(#c191)"/><rect x="1189" y="485" width="184" height="2.5" fill="url(#c192)"/><rect x="1190" y="487" width="181" height="2.5" fill="url(#c193)"/><rect x="1192" y="489" width="177" height="2.5" fill="url(#c194)"/><rect x="1194" y="491" width="173" height="2.5" fill="url(#c195)"/><rect x="1196" y="493" width="169" height="2.5" fill="url(#c196)"/><rect x="1198" y="495" width="165" height="2.5" fill="url(#c197)"/><rect x="1199" y="497" width="162" height="2.5" fill="url(#c198)"/><rect x="1201" y="499" width="158" height="2.5" fill="url(#c199)"/><rect x="1203" y="501" width="155" height="2.5" fill="url(#c200)"/><rect x="1205" y="503" width="151" height="2.5" fill="url(#c201)"/><rect x="1207" y="505" width="147" height="2.5" fill="url(#c202)"/><rect x="1209" y="507" width="143" height="2.5" fill="url(#c203)"/><rect x="1211" y="509" width="139" height="2.5" fill="url(#c204)"/><rect x="1213" y="511" width="135" height="2.5" fill="url(#c205)"/><rect x="1215" y="513" width="131" height="2.5" fill="url(#c206)"/><rect x="1217" y="515" width="127" height="2.5" fill="url(#c207)"/><rect x="1220" y="517" width="122" height="2.5" fill="url(#c208)"/><rect x="1222" y="519" width="118" height="2.5" fill="url(#c209)"/><rect x="1224" y="521" width="114" height="2.5" fill="url(#c210)"/><rect x="1226" y="523" width="110" height="2.5" fill="url(#c211)"/><rect x="1228" y="525" width="106" height="2.5" fill="url(#c212)"/><rect x="1231" y="527" width="101" height="2.5" fill="url(#c213)"/><rect x="1233" y="529" width="97" height="2.5" fill="url(#c214)"/><rect x="1235" y="531" width="93" height="2.5" fill="url(#c215)"/><rect x="1238" y="533" width="89" height="2.5" fill="url(#c216)"/><rect x="1240" y="535" width="85" height="2.5" fill="url(#c217)"/><rect x="1243" y="537" width="80" height="2.5" fill="url(#c218)"/><rect x="1245" y="539" width="76" height="2.5" fill="url(#c219)"/><rect x="1247" y="541" width="72" height="2.5" fill="url(#c220)"/><rect x="1250" y="543" width="67" height="2.5" fill="url(#c221)"/><rect x="1252" y="545" width="63" height="2.5" fill="url(#c222)"/><rect x="1255" y="547" width="58" height="2.5" fill="url(#c223)"/><rect x="1257" y="549" width="54" height="2.5" fill="url(#c224)"/><rect x="1260" y="551" width="49" height="2.5" fill="url(#c225)"/><rect x="1262" y="553" width="45" height="2.5" fill="url(#c226)"/><rect x="1264" y="555" width="41" height="2.5" fill="url(#c227)"/><rect x="1267" y="557" width="36" height="2.5" fill="url(#c228)"/><rect x="1269" y="559" width="32" height="2.5" fill="url(#c229)"/><rect x="1271" y="561" width="28" height="2.5" fill="url(#c230)"/><rect x="1274" y="563" width="24" height="2.5" fill="url(#c231)"/><rect x="1276" y="565" width="20" height="2.5" fill="url(#c232)"/><rect x="1279" y="567" width="15" height="2.5" fill="url(#c233)"/><rect x="1281" y="569" width="11" height="2.5" fill="url(#c234)"/><rect x="1285" y="571" width="4" height="2.5" fill="url(#c235)"/><path d="M1284.8 570.7 L1286.0 571.1 L1287.2 571.2 L1288.5 571.0 L1289.6 570.4 L1290.6 569.7 L1672.2 175.4 L1673.0 174.3 L1673.5 173.0 L1673.6 171.6 L1673.3 170.3 L1672.7 169.1 L1671.7 168.0 L1670.5 167.3 L1669.2 167.0 L1667.3 166.8 L1664.2 166.4 L1661.2 166.1 L1657.6 165.7 L1653.5 165.2 L1650.4 164.8 L1646.9 164.4 L1643.0 164.0 L1638.6 163.5 L1633.9 162.9 L1628.9 162.3 L1623.4 161.7 L1617.6 161.0 L1614.5 160.7 L1611.3 160.3 L1608.1 159.9 L1604.8 159.5 L1601.4 159.2 L1597.9 158.8 L1594.2 158.3 L1590.5 157.9 L1586.6 157.5 L1582.5 157.0 L1578.3 156.5 L1574.0 156.0 L1569.5 155.5 L1564.8 154.9 L1560.0 154.4 L1555.0 153.8 L1549.8 153.2 L1544.5 152.6 L1539.0 151.9 L1533.2 151.3 L1527.4 150.6 L1521.3 149.9 L1515.2 149.2 L1508.8 148.5 L1502.3 147.7 L1495.7 147.0 L1489.0 146.2 L1482.0 145.4 L1474.9 144.6 L1467.6 143.7 L1460.2 142.9 L1452.8 142.0 L1445.3 141.2 L1437.9 140.3 L1430.4 139.4 L1422.9 138.6 L1415.3 137.7 L1407.6 136.8 L1399.9 135.9 L1392.1 135.0 L1384.3 134.1 L1376.5 133.2 L1368.7 132.3 L1361.0 131.4 L1353.4 130.5 L1345.8 129.7 L1338.3 128.8 L1330.9 127.9 L1323.5 127.1 L1316.3 126.3 L1309.1 125.4 L1302.1 124.6 L1295.1 123.8 L1288.3 123.0 L1281.5 122.2 L1274.9 121.5 L1268.4 120.7 L1262.0 120.0 L1255.6 119.3 L1249.4 118.5 L1243.4 117.8 L1237.4 117.2 L1231.5 116.5 L1225.8 115.8 L1220.2 115.2 L1214.6 114.6 L1209.2 113.9 L1203.9 113.3 L1198.7 112.8 L1193.6 112.2 L1188.6 111.6 L1183.7 111.1 L1178.9 110.6 L1174.2 110.0 L1169.6 109.5 L1165.1 109.0 L1160.7 108.6 L1156.3 108.1 L1152.1 107.7 L1147.9 107.2 L1143.8 106.8 L1139.8 106.4 L1135.9 106.0 L1132.1 105.7 L1128.3 105.3 L1124.6 105.0 L1120.9 104.7 L1117.4 104.4 L1113.8 104.1 L1110.4 103.8 L1107.0 103.6 L1103.6 103.3 L1100.3 103.1 L1097.1 102.9 L1093.9 102.8 L1090.7 102.6 L1087.6 102.5 L1084.5 102.4 L1081.4 102.3 L1078.3 102.2 L1075.3 102.2 L1072.3 102.2 L1069.3 102.2 L1066.3 102.2 L1063.3 102.3 L1057.3 102.5 L1051.5 102.9 L1046.1 103.6 L1040.9 104.7 L1036.0 106.3 L1031.6 108.5 L1027.5 111.6 L1026.8 112.3 L1024.0 115.6 L1021.1 120.7 L1019.9 123.7 L1019.0 126.8 L1018.3 130.3 L1017.8 133.9 L1017.5 137.9 L1017.5 142.1 L1017.6 146.7 L1018.1 151.6 L1018.7 156.9 L1019.7 162.7 L1020.9 168.9 L1022.3 175.5 L1024.1 182.6 L1026.2 190.2 L1028.6 198.2 L1031.4 206.8 L1034.5 216.0 L1038.0 225.6 L1041.8 235.6 L1045.9 246.1 L1050.4 256.9 L1055.2 268.0 L1060.2 279.4 L1065.7 291.0 L1071.5 302.8 L1077.6 314.7 L1084.0 326.6 L1090.6 338.5 L1097.3 350.2 L1104.1 361.9 L1110.9 373.3 L1117.7 384.6 L1124.6 395.6 L1131.3 406.2 L1138.0 416.4 L1144.6 426.1 L1151.0 435.4 L1157.2 444.2 L1163.3 452.5 L1169.3 460.4 L1175.1 467.8 L1180.7 474.8 L1186.0 481.2 L1191.1 487.1 L1195.8 492.5 L1200.2 497.3 L1204.3 501.6 L1208.2 505.6 L1212.0 509.4 L1215.7 512.9 L1219.2 516.2 L1222.6 519.4 L1226.0 522.4 L1229.2 525.2 L1232.3 527.9 L1235.2 530.4 L1238.1 532.8 L1240.8 535.0 L1243.4 537.2 L1246.0 539.3 L1248.4 541.3 L1250.7 543.3 L1255.1 546.9 L1259.1 550.2 L1262.6 553.1 L1265.8 555.8 L1268.7 558.3 L1271.3 560.6 L1274.8 563.5 L1277.8 565.9 L1280.2 567.7 L1283.0 569.8Z M1495.5 154.7 L1149.0 122.1 L1202.6 454.7Z" fill="#000" fill-opacity="0.4" fill-rule="evenodd"/></g>
<line x1="1016.00" y1="93.00" x2="1660.00" y2="93.00" stroke="#a8a8a8" stroke-width="1.2"/>
<line x1="1016.00" y1="92.40" x2="1016.00" y2="589.50" stroke="#b8b8b8" stroke-width="1.5"/>
<line x1="1010.00" y1="584.50" x2="1660.00" y2="584.50" stroke="#b8b8b8" stroke-width="1.5"/>
<text x="1277.0" y="87.0" font-size="13.5" fill="#dcdcdc" textLength="84.3" lengthAdjust="spacingAndGlyphs">CIE 1976 u'v'</text>
<line x1="1016.00" y1="584.50" x2="1016.00" y2="590.00" stroke="#d0d0d0" stroke-width="1.3"/>
<text x="1015.3" y="605.5" font-size="13.3" fill="#dcdcdc" text-anchor="middle" textLength="8.1" lengthAdjust="spacingAndGlyphs">0</text>
<line x1="1069.22" y1="584.50" x2="1069.22" y2="590.00" stroke="#d0d0d0" stroke-width="1.3"/>
<text x="1068.5" y="605.5" font-size="13.3" fill="#dcdcdc" text-anchor="middle" textLength="28.5" lengthAdjust="spacingAndGlyphs">0,05</text>
<line x1="1122.44" y1="584.50" x2="1122.44" y2="590.00" stroke="#d0d0d0" stroke-width="1.3"/>
<text x="1121.7" y="605.5" font-size="13.3" fill="#dcdcdc" text-anchor="middle" textLength="20.3" lengthAdjust="spacingAndGlyphs">0,1</text>
<line x1="1175.66" y1="584.50" x2="1175.66" y2="590.00" stroke="#d0d0d0" stroke-width="1.3"/>
<text x="1175.0" y="605.5" font-size="13.3" fill="#dcdcdc" text-anchor="middle" textLength="28.5" lengthAdjust="spacingAndGlyphs">0,15</text>
<line x1="1228.88" y1="584.50" x2="1228.88" y2="590.00" stroke="#d0d0d0" stroke-width="1.3"/>
<text x="1228.2" y="605.5" font-size="13.3" fill="#dcdcdc" text-anchor="middle" textLength="20.3" lengthAdjust="spacingAndGlyphs">0,2</text>
<line x1="1282.10" y1="584.50" x2="1282.10" y2="590.00" stroke="#d0d0d0" stroke-width="1.3"/>
<text x="1281.4" y="605.5" font-size="13.3" fill="#dcdcdc" text-anchor="middle" textLength="28.5" lengthAdjust="spacingAndGlyphs">0,25</text>
<line x1="1335.32" y1="584.50" x2="1335.32" y2="590.00" stroke="#d0d0d0" stroke-width="1.3"/>
<text x="1334.6" y="605.5" font-size="13.3" fill="#dcdcdc" text-anchor="middle" textLength="20.3" lengthAdjust="spacingAndGlyphs">0,3</text>
<line x1="1388.54" y1="584.50" x2="1388.54" y2="590.00" stroke="#d0d0d0" stroke-width="1.3"/>
<text x="1387.8" y="605.5" font-size="13.3" fill="#dcdcdc" text-anchor="middle" textLength="28.5" lengthAdjust="spacingAndGlyphs">0,35</text>
<line x1="1441.76" y1="584.50" x2="1441.76" y2="590.00" stroke="#d0d0d0" stroke-width="1.3"/>
<text x="1441.1" y="605.5" font-size="13.3" fill="#dcdcdc" text-anchor="middle" textLength="20.3" lengthAdjust="spacingAndGlyphs">0,4</text>
<line x1="1494.98" y1="584.50" x2="1494.98" y2="590.00" stroke="#d0d0d0" stroke-width="1.3"/>
<text x="1494.3" y="605.5" font-size="13.3" fill="#dcdcdc" text-anchor="middle" textLength="28.5" lengthAdjust="spacingAndGlyphs">0,45</text>
<line x1="1548.20" y1="584.50" x2="1548.20" y2="590.00" stroke="#d0d0d0" stroke-width="1.3"/>
<text x="1547.5" y="605.5" font-size="13.3" fill="#dcdcdc" text-anchor="middle" textLength="20.3" lengthAdjust="spacingAndGlyphs">0,5</text>
<line x1="1601.42" y1="584.50" x2="1601.42" y2="590.00" stroke="#d0d0d0" stroke-width="1.3"/>
<text x="1600.7" y="605.5" font-size="13.3" fill="#dcdcdc" text-anchor="middle" textLength="28.5" lengthAdjust="spacingAndGlyphs">0,55</text>
<line x1="1010.00" y1="584.50" x2="1016.00" y2="584.50" stroke="#e0e0e0" stroke-width="1.3"/>
<text x="1009.5" y="592.0" font-size="13.3" fill="#dcdcdc" text-anchor="end" textLength="8.1" lengthAdjust="spacingAndGlyphs">0</text>
<line x1="1010.00" y1="544.50" x2="1016.00" y2="544.50" stroke="#e0e0e0" stroke-width="1.3"/>
<text x="1009.5" y="550.8" font-size="13.3" fill="#dcdcdc" text-anchor="end" textLength="28.5" lengthAdjust="spacingAndGlyphs">0,05</text>
<line x1="1010.00" y1="503.50" x2="1016.00" y2="503.50" stroke="#e0e0e0" stroke-width="1.3"/>
<text x="1009.5" y="508.8" font-size="13.3" fill="#dcdcdc" text-anchor="end" textLength="20.3" lengthAdjust="spacingAndGlyphs">0,1</text>
<line x1="1010.00" y1="462.50" x2="1016.00" y2="462.50" stroke="#e0e0e0" stroke-width="1.3"/>
<text x="1009.5" y="467.8" font-size="13.3" fill="#dcdcdc" text-anchor="end" textLength="28.5" lengthAdjust="spacingAndGlyphs">0,15</text>
<line x1="1010.00" y1="421.50" x2="1016.00" y2="421.50" stroke="#e0e0e0" stroke-width="1.3"/>
<text x="1009.5" y="426.8" font-size="13.3" fill="#dcdcdc" text-anchor="end" textLength="20.3" lengthAdjust="spacingAndGlyphs">0,2</text>
<line x1="1010.00" y1="380.50" x2="1016.00" y2="380.50" stroke="#e0e0e0" stroke-width="1.3"/>
<text x="1009.5" y="385.8" font-size="13.3" fill="#dcdcdc" text-anchor="end" textLength="28.5" lengthAdjust="spacingAndGlyphs">0,25</text>
<line x1="1010.00" y1="339.50" x2="1016.00" y2="339.50" stroke="#e0e0e0" stroke-width="1.3"/>
<text x="1009.5" y="344.8" font-size="13.3" fill="#dcdcdc" text-anchor="end" textLength="20.3" lengthAdjust="spacingAndGlyphs">0,3</text>
<line x1="1010.00" y1="298.50" x2="1016.00" y2="298.50" stroke="#e0e0e0" stroke-width="1.3"/>
<text x="1009.5" y="303.8" font-size="13.3" fill="#dcdcdc" text-anchor="end" textLength="28.5" lengthAdjust="spacingAndGlyphs">0,35</text>
<line x1="1010.00" y1="257.50" x2="1016.00" y2="257.50" stroke="#e0e0e0" stroke-width="1.3"/>
<text x="1009.5" y="262.8" font-size="13.3" fill="#dcdcdc" text-anchor="end" textLength="20.3" lengthAdjust="spacingAndGlyphs">0,4</text>
<line x1="1010.00" y1="216.50" x2="1016.00" y2="216.50" stroke="#e0e0e0" stroke-width="1.3"/>
<text x="1009.5" y="221.8" font-size="13.3" fill="#dcdcdc" text-anchor="end" textLength="28.5" lengthAdjust="spacingAndGlyphs">0,45</text>
<line x1="1010.00" y1="175.50" x2="1016.00" y2="175.50" stroke="#e0e0e0" stroke-width="1.3"/>
<text x="1009.5" y="180.8" font-size="13.3" fill="#dcdcdc" text-anchor="end" textLength="20.3" lengthAdjust="spacingAndGlyphs">0,5</text>
<line x1="1010.00" y1="134.50" x2="1016.00" y2="134.50" stroke="#e0e0e0" stroke-width="1.3"/>
<text x="1009.5" y="139.8" font-size="13.3" fill="#dcdcdc" text-anchor="end" textLength="28.5" lengthAdjust="spacingAndGlyphs">0,55</text>
<rect x="1141.9" y="115.9" width="13" height="13" fill="#009900" stroke="#fff" stroke-opacity="1" stroke-width="1.6"/>
<rect x="1154.0" y="127.6" width="13" height="13" fill="#79ff79" fill-opacity="0.55" stroke="#fff" stroke-opacity="0.8" stroke-width="1.4"/>
<rect x="1165.8" y="139.8" width="13" height="13" fill="#a0ffa0" fill-opacity="0.55" stroke="#fff" stroke-opacity="0.8" stroke-width="1.4"/>
<rect x="1181.0" y="154.8" width="13" height="13" fill="#c5ffc5" fill-opacity="0.55" stroke="#fff" stroke-opacity="0.8" stroke-width="1.4"/>
<rect x="1198.9" y="171.8" width="13" height="13" fill="#e2ffe2" fill-opacity="0.55" stroke="#fff" stroke-opacity="0.8" stroke-width="1.4"/>
<rect x="1226.1" y="123.7" width="13" height="13" fill="#989900" stroke="#fff" stroke-opacity="1" stroke-width="1.6"/>
<rect x="1224.9" y="135.0" width="13" height="13" fill="#fff966" fill-opacity="0.55" stroke="#fff" stroke-opacity="0.8" stroke-width="1.4"/>
<rect x="1224.9" y="146.7" width="13" height="13" fill="#ffff93" fill-opacity="0.55" stroke="#fff" stroke-opacity="0.8" stroke-width="1.4"/>
<rect x="1223.0" y="160.0" width="13" height="13" fill="#ffffc0" fill-opacity="0.55" stroke="#fff" stroke-opacity="0.8" stroke-width="1.4"/>
<rect x="1222.1" y="175.8" width="13" height="13" fill="#ffffe2" fill-opacity="0.55" stroke="#fff" stroke-opacity="0.8" stroke-width="1.4"/>
<rect x="1156.8" y="203.0" width="13" height="13" fill="#009998" stroke="#fff" stroke-opacity="1" stroke-width="1.6"/>
<rect x="1170.1" y="201.2" width="13" height="13" fill="#73f9ff" fill-opacity="0.55" stroke="#fff" stroke-opacity="0.8" stroke-width="1.4"/>
<rect x="1181.5" y="199.4" width="13" height="13" fill="#a2f9ff" fill-opacity="0.55" stroke="#fff" stroke-opacity="0.8" stroke-width="1.4"/>
<rect x="1194.9" y="197.5" width="13" height="13" fill="#c5ffff" fill-opacity="0.55" stroke="#fff" stroke-opacity="0.8" stroke-width="1.4"/>
<rect x="1207.0" y="195.7" width="13" height="13" fill="#e2ffff" fill-opacity="0.55" stroke="#fff" stroke-opacity="0.8" stroke-width="1.4"/>
<rect x="1489.0" y="148.5" width="13" height="13" fill="#990000" stroke="#fff" stroke-opacity="1" stroke-width="1.6"/>
<rect x="1425.0" y="159.0" width="13" height="13" fill="#ff5555" fill-opacity="0.55" stroke="#fff" stroke-opacity="0.8" stroke-width="1.4"/>
<rect x="1370.0" y="168.9" width="13" height="13" fill="#ff7a7a" fill-opacity="0.55" stroke="#fff" stroke-opacity="0.8" stroke-width="1.4"/>
<rect x="1321.0" y="175.9" width="13" height="13" fill="#ff9a9a" fill-opacity="0.55" stroke="#fff" stroke-opacity="0.8" stroke-width="1.4"/>
<rect x="1267.8" y="184.8" width="13" height="13" fill="#ffc2c2" fill-opacity="0.55" stroke="#fff" stroke-opacity="0.8" stroke-width="1.4"/>
<rect x="1334.0" y="305.7" width="13" height="13" fill="#990098" stroke="#fff" stroke-opacity="1" stroke-width="1.6"/>
<rect x="1300.9" y="276.0" width="13" height="13" fill="#ff71ff" fill-opacity="0.55" stroke="#fff" stroke-opacity="0.8" stroke-width="1.4"/>
<rect x="1274.9" y="249.0" width="13" height="13" fill="#ff93ff" fill-opacity="0.55" stroke="#fff" stroke-opacity="0.8" stroke-width="1.4"/>
<rect x="1256.0" y="229.0" width="13" height="13" fill="#ffbbff" fill-opacity="0.55" stroke="#fff" stroke-opacity="0.8" stroke-width="1.4"/>
<rect x="1237.0" y="210.0" width="13" height="13" fill="#ffddff" fill-opacity="0.55" stroke="#fff" stroke-opacity="0.8" stroke-width="1.4"/>
<rect x="1195.9" y="448.0" width="13" height="13" fill="#000099" stroke="#fff" stroke-opacity="1" stroke-width="1.6"/>
<rect x="1203.8" y="361.9" width="13" height="13" fill="#5f5fff" fill-opacity="0.55" stroke="#fff" stroke-opacity="0.8" stroke-width="1.4"/>
<rect x="1210.0" y="305.1" width="13" height="13" fill="#8787ff" fill-opacity="0.55" stroke="#fff" stroke-opacity="0.8" stroke-width="1.4"/>
<rect x="1213.9" y="259.9" width="13" height="13" fill="#b1b1ff" fill-opacity="0.55" stroke="#fff" stroke-opacity="0.8" stroke-width="1.4"/>
<rect x="1216.5" y="223.0" width="13" height="13" fill="#d8d8ff" fill-opacity="0.55" stroke="#fff" stroke-opacity="0.8" stroke-width="1.4"/>
<rect x="1219.3" y="193.2" width="12.6" height="12.6" fill="#fff" fill-opacity="0.45" stroke="#000" stroke-width="1.8"/>
<circle cx="1151.8" cy="122.4" r="4.2" fill="#10a810" stroke="#000" stroke-width="1.1"/>
<circle cx="1162.1" cy="132.9" r="4.2" fill="#50a850" stroke="#000" stroke-width="1.1"/>
<circle cx="1174.2" cy="145.4" r="4.2" fill="#6cac6c" stroke="#000" stroke-width="1.1"/>
<circle cx="1187.5" cy="159.0" r="4.2" fill="#88b088" stroke="#000" stroke-width="1.1"/>
<circle cx="1205.4" cy="176.8" r="4.2" fill="#a0b4a0" stroke="#000" stroke-width="1.1"/>
<circle cx="1232.6" cy="130.2" r="4.2" fill="#b8b410" stroke="#000" stroke-width="1.1"/>
<circle cx="1230.8" cy="141.5" r="4.2" fill="#b4b048" stroke="#000" stroke-width="1.1"/>
<circle cx="1229.9" cy="152.6" r="4.2" fill="#b4b468" stroke="#000" stroke-width="1.1"/>
<circle cx="1228.5" cy="164.5" r="4.2" fill="#b4b488" stroke="#000" stroke-width="1.1"/>
<circle cx="1226.8" cy="180.8" r="4.2" fill="#b4b4a0" stroke="#000" stroke-width="1.1"/>
<circle cx="1164.5" cy="206.8" r="4.2" fill="#10a8b0" stroke="#000" stroke-width="1.1"/>
<circle cx="1175.4" cy="205.5" r="4.2" fill="#50acb0" stroke="#000" stroke-width="1.1"/>
<circle cx="1187.4" cy="203.8" r="4.2" fill="#70acb0" stroke="#000" stroke-width="1.1"/>
<circle cx="1199.9" cy="201.4" r="4.2" fill="#88b0b0" stroke="#000" stroke-width="1.1"/>
<circle cx="1211.9" cy="199.8" r="4.2" fill="#a0b4b4" stroke="#000" stroke-width="1.1"/>
<circle cx="1493.9" cy="156.3" r="4.2" fill="#b01010" stroke="#000" stroke-width="1.1"/>
<circle cx="1436.4" cy="164.5" r="4.2" fill="#c04040" stroke="#000" stroke-width="1.1"/>
<circle cx="1376.9" cy="174.1" r="4.2" fill="#c05c5c" stroke="#000" stroke-width="1.1"/>
<circle cx="1325.1" cy="181.1" r="4.2" fill="#c07474" stroke="#000" stroke-width="1.1"/>
<circle cx="1272.2" cy="190.4" r="4.2" fill="#b88c8c" stroke="#000" stroke-width="1.1"/>
<circle cx="1336.1" cy="310.0" r="4.2" fill="#b010b0" stroke="#000" stroke-width="1.1"/>
<circle cx="1306.1" cy="279.5" r="4.2" fill="#b450b4" stroke="#000" stroke-width="1.1"/>
<circle cx="1279.0" cy="251.3" r="4.2" fill="#b468b4" stroke="#000" stroke-width="1.1"/>
<circle cx="1259.9" cy="232.5" r="4.2" fill="#b484b4" stroke="#000" stroke-width="1.1"/>
<circle cx="1240.5" cy="213.4" r="4.2" fill="#b49cb4" stroke="#000" stroke-width="1.1"/>
<circle cx="1202.4" cy="439.4" r="4.2" fill="#1010c0" stroke="#000" stroke-width="1.1"/>
<circle cx="1209.6" cy="363.4" r="4.2" fill="#4848c0" stroke="#000" stroke-width="1.1"/>
<circle cx="1215.1" cy="305.0" r="4.2" fill="#6464bc" stroke="#000" stroke-width="1.1"/>
<circle cx="1219.0" cy="262.4" r="4.2" fill="#8080b8" stroke="#000" stroke-width="1.1"/>
<circle cx="1221.5" cy="227.1" r="4.2" fill="#9c9cb8" stroke="#000" stroke-width="1.1"/>
<circle cx="1225.6" cy="196.8" r="4.2" fill="#fff" stroke="#000" stroke-width="1.1"/>
<rect x="1437.20" y="432.20" width="211.80" height="144.40" fill="url(#ins)"/>
<path d="M1437.2 432.2 H1649.0 V560.7 L1437.2 448.4Z" fill="#000" fill-opacity="0.4"/>
<rect x="1437.2" y="432.2" width="211.8" height="144.4" fill="none" stroke="#9a9a9a" stroke-width="1.6"/>
<rect x="1535.6" y="496.6" width="13.4" height="13.4" fill="#e8e860" fill-opacity="0.3" stroke="#fff" stroke-opacity="0.9" stroke-width="1.3"/>
<circle cx="1542.3" cy="500" r="4.2" fill="#a4a000" stroke="#000" stroke-width="1.2"/>
<text x="48.6" y="651.5" font-size="27.5" fill="#f2f2f2" textLength="232.4" lengthAdjust="spacingAndGlyphs" stroke="#f2f2f2" stroke-width="0.3">Avg dE2000: 1,19</text>
<text x="44.4" y="692.3" font-size="27.5" fill="#f2f2f2" textLength="241.6" lengthAdjust="spacingAndGlyphs" stroke="#f2f2f2" stroke-width="0.3">Max dE2000: 3,96</text>
<text x="13.0" y="740.5" font-size="27.6" fill="#f2f2f2" textLength="218.0" lengthAdjust="spacingAndGlyphs" stroke="#f2f2f2" stroke-width="0.3">Current Reading</text>
<text x="12.4" y="775.6" font-size="23.4" fill="#f2f2f2" textLength="101.6" lengthAdjust="spacingAndGlyphs" stroke="#f2f2f2" stroke-width="0.3">x: 0,4193</text>
<text x="169.6" y="775.6" font-size="23.4" fill="#f2f2f2" textLength="102.0" lengthAdjust="spacingAndGlyphs" stroke="#f2f2f2" stroke-width="0.3">y: 0,5069</text>
<text x="13.0" y="816.4" font-size="23.4" fill="#f2f2f2" textLength="96.0" lengthAdjust="spacingAndGlyphs" stroke="#f2f2f2" stroke-width="0.3">fL: 65,88</text>
<text y="850.4" font-size="23.4" fill="#f2f2f2" stroke="#f2f2f2" stroke-width="0.3"><tspan x="13" textLength="57" lengthAdjust="spacingAndGlyphs">cd/m</tspan><tspan x="70.2" dy="2" font-size="29" textLength="10" lengthAdjust="spacingAndGlyphs">²</tspan><tspan x="81.6" dy="-2" textLength="89.8" lengthAdjust="spacingAndGlyphs">: 225,73</tspan></text>
<rect x="354.40" y="659.30" width="250.20" height="180.00" fill="#242424"/>
<line x1="354.40" y1="677.30" x2="604.60" y2="677.30" stroke="#9a9a9a" stroke-width="1.1"/>
<line x1="348.90" y1="677.30" x2="354.40" y2="677.30" stroke="#e0e0e0" stroke-width="1.3"/>
<text x="348.6" y="682.1" font-size="13.2" fill="#dcdcdc" text-anchor="end" textLength="24.2" lengthAdjust="spacingAndGlyphs">104</text>
<line x1="354.40" y1="714.40" x2="604.60" y2="714.40" stroke="#9a9a9a" stroke-width="1.1"/>
<line x1="348.90" y1="714.40" x2="354.40" y2="714.40" stroke="#e0e0e0" stroke-width="1.3"/>
<text x="348.6" y="719.2" font-size="13.2" fill="#dcdcdc" text-anchor="end" textLength="24.2" lengthAdjust="spacingAndGlyphs">102</text>
<line x1="354.40" y1="750.20" x2="604.60" y2="750.20" stroke="#9a9a9a" stroke-width="1.1"/>
<line x1="348.90" y1="750.20" x2="354.40" y2="750.20" stroke="#e0e0e0" stroke-width="1.3"/>
<text x="348.6" y="755.0" font-size="13.2" fill="#dcdcdc" text-anchor="end" textLength="24.2" lengthAdjust="spacingAndGlyphs">100</text>
<line x1="354.40" y1="786.40" x2="604.60" y2="786.40" stroke="#9a9a9a" stroke-width="1.1"/>
<line x1="348.90" y1="786.40" x2="354.40" y2="786.40" stroke="#e0e0e0" stroke-width="1.3"/>
<text x="348.6" y="791.2" font-size="13.2" fill="#dcdcdc" text-anchor="end" textLength="16.2" lengthAdjust="spacingAndGlyphs">98</text>
<line x1="354.40" y1="822.20" x2="604.60" y2="822.20" stroke="#9a9a9a" stroke-width="1.1"/>
<line x1="348.90" y1="822.20" x2="354.40" y2="822.20" stroke="#e0e0e0" stroke-width="1.3"/>
<text x="348.6" y="827.0" font-size="13.2" fill="#dcdcdc" text-anchor="end" textLength="16.2" lengthAdjust="spacingAndGlyphs">96</text>
<line x1="354.40" y1="659.30" x2="604.60" y2="659.30" stroke="#a0a0a0" stroke-width="1.2"/>
<line x1="604.60" y1="659.30" x2="604.60" y2="839.30" stroke="#a0a0a0" stroke-width="1.2"/>
<line x1="354.40" y1="659.30" x2="354.40" y2="839.30" stroke="#a0a0a0" stroke-width="1.2"/>
<rect x="380.0" y="753.8" width="64.5" height="85.5" fill="url(#g41)" stroke="#000" stroke-width="1.7"/>
<rect x="445.3" y="748.2" width="65.2" height="91.1" fill="url(#g42)" stroke="#000" stroke-width="1.7"/>
<rect x="511.3" y="780.8" width="65.9" height="58.5" fill="url(#g43)" stroke="#000" stroke-width="1.7"/>
<line x1="353.80" y1="839.30" x2="605.20" y2="839.30" stroke="#b4b4b4" stroke-width="1.2"/>
<line x1="354.40" y1="839.30" x2="354.40" y2="844.30" stroke="#c8c8c8" stroke-width="1.3"/>
<line x1="604.60" y1="839.30" x2="604.60" y2="844.30" stroke="#c8c8c8" stroke-width="1.3"/>
<text x="464.5" y="654.2" font-size="13.3" fill="#dcdcdc" text-anchor="middle" textLength="82.5" lengthAdjust="spacingAndGlyphs">RGB Balance</text>
<text x="480.0" y="856.0" font-size="13.3" fill="#dcdcdc" text-anchor="middle" textLength="36.4" lengthAdjust="spacingAndGlyphs">100%</text>
<rect x="624.40" y="627.00" width="730.70" height="230.80" fill="#0c0c0c"/>
<rect x="626.00" y="628.80" width="727.50" height="15.40" fill="#2b2b2b"/>
<rect x="626.00" y="644.20" width="727.50" height="15.30" fill="#171717"/>
<rect x="626.00" y="659.50" width="727.50" height="28.00" fill="#414141"/>
<text x="644.3" y="679.5" font-size="16.6" fill="#f6f6f6" font-weight="bold" textLength="86.2" lengthAdjust="spacingAndGlyphs">x: CIE31</text>
<text x="827.0" y="679.5" font-size="16.6" fill="#f6f6f6" textLength="68.0" lengthAdjust="spacingAndGlyphs">0,3353</text>
<text x="933.3" y="679.5" font-size="16.6" fill="#f6f6f6" textLength="68.0" lengthAdjust="spacingAndGlyphs">0,3578</text>
<text x="1040.0" y="679.5" font-size="16.6" fill="#f6f6f6" textLength="68.0" lengthAdjust="spacingAndGlyphs">0,3786</text>
<text x="1146.3" y="679.5" font-size="16.6" fill="#f6f6f6" textLength="68.0" lengthAdjust="spacingAndGlyphs">0,3985</text>
<text x="1253.0" y="679.5" font-size="16.6" fill="#f6f6f6" textLength="68.0" lengthAdjust="spacingAndGlyphs">0,4193</text>
<rect x="626.00" y="687.50" width="727.50" height="28.75" fill="#818181"/>
<text x="644.3" y="708.2" font-size="16.6" fill="#ececec" font-weight="bold" textLength="86.2" lengthAdjust="spacingAndGlyphs">y: CIE31</text>
<text x="827.0" y="708.2" font-size="16.6" fill="#ececec" textLength="68.0" lengthAdjust="spacingAndGlyphs">0,3698</text>
<text x="933.3" y="708.2" font-size="16.6" fill="#ececec" textLength="68.0" lengthAdjust="spacingAndGlyphs">0,4062</text>
<text x="1040.0" y="708.2" font-size="16.6" fill="#ececec" textLength="68.0" lengthAdjust="spacingAndGlyphs">0,4401</text>
<text x="1146.3" y="708.2" font-size="16.6" fill="#ececec" textLength="68.0" lengthAdjust="spacingAndGlyphs">0,4727</text>
<text x="1253.0" y="708.2" font-size="16.6" fill="#ececec" textLength="68.0" lengthAdjust="spacingAndGlyphs">0,5069</text>
<rect x="626.00" y="716.25" width="727.50" height="28.75" fill="#414141"/>
<text x="644.3" y="736.8" font-size="16.6" fill="#f6f6f6" font-weight="bold" textLength="12.8" lengthAdjust="spacingAndGlyphs">Y</text>
<text x="827.0" y="736.8" font-size="16.6" fill="#f6f6f6" textLength="93.5" lengthAdjust="spacingAndGlyphs">239,7322</text>
<text x="933.3" y="736.8" font-size="16.6" fill="#f6f6f6" textLength="93.5" lengthAdjust="spacingAndGlyphs">234,9179</text>
<text x="1040.0" y="736.8" font-size="16.6" fill="#f6f6f6" textLength="93.5" lengthAdjust="spacingAndGlyphs">231,4116</text>
<text x="1146.3" y="736.8" font-size="16.6" fill="#f6f6f6" textLength="93.5" lengthAdjust="spacingAndGlyphs">228,6741</text>
<text x="1253.0" y="736.8" font-size="16.6" fill="#f6f6f6" textLength="93.5" lengthAdjust="spacingAndGlyphs">225,7289</text>
<rect x="626.00" y="745.00" width="727.50" height="28.00" fill="#818181"/>
<text x="644.3" y="765.5" font-size="16.6" fill="#ececec" font-weight="bold" textLength="156.4" lengthAdjust="spacingAndGlyphs">Target x:CIE31</text>
<text x="827.0" y="765.5" font-size="16.6" fill="#ececec" textLength="68.0" lengthAdjust="spacingAndGlyphs">0,3344</text>
<text x="933.3" y="765.5" font-size="16.6" fill="#ececec" textLength="68.0" lengthAdjust="spacingAndGlyphs">0,3564</text>
<text x="1040.0" y="765.5" font-size="16.6" fill="#ececec" textLength="68.0" lengthAdjust="spacingAndGlyphs">0,3773</text>
<text x="1146.3" y="765.5" font-size="16.6" fill="#ececec" textLength="68.0" lengthAdjust="spacingAndGlyphs">0,3969</text>
<text x="1253.0" y="765.5" font-size="16.6" fill="#ececec" textLength="68.0" lengthAdjust="spacingAndGlyphs">0,4193</text>
<rect x="626.00" y="773.00" width="727.50" height="29.00" fill="#414141"/>
<text x="644.3" y="793.8" font-size="16.6" fill="#f6f6f6" font-weight="bold" textLength="156.4" lengthAdjust="spacingAndGlyphs">Target y:CIE31</text>
<text x="827.0" y="793.8" font-size="16.6" fill="#f6f6f6" textLength="68.0" lengthAdjust="spacingAndGlyphs">0,3648</text>
<text x="933.3" y="793.8" font-size="16.6" fill="#f6f6f6" textLength="68.0" lengthAdjust="spacingAndGlyphs">0,4013</text>
<text x="1040.0" y="793.8" font-size="16.6" fill="#f6f6f6" textLength="68.0" lengthAdjust="spacingAndGlyphs">0,4358</text>
<text x="1146.3" y="793.8" font-size="16.6" fill="#f6f6f6" textLength="68.0" lengthAdjust="spacingAndGlyphs">0,4682</text>
<text x="1253.0" y="793.8" font-size="16.6" fill="#f6f6f6" textLength="68.0" lengthAdjust="spacingAndGlyphs">0,5053</text>
<rect x="626.00" y="802.00" width="727.50" height="28.50" fill="#818181"/>
<text x="644.3" y="822.2" font-size="16.6" fill="#ececec" font-weight="bold" textLength="90.5" lengthAdjust="spacingAndGlyphs">Target Y</text>
<text x="827.0" y="822.2" font-size="16.6" fill="#ececec" textLength="93.5" lengthAdjust="spacingAndGlyphs">238,2221</text>
<text x="933.3" y="822.2" font-size="16.6" fill="#ececec" textLength="93.5" lengthAdjust="spacingAndGlyphs">234,0406</text>
<text x="1040.0" y="822.2" font-size="16.6" fill="#ececec" textLength="93.5" lengthAdjust="spacingAndGlyphs">230,8278</text>
<text x="1146.3" y="822.2" font-size="16.6" fill="#ececec" textLength="93.5" lengthAdjust="spacingAndGlyphs">228,3063</text>
<text x="1253.0" y="822.2" font-size="16.6" fill="#ececec" textLength="93.5" lengthAdjust="spacingAndGlyphs">225,8686</text>
<rect x="626.00" y="830.50" width="727.50" height="27.10" fill="#414141"/>
<text x="644.3" y="850.5" font-size="16.6" fill="#f6f6f6" font-weight="bold" textLength="89.5" lengthAdjust="spacingAndGlyphs">ΔE 2000</text>
<text x="827.0" y="850.5" font-size="16.6" fill="#f6f6f6" textLength="68.0" lengthAdjust="spacingAndGlyphs">1,5769</text>
<text x="933.3" y="850.5" font-size="16.6" fill="#f6f6f6" textLength="68.0" lengthAdjust="spacingAndGlyphs">0,9171</text>
<text x="1040.0" y="850.5" font-size="16.6" fill="#f6f6f6" textLength="68.0" lengthAdjust="spacingAndGlyphs">0,6229</text>
<text x="1146.3" y="850.5" font-size="16.6" fill="#f6f6f6" textLength="68.0" lengthAdjust="spacingAndGlyphs">0,5687</text>
<text x="1253.0" y="850.5" font-size="16.6" fill="#f6f6f6" textLength="68.0" lengthAdjust="spacingAndGlyphs">0,2010</text>
<text x="854.0" y="650.0" font-size="15.6" fill="#f0f0f0" textLength="40.6" lengthAdjust="spacingAndGlyphs" stroke="#f0f0f0" stroke-width="0.55">20%</text>
<text x="960.3" y="650.0" font-size="15.6" fill="#f0f0f0" textLength="40.6" lengthAdjust="spacingAndGlyphs" stroke="#f0f0f0" stroke-width="0.55">40%</text>
<text x="1067.0" y="650.0" font-size="15.6" fill="#f0f0f0" textLength="40.6" lengthAdjust="spacingAndGlyphs" stroke="#f0f0f0" stroke-width="0.55">60%</text>
<text x="1173.3" y="650.0" font-size="15.6" fill="#f0f0f0" textLength="40.6" lengthAdjust="spacingAndGlyphs" stroke="#f0f0f0" stroke-width="0.55">80%</text>
<text x="1274.4" y="650.0" font-size="15.6" fill="#f0f0f0" textLength="51.8" lengthAdjust="spacingAndGlyphs" stroke="#f0f0f0" stroke-width="0.55">100%</text>
<rect x="0.00" y="872.00" width="1653.00" height="73.00" fill="url(#g44)"/>
<path d="M0 945 V872.6 H50 Q54.4 872.6 54.4 877 V945Z" fill="url(#g45)"/>
<circle cx="26.4" cy="884" r="9.3" fill="url(#g46)"/>
<path d="M20.8 886.8 L26.4 880.6 L32 886.8Z" fill="#2a2a2a"/>
<rect x="5" y="905.5" width="43.2" height="37.5" rx="4.5" fill="#ffff00" stroke="#c8c800" stroke-width="1.2"/>
<path d="M62.2 945 V877 Q62.2 872.6 66.6 872.6 H245.6 Q250.0 872.6 250.0 877 V945Z" fill="url(#g45)"/>
<rect x="69.0" y="879.6" width="174.2" height="44.2" rx="4.5" fill="#c1c2a3" stroke="#000" stroke-opacity="0.18" stroke-width="1.2"/>
<path d="M70.0 919 V885 Q70.0 880.6 74.4 880.6 H239.2" fill="none" stroke="#000" stroke-opacity="0.16" stroke-width="1.6"/>
<text x="156.0" y="943.2" font-size="12.3" fill="#242424" text-anchor="middle" font-weight="bold">20%</text>
<path d="M252.2 945 V877 Q252.2 872.6 256.6 872.6 H435.6 Q440.0 872.6 440.0 877 V945Z" fill="url(#g45)"/>
<rect x="259.0" y="879.6" width="174.2" height="44.2" rx="4.5" fill="#c1c184" stroke="#000" stroke-opacity="0.18" stroke-width="1.2"/>
<path d="M260.0 919 V885 Q260.0 880.6 264.4 880.6 H429.2" fill="none" stroke="#000" stroke-opacity="0.16" stroke-width="1.6"/>
<text x="346.0" y="943.2" font-size="12.3" fill="#242424" text-anchor="middle" font-weight="bold">40%</text>
<path d="M442.2 945 V877 Q442.2 872.6 446.6 872.6 H625.6 Q630.0 872.6 630.0 877 V945Z" fill="url(#g45)"/>
<rect x="449.0" y="879.6" width="174.2" height="44.2" rx="4.5" fill="#bfc06a" stroke="#000" stroke-opacity="0.18" stroke-width="1.2"/>
<path d="M450.0 919 V885 Q450.0 880.6 454.4 880.6 H619.2" fill="none" stroke="#000" stroke-opacity="0.16" stroke-width="1.6"/>
<text x="536.0" y="943.2" font-size="12.3" fill="#242424" text-anchor="middle" font-weight="bold">60%</text>
<path d="M632.2 945 V877 Q632.2 872.6 636.6 872.6 H815.6 Q820.0 872.6 820.0 877 V945Z" fill="url(#g45)"/>
<rect x="639.0" y="879.6" width="174.2" height="44.2" rx="4.5" fill="#c1bd4a" stroke="#000" stroke-opacity="0.18" stroke-width="1.2"/>
<path d="M640.0 919 V885 Q640.0 880.6 644.4 880.6 H809.2" fill="none" stroke="#000" stroke-opacity="0.16" stroke-width="1.6"/>
<text x="726.0" y="943.2" font-size="12.3" fill="#242424" text-anchor="middle" font-weight="bold">80%</text>
<path d="M822.0 945 V877 Q822.0 872.6 826.4 872.6 H1005.2 Q1009.6 872.6 1009.6 877 V945Z" fill="url(#g47)"/>
<rect x="828.6" y="879.2" width="175" height="44.4" rx="4.5" fill="#c3c100" stroke="#000" stroke-opacity="0.25" stroke-width="1.2"/>
<text x="915.8" y="943.2" font-size="12.3" fill="#fff" text-anchor="middle" font-weight="bold">100%</text>
<path d="M1263 945 V878 Q1263 872.4 1268.6 872.4 H1323.2 V945Z" fill="url(#g49)"/>
<line x1="1263.00" y1="895.20" x2="1323.20" y2="895.20" stroke="#5a5a5a" stroke-width="1"/>
<circle cx="1293.2" cy="883.8" r="9.3" fill="url(#g50)"/>
<path d="M1287.6 886.6 L1293.2 880.6 L1298.8 886.6Z" fill="#2a2a2a"/>
<rect x="1273.8" y="903.6" width="38.2" height="38" rx="5" fill="url(#g51)" stroke="#262626" stroke-width="2"/>
<rect x="1276.4" y="906.2" width="33" height="32.8" rx="3.5" fill="none" stroke="#d8d8d8" stroke-opacity="0.7" stroke-width="1"/>
<rect x="1284.5" y="913.8" width="17.5" height="17.5" fill="url(#g52)"/>
<rect x="1325.10" y="872.4" width="56.30" height="37" fill="url(#g48)"/>
<rect x="1382.60" y="872.4" width="55.05" height="37" fill="url(#g48)"/>
<rect x="1438.85" y="872.4" width="55.05" height="37" fill="url(#g48)"/>
<rect x="1495.10" y="872.4" width="55.55" height="37" fill="url(#g48)"/>
<rect x="1551.85" y="872.4" width="54.55" height="37" fill="url(#g48)"/>
<rect x="1607.60" y="872.40" width="50.00" height="37.00" fill="url(#g53)"/>
<circle cx="1636.5" cy="891.2" r="12.2" fill="#2b2b2b"/>
<circle cx="1353.00" cy="891.2" r="12.4" fill="url(#g54)"/>
<circle cx="1410.75" cy="891.2" r="12.4" fill="url(#g54)"/>
<circle cx="1467.00" cy="891.2" r="12.4" fill="url(#g54)"/>
<circle cx="1523.25" cy="891.2" r="12.4" fill="url(#g54)"/>
<circle cx="1580.00" cy="891.2" r="12.4" fill="url(#g54)"/>
<rect x="1348" y="886.2" width="10" height="10" fill="#303030"/>
<path d="M1406.6 885 L1417 891.2 L1406.6 897.4Z" fill="#303030"/>
<path d="M1462.4 884.4 h-2.9 v13.6 h2.9 M1471.6 884.4 h2.9 v13.6 h-2.9" fill="none" stroke="#303030" stroke-width="2.3"/>
<path d="M1462.6 891.2 h8.8" stroke="#303030" stroke-width="2" stroke-dasharray="2 1.4"/>
<path d="M1523.25 891.2 c-2 -3.6 -7.2 -3.6 -7.2 0 c0 3.6 5.2 3.6 7.2 0 c2 -3.6 7.2 -3.6 7.2 0 c0 3.6 -5.2 3.6 -7.2 0Z" fill="none" stroke="#303030" stroke-width="1.8"/>
<path d="M1574.2 890 a6 6 0 0 1 10.4 -3.2 M1585.8 892.4 a6 6 0 0 1 -10.4 3.2" fill="none" stroke="#303030" stroke-width="2.7"/>
<path d="M1587.2 882.6 v6.2 h-6.2Z M1572.8 899.8 v-6.2 h6.2Z" fill="#303030"/>
<rect x="1325.1" y="911.6" width="168.8" height="34" fill="url(#g48)"/>
<rect x="1496" y="911.6" width="158" height="34" fill="url(#g48)"/>
<text x="1397.0" y="938.8" font-size="26.2" fill="#333" textLength="62.5" lengthAdjust="spacingAndGlyphs" stroke="#333" stroke-width="0.5">Back</text>
<text x="1530.0" y="938.8" font-size="26.2" fill="#333" textLength="64.5" lengthAdjust="spacingAndGlyphs" stroke="#333" stroke-width="0.5">Next</text>
<circle cx="1363.25" cy="929.5" r="12" fill="url(#g54)"/>
<text x="1363.2" y="937.4" font-size="28" fill="#3a3a3a" text-anchor="middle" stroke="#3a3a3a" stroke-width="0.6">«</text>
<circle cx="1630.50" cy="929.5" r="12" fill="url(#g54)"/>
<text x="1630.5" y="937.4" font-size="28" fill="#3a3a3a" text-anchor="middle" stroke="#3a3a3a" stroke-width="0.6">»</text>
</svg>
</body></html>
